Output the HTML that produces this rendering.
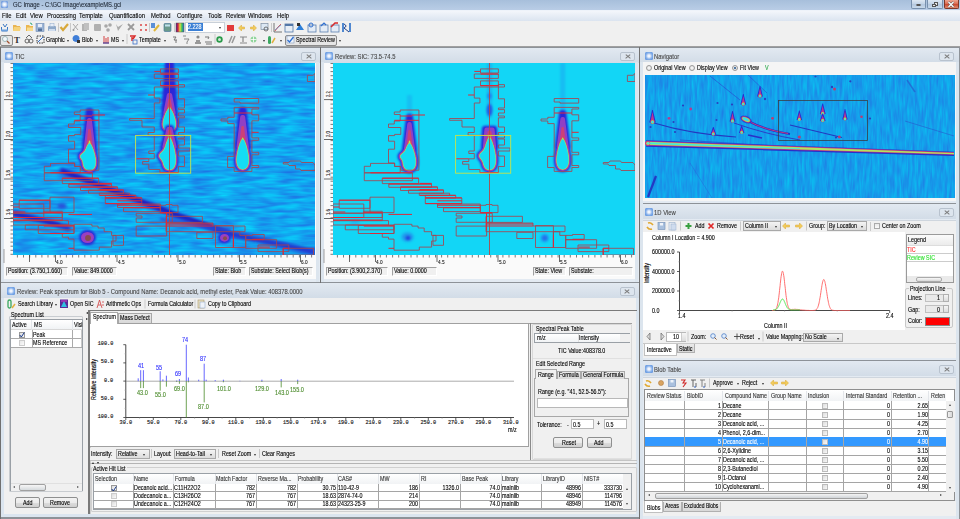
<!DOCTYPE html>
<html><head><meta charset="utf-8"><style>
*{box-sizing:border-box}
html,body{margin:0;padding:0}
body{width:960px;height:519px;overflow:hidden;position:relative;background:#f0f0f0;font-family:"Liberation Sans",sans-serif;font-size:7px;color:#000}
.a{position:absolute}
.t{position:absolute;white-space:nowrap;line-height:7px;height:7px;transform:scaleX(.84);transform-origin:0 0;-webkit-text-stroke:0.1px currentColor}
.pn{position:absolute;background:#e3eaf2;border-top:1px solid #8d9298}
.ptitle{position:absolute;left:0;right:0;top:0;height:15px;background:linear-gradient(#e2e9f1,#d2dce7)}
.pico{position:absolute;width:8px;height:8px;border-radius:1.5px;background:radial-gradient(circle at 50% 50%,#fff 0,#e6eefc 22%,#86b0ea 55%,#4f88da 100%)}
.pcl{position:absolute;width:15px;height:9px;border:1px solid #b8c2ce;border-radius:2px;background:#dde5ee}
.pcl:before,.pcl:after{content:"";position:absolute;left:3.5px;top:3px;width:6px;height:1.3px;background:#7a7a7a;transform:rotate(40deg)}.pcl:after{transform:rotate(-40deg)}
.vsep{position:absolute;background:#707070}
.ic{position:absolute;width:8px;height:8px}
.sep{position:absolute;width:1px;height:10px;background:#c5c5c5;border-right:1px solid #fff}
.dd{position:absolute;width:0;height:0;border-left:1.5px solid transparent;border-right:1.5px solid transparent;border-top:2px solid #333}
.s{position:absolute;white-space:nowrap;font-size:6.4px;line-height:6.4px;height:6.4px;transform:scaleX(.84);transform-origin:0 0;-webkit-text-stroke:0.12px currentColor}
.m{position:absolute;white-space:nowrap;font-family:"Liberation Mono",monospace;font-size:5.2px;line-height:5.2px;transform-origin:0 0;-webkit-text-stroke:0.15px currentColor}
.r{transform-origin:100% 0}

</style></head><body>
<div class="a" style="left:0;top:0;width:960px;height:10px;background:linear-gradient(#a7bfdb,#b9cde6)"></div>
<div class="a" style="left:0;top:10px;width:960px;height:1px;background:#eef3fa"></div>
<div class="a" style="left:1px;top:1px;width:7px;height:7px;border-radius:1.5px;background:radial-gradient(#fff 0,#e3ecfb 30%,#6f9be0 75%,#4d86d8 100%)"></div>
<div class="t" style="left:13px;top:1.3px;color:#1d2633">GC Image - C:\GC Image\exampleMS.gci</div>
<div class="a" style="left:910.5px;top:0;width:15.5px;height:8.5px;border:0.8px solid #7890ad;border-top:0;border-radius:0 0 2px 2px;background:linear-gradient(#dde7f2,#c2d3e6 50%,#b3c7de 51%,#c9d9ea)"></div>
<div class="a" style="left:915.5px;top:4px;width:5.5px;height:2px;border-radius:1px;background:#f4f4f4;border:0.6px solid #555"></div>
<div class="a" style="left:927px;top:0;width:15.5px;height:8.5px;border:0.8px solid #7890ad;border-top:0;border-radius:0 0 2px 2px;background:linear-gradient(#dde7f2,#c2d3e6 50%,#b3c7de 51%,#c9d9ea)"></div>
<div class="a" style="left:933.5px;top:2px;width:4px;height:3.5px;background:#e8e8e8;border:0.7px solid #555"></div><div class="a" style="left:932px;top:3.5px;width:4px;height:3.5px;background:#e8e8e8;border:0.7px solid #555"></div>
<div class="a" style="left:943.5px;top:0;width:15px;height:8.5px;border:0.8px solid #803828;border-top:0;border-radius:0 0 2px 2px;background:linear-gradient(#eea592,#d96a50 50%,#c8452c 51%,#e08a70)"></div>
<svg class="a" style="left:947px;top:1px" width="8" height="7"><path d="M1.5,1 L6.5,6 M6.5,1 L1.5,6" stroke="#555" stroke-width="2.2"/><path d="M1.5,1 L6.5,6 M6.5,1 L1.5,6" stroke="#fff" stroke-width="1.3"/></svg>
<div class="a" style="left:0;top:11px;width:960px;height:10px;background:linear-gradient(#f3f6fb,#dbe4f0)"></div>
<div class="t" style="left:2px;top:11.8px">File</div>
<div class="t" style="left:15.6px;top:11.8px">Edit</div>
<div class="t" style="left:29.7px;top:11.8px">View</div>
<div class="t" style="left:46.9px;top:11.8px">Processing</div>
<div class="t" style="left:79.2px;top:11.8px">Template</div>
<div class="t" style="left:109px;top:11.8px">Quantification</div>
<div class="t" style="left:151.3px;top:11.8px">Method</div>
<div class="t" style="left:176.7px;top:11.8px">Configure</div>
<div class="t" style="left:207.5px;top:11.8px">Tools</div>
<div class="t" style="left:225.8px;top:11.8px">Review</div>
<div class="t" style="left:248px;top:11.8px">Windows</div>
<div class="t" style="left:276.7px;top:11.8px">Help</div>
<div class="a" style="left:0;top:21px;width:960px;height:26px;background:#f0f0f0"></div>
<div class="a" style="left:0;top:46px;width:960px;height:1px;background:#a0a0a0"></div>
<div class="pn" style="left:0;top:47px;width:320px;height:236px"><div class="ptitle"></div><div class="pico" style="left:5px;top:4px"></div><div class="t" style="left:15px;top:4.5px;color:#444">TIC</div><div class="pcl" style="left:301px;top:4px"></div></div>
<div class="pn" style="left:321px;top:47px;width:319px;height:236px"><div class="ptitle"></div><div class="pico" style="left:4px;top:4px"></div><div class="t" style="left:14px;top:4.5px;color:#444">Review: SIC: 73.5-74.5</div><div class="pcl" style="left:299px;top:4px"></div></div>
<div class="pn" style="left:640px;top:47px;width:320px;height:156px"><div class="ptitle"></div><div class="pico" style="left:5px;top:4px"></div><div class="t" style="left:14px;top:4.5px;color:#444">Navigator</div><div class="pcl" style="left:299px;top:4px"></div></div>
<div class="pn" style="left:640px;top:203px;width:320px;height:157px"><div class="ptitle"></div><div class="pico" style="left:5px;top:4px"></div><div class="t" style="left:14px;top:4.5px;color:#444">1D View</div><div class="pcl" style="left:299px;top:4px"></div></div>
<div class="pn" style="left:640px;top:360px;width:320px;height:159px"><div class="ptitle"></div><div class="pico" style="left:5px;top:4px"></div><div class="t" style="left:14px;top:4.5px;color:#444">Blob Table</div><div class="pcl" style="left:299px;top:4px"></div></div>
<div class="pn" style="left:0;top:282px;width:640px;height:237px"><div class="ptitle"></div><div class="pico" style="left:7px;top:4px"></div><div class="t" style="left:17px;top:4.5px;color:#444">Review: Peak spectrum for Blob 5 - Compound Name: Decanoic acid, methyl ester, Peak Value: 408378.0000</div><div class="pcl" style="left:619.5px;top:4px"></div></div>



<!-- toolbar 1 -->
<svg class="a" style="left:0;top:21px" width="360" height="26">
<g stroke-width="1">
<!-- 1 import tray -->
<path d="M1.5,6 v4 h6 v-4" fill="none" stroke="#3b78c4"/><path d="M3,3 l2,3 l2,-3" fill="none" stroke="#3b78c4"/><rect x="1" y="8.5" width="7" height="1.5" fill="#6aa0dd"/>
<!-- 2 open folder -->
<path d="M13,4 h3 l1,1 h3 v5 h-7z" fill="#e8b453"/><path d="M14,6 h7 l-1,4 h-7z" fill="#f6d27a"/>
<!-- 3 folder -->
<path d="M26,4 h3 l1,1 h3 v5 h-7z" fill="#ebb64f"/><path d="M27,6.5 h6 v3.5 h-6z" fill="#f8dc8e"/><path d="M30,2 q2,0 2,2" stroke="#3a7" fill="none"/>
<!-- 4 save -->
<rect x="36" y="2.5" width="8" height="8" fill="#9db5d6" stroke="#6f8db5" stroke-width="0.6"/><rect x="38" y="3" width="4" height="3" fill="#e8eef7"/><rect x="38" y="7.5" width="4" height="2.5" fill="#55739c"/>
<!-- 5 print -->
<rect x="48" y="5" width="8" height="5" rx="1" fill="#8fa9c9"/><rect x="50" y="2.5" width="4" height="3" fill="#e7eef8" stroke="#8fa9c9" stroke-width="0.5"/><rect x="49" y="8" width="6" height="2" fill="#cfdcee"/>
<rect x="58" y="2" width="1" height="9" fill="#c9c9c9"/>
<!-- 6 yellow check -->
<path d="M60.5,6 l2.5,3 l5,-6" stroke="#d8a83a" stroke-width="2.2" fill="none"/>
<rect x="70" y="2" width="1" height="9" fill="#c9c9c9"/>
<!-- gray disabled icons -->
<path d="M73,3 l5,6 M78,3 l-5,6" stroke="#a8a8a8" stroke-width="1"/><circle cx="73.5" cy="9" r="1" fill="#999"/>
<rect x="82" y="3" width="5" height="7" fill="#b3b3b3"/><rect x="84" y="2" width="5" height="7" fill="#c0c0c0"/>
<rect x="94" y="3" width="7" height="7" rx="1" fill="#b0b0b0"/>
<circle cx="106" cy="5" r="1.8" fill="#a8a8a8"/><circle cx="110" cy="4" r="1.8" fill="#a8a8a8"/><circle cx="108" cy="9" r="1.8" fill="#a8a8a8"/>
<path d="M116,3 l2,3 l5,-3 l-5,7z" fill="#aaaaaa"/>
<path d="M128,3 l6,6 M134,3 l-6,6" stroke="#9a9a9a" stroke-width="1.8"/>
<g fill="#e07070"><rect x="140" y="3" width="2" height="2"/><rect x="145" y="3" width="2" height="2"/><rect x="140" y="8" width="2" height="2"/><rect x="145" y="8" width="2" height="2"/></g>
<rect x="149" y="2" width="1" height="9" fill="#c9c9c9"/>
<path d="M151,2 h4 v5 h-4z" fill="#5b8fd6"/><path d="M154,10 l5,-6" stroke="#e0b83a" stroke-width="2"/>
<rect x="164" y="2.5" width="7" height="8" rx="1" fill="#6a9a8c" stroke="#3d6f95" stroke-width="0.6"/><rect x="165" y="3.5" width="5" height="2" fill="#bfe0ee"/>
<rect x="174" y="2" width="1" height="9" fill="#c9c9c9"/>
<defs><linearGradient id="rb" x1="0" x2="1"><stop offset="0" stop-color="#5a1a8a"/><stop offset=".25" stop-color="#d02040"/><stop offset=".5" stop-color="#e8e040"/><stop offset=".75" stop-color="#30c060"/><stop offset="1" stop-color="#3060d0"/></linearGradient></defs>
<rect x="176" y="2" width="8" height="9" fill="url(#rb)" stroke="#555" stroke-width="0.5"/>
</g>
<!-- red stop -->
<rect x="227" y="4" width="7" height="6" fill="#e23a3a"/>
<path d="M238.5,7 l3,-3 v2 h3 v2 h-3 v2z" fill="#f2cc5c" stroke="#d9a730" stroke-width="0.5"/>
<path d="M256.5,7 l-3,-3 v2 h-3 v2 h3 v2z" fill="#f2cc5c" stroke="#d9a730" stroke-width="0.5"/>
<rect x="261" y="2.5" width="7" height="6" fill="#dce8f4" stroke="#7e8fa3" stroke-width="0.7"/><circle cx="266" cy="8" r="2" fill="none" stroke="#555" stroke-width="0.8"/>
<rect x="271" y="2" width="1" height="9" fill="#c9c9c9"/>
<path d="M274,2 v9 h8" stroke="#555" fill="none" stroke-width="0.8"/><path d="M275,10 l3,-4 l3,-3" stroke="#d04040" fill="none" stroke-width="0.8"/><path d="M275,9 l6,-5" stroke="#4070c0" fill="none" stroke-width="0.6"/>
<rect x="285" y="3" width="8" height="8" fill="#e8eef6" stroke="#5478a8" stroke-width="0.8"/><rect x="285" y="3" width="8" height="2" fill="#5478a8"/>
<path d="M296,9 l4,-6 l4,6z" fill="#2f7fd8"/><rect x="297" y="2" width="3" height="3" fill="#333"/>
<rect x="308" y="4" width="8" height="7" fill="#e4ecf6" stroke="#5a7fb0" stroke-width="0.8"/><circle cx="311" cy="4" r="2" fill="none" stroke="#2f6fd0" stroke-width="1"/>
<rect x="320" y="4" width="8" height="7" fill="#e4ecf6" stroke="#5a7fb0" stroke-width="0.8"/><path d="M321,5 l3,-3 l2,2" stroke="#2f6fd0" stroke-width="1.2" fill="none"/>
<rect x="331" y="4" width="8" height="7" fill="#e4ecf6" stroke="#5a7fb0" stroke-width="0.8"/><path d="M331,6 l4,-4 h3" stroke="#d82a2a" stroke-width="1.5" fill="none"/>
<path d="M343,2 v9 M350,2 v9" stroke="#2a6fc8" stroke-width="1.6"/><path d="M344,3 q4,2 0,4 l5,4" stroke="#1f3f88" stroke-width="1" fill="none"/>
</svg>
<!-- combobox 2.228 -->
<div class="a" style="left:185px;top:21.5px;width:40px;height:11.5px;background:#fff;border:1px solid #c9d0d8"></div>
<div class="a" style="left:187.5px;top:23px;width:15px;height:8px;background:#3a7fd5"></div>
<div class="s" style="left:188px;top:24px;color:#fff">2.228</div>
<div class="dd" style="left:218.5px;top:27px"></div>
<!-- toolbar 2 -->
<div class="a" style="left:0;top:34.5px;width:12.5px;height:11px;border:1px solid #8a8a8a;border-radius:2px;background:#e6e6e6"></div>
<svg class="a" style="left:0;top:33px" width="360" height="13">
<circle cx="5" cy="6" r="2.5" fill="#f4f8fc" stroke="#8aa" stroke-width="0.8"/><path d="M7,8 l2.5,2.5" stroke="#a05030" stroke-width="1.2"/>
<text x="14" y="10" font-family="Liberation Serif" font-size="9" font-weight="bold" fill="#333">T</text>
<circle cx="27" cy="8" r="2" fill="none" stroke="#444" stroke-width="0.8"/><circle cx="31" cy="8" r="2" fill="none" stroke="#444" stroke-width="0.8"/><path d="M26,5 l3,-3 l3,3" stroke="#444" fill="none" stroke-width="0.8"/>
<rect x="37" y="3" width="7" height="7" fill="none" stroke="#333" stroke-width="1" stroke-dasharray="1.5 1"/><path d="M38,9 l5,-5" stroke="#2f6fd0" stroke-width="1"/>
<path d="M76,2 a3.5,3.5 0 1,0 0.1,0z" fill="#3f7ed8"/><rect x="77" y="7" width="3" height="3" fill="#333"/>
<path d="M103,10 h6 M104,10 v-7 M106,10 v-5 M108,10 v-6" stroke="#d03030" stroke-width="0.9" fill="none"/><path d="M103,10 h6" stroke="#3050c0"/>
<rect x="126.5" y="1" width="1" height="10" fill="#c9c9c9"/>
<path d="M130,3 h5 l-2,3 M132,4 v4" stroke="#d82a2a" stroke-width="1.4" fill="none"/><rect x="133" y="7" width="4" height="4" fill="none" stroke="#3a6fc8" stroke-width="0.8"/>
<path d="M173,4 h3 l-2,3 h3 M176,7 v3" stroke="#777" stroke-width="1" fill="none"/>
<path d="M183,3 h3 M184,6 h5 l-2,3 M187,9 v2" stroke="#888" stroke-width="1" fill="none"/>
<circle cx="198" cy="4" r="1.6" fill="#888"/><path d="M195,9 h6 v2 h-6z M196,7 h4 v2 h-4z" fill="#999"/>
<path d="M205,4 h4 l-1,2 M205,9 h7 M206,11 h6" stroke="#777" stroke-width="1" fill="none"/>
<rect x="214.5" y="1" width="1" height="10" fill="#c9c9c9"/>
<circle cx="219.5" cy="6.5" r="3.2" fill="#2a9a4a"/><circle cx="219.5" cy="6.5" r="1.5" fill="#cfe8d5"/>
<path d="M229,10 l3,-7 M232,10 l3,-7" stroke="#9a9a9a" stroke-width="1.6"/>
<path d="M240,4 h7 M243,4 v5 M240,10 h7" stroke="#888" stroke-width="1.2" fill="none"/>
<circle cx="253.5" cy="6.5" r="3" fill="#8fd49a"/><path d="M253.5,3.5 v6 M250.5,6.5 h6" stroke="#fff" stroke-width="0.8"/>
<rect x="268" y="3" width="3" height="8" rx="1.5" fill="#3aa860"/><path d="M272,10 l3,-5" stroke="#e0b040" stroke-width="1.5"/>
</svg>
<div class="s" style="left:46px;top:36.8px">Graphic</div><div class="dd" style="left:67px;top:40px"></div>
<div class="s" style="left:82px;top:36.8px">Blob</div><div class="dd" style="left:96px;top:40px"></div>
<div class="s" style="left:111px;top:36.8px">MS</div><div class="dd" style="left:122px;top:40px"></div>
<div class="s" style="left:139px;top:36.8px">Template</div><div class="dd" style="left:164px;top:40px"></div>
<div class="dd" style="left:263px;top:40px"></div><div class="dd" style="left:280px;top:40px"></div>
<div class="a" style="left:284.5px;top:34.5px;width:52.5px;height:11px;border:1px solid #8a8a8a;border-radius:2px;background:#e6e6e6"></div>
<svg class="a" style="left:286px;top:35px" width="9" height="9"><rect x="1" y="1" width="7" height="7" fill="#eef3fa" stroke="#8aa0c0" stroke-width="0.6"/><path d="M1.5,5 l2,2 l4,-5" stroke="#2f6fd0" stroke-width="1.3" fill="none"/></svg>
<div class="s" style="left:296px;top:36.8px">Spectral Review</div><div class="dd" style="left:338.5px;top:40px"></div>
<div class="a" style="left:4px;top:63px;width:312px;height:216px;background:#fafafa"></div><div class="a" style="left:1px;top:62px;width:3px;height:220px;background:#dce5ee"></div><div class="a" style="left:316px;top:62px;width:3px;height:220px;background:#dce5ee"></div><svg class="a" style="left:0px;top:63px" width="320" height="205"><path d="M10.5,0.5 H13" stroke="#444" stroke-width="0.7"/><path d="M10.5,4.6 H13" stroke="#444" stroke-width="0.7"/><path d="M10.5,8.6 H13" stroke="#444" stroke-width="0.7"/><path d="M10.5,12.7 H13" stroke="#444" stroke-width="0.7"/><path d="M10.5,16.7 H13" stroke="#444" stroke-width="0.7"/><path d="M10.5,20.8 H13" stroke="#444" stroke-width="0.7"/><path d="M10.5,24.9 H13" stroke="#444" stroke-width="0.7"/><path d="M10.5,28.9 H13" stroke="#444" stroke-width="0.7"/><path d="M10.5,33.0 H13" stroke="#444" stroke-width="0.7"/><path d="M10.5,37.0 H13" stroke="#444" stroke-width="0.7"/><path d="M10.5,41.1 H13" stroke="#444" stroke-width="0.7"/><path d="M10.5,45.2 H13" stroke="#444" stroke-width="0.7"/><path d="M10.5,49.2 H13" stroke="#444" stroke-width="0.7"/><path d="M10.5,53.3 H13" stroke="#444" stroke-width="0.7"/><path d="M10.5,57.3 H13" stroke="#444" stroke-width="0.7"/><path d="M10.5,61.4 H13" stroke="#444" stroke-width="0.7"/><path d="M10.5,65.5 H13" stroke="#444" stroke-width="0.7"/><path d="M10.5,69.5 H13" stroke="#444" stroke-width="0.7"/><path d="M10.5,73.6 H13" stroke="#444" stroke-width="0.7"/><path d="M10.5,77.6 H13" stroke="#444" stroke-width="0.7"/><path d="M10.5,81.7 H13" stroke="#444" stroke-width="0.7"/><path d="M10.5,85.8 H13" stroke="#444" stroke-width="0.7"/><path d="M10.5,89.8 H13" stroke="#444" stroke-width="0.7"/><path d="M10.5,93.9 H13" stroke="#444" stroke-width="0.7"/><path d="M10.5,97.9 H13" stroke="#444" stroke-width="0.7"/><path d="M10.5,102.0 H13" stroke="#444" stroke-width="0.7"/><path d="M10.5,106.1 H13" stroke="#444" stroke-width="0.7"/><path d="M10.5,110.1 H13" stroke="#444" stroke-width="0.7"/><path d="M10.5,114.2 H13" stroke="#444" stroke-width="0.7"/><path d="M10.5,118.2 H13" stroke="#444" stroke-width="0.7"/><path d="M10.5,122.3 H13" stroke="#444" stroke-width="0.7"/><path d="M10.5,126.4 H13" stroke="#444" stroke-width="0.7"/><path d="M10.5,130.4 H13" stroke="#444" stroke-width="0.7"/><path d="M10.5,134.5 H13" stroke="#444" stroke-width="0.7"/><path d="M10.5,138.5 H13" stroke="#444" stroke-width="0.7"/><path d="M10.5,142.6 H13" stroke="#444" stroke-width="0.7"/><path d="M10.5,146.7 H13" stroke="#444" stroke-width="0.7"/><path d="M10.5,150.7 H13" stroke="#444" stroke-width="0.7"/><path d="M10.5,154.8 H13" stroke="#444" stroke-width="0.7"/><path d="M10.5,158.8 H13" stroke="#444" stroke-width="0.7"/><path d="M10.5,162.9 H13" stroke="#444" stroke-width="0.7"/><path d="M10.5,167.0 H13" stroke="#444" stroke-width="0.7"/><path d="M10.5,171.0 H13" stroke="#444" stroke-width="0.7"/><path d="M10.5,175.1 H13" stroke="#444" stroke-width="0.7"/><path d="M10.5,179.1 H13" stroke="#444" stroke-width="0.7"/><path d="M10.5,183.2 H13" stroke="#444" stroke-width="0.7"/><path d="M10.5,187.3 H13" stroke="#444" stroke-width="0.7"/><path d="M10.5,191.3 H13" stroke="#444" stroke-width="0.7"/><path d="M4,36.6 H13" stroke="#444" stroke-width="0.8"/><path d="M4,76.5 H13" stroke="#444" stroke-width="0.8"/><path d="M4,116 H13" stroke="#444" stroke-width="0.8"/><path d="M4,155.5 H13" stroke="#444" stroke-width="0.8"/><path d="M17.4,192 v2.5" stroke="#444" stroke-width="0.7"/><path d="M23.5,192 v2.5" stroke="#444" stroke-width="0.7"/><path d="M29.7,192 v2.5" stroke="#444" stroke-width="0.7"/><path d="M35.8,192 v2.5" stroke="#444" stroke-width="0.7"/><path d="M41.9,192 v2.5" stroke="#444" stroke-width="0.7"/><path d="M48.0,192 v2.5" stroke="#444" stroke-width="0.7"/><path d="M54.2,192 v2.5" stroke="#444" stroke-width="0.7"/><path d="M60.3,192 v2.5" stroke="#444" stroke-width="0.7"/><path d="M66.4,192 v2.5" stroke="#444" stroke-width="0.7"/><path d="M72.6,192 v2.5" stroke="#444" stroke-width="0.7"/><path d="M78.7,192 v2.5" stroke="#444" stroke-width="0.7"/><path d="M84.8,192 v2.5" stroke="#444" stroke-width="0.7"/><path d="M91.0,192 v2.5" stroke="#444" stroke-width="0.7"/><path d="M97.1,192 v2.5" stroke="#444" stroke-width="0.7"/><path d="M103.2,192 v2.5" stroke="#444" stroke-width="0.7"/><path d="M109.3,192 v2.5" stroke="#444" stroke-width="0.7"/><path d="M115.5,192 v2.5" stroke="#444" stroke-width="0.7"/><path d="M121.6,192 v2.5" stroke="#444" stroke-width="0.7"/><path d="M127.7,192 v2.5" stroke="#444" stroke-width="0.7"/><path d="M133.9,192 v2.5" stroke="#444" stroke-width="0.7"/><path d="M140.0,192 v2.5" stroke="#444" stroke-width="0.7"/><path d="M146.1,192 v2.5" stroke="#444" stroke-width="0.7"/><path d="M152.3,192 v2.5" stroke="#444" stroke-width="0.7"/><path d="M158.4,192 v2.5" stroke="#444" stroke-width="0.7"/><path d="M164.5,192 v2.5" stroke="#444" stroke-width="0.7"/><path d="M170.7,192 v2.5" stroke="#444" stroke-width="0.7"/><path d="M176.8,192 v2.5" stroke="#444" stroke-width="0.7"/><path d="M182.9,192 v2.5" stroke="#444" stroke-width="0.7"/><path d="M189.0,192 v2.5" stroke="#444" stroke-width="0.7"/><path d="M195.2,192 v2.5" stroke="#444" stroke-width="0.7"/><path d="M201.3,192 v2.5" stroke="#444" stroke-width="0.7"/><path d="M207.4,192 v2.5" stroke="#444" stroke-width="0.7"/><path d="M213.6,192 v2.5" stroke="#444" stroke-width="0.7"/><path d="M219.7,192 v2.5" stroke="#444" stroke-width="0.7"/><path d="M225.8,192 v2.5" stroke="#444" stroke-width="0.7"/><path d="M231.9,192 v2.5" stroke="#444" stroke-width="0.7"/><path d="M238.1,192 v2.5" stroke="#444" stroke-width="0.7"/><path d="M244.2,192 v2.5" stroke="#444" stroke-width="0.7"/><path d="M250.3,192 v2.5" stroke="#444" stroke-width="0.7"/><path d="M256.5,192 v2.5" stroke="#444" stroke-width="0.7"/><path d="M262.6,192 v2.5" stroke="#444" stroke-width="0.7"/><path d="M268.7,192 v2.5" stroke="#444" stroke-width="0.7"/><path d="M274.9,192 v2.5" stroke="#444" stroke-width="0.7"/><path d="M281.0,192 v2.5" stroke="#444" stroke-width="0.7"/><path d="M287.1,192 v2.5" stroke="#444" stroke-width="0.7"/><path d="M293.2,192 v2.5" stroke="#444" stroke-width="0.7"/><path d="M299.4,192 v2.5" stroke="#444" stroke-width="0.7"/><path d="M305.5,192 v2.5" stroke="#444" stroke-width="0.7"/><path d="M311.6,192 v2.5" stroke="#444" stroke-width="0.7"/><path d="M29.5,192 v7" stroke="#444" stroke-width="0.8"/><path d="M55.5,192 v7" stroke="#444" stroke-width="0.8"/><path d="M117,192 v7" stroke="#444" stroke-width="0.8"/><path d="M178,192 v7" stroke="#444" stroke-width="0.8"/><path d="M239.5,192 v7" stroke="#444" stroke-width="0.8"/><path d="M300.5,192 v7" stroke="#444" stroke-width="0.8"/><path d="M4,186 v14" stroke="#888" stroke-width="0.8"/></svg><div class="s" style="left:56px;top:258.8px;color:#222;font-size:5.6px">4.0</div><div class="s" style="left:117.5px;top:258.8px;color:#222;font-size:5.6px">4.5</div><div class="s" style="left:178.5px;top:258.8px;color:#222;font-size:5.6px">5.0</div><div class="s" style="left:240px;top:258.8px;color:#222;font-size:5.6px">5.5</div><div class="s" style="left:301px;top:258.8px;color:#222;font-size:5.6px">6.0</div><div class="s" style="left:4.8px;top:97px;color:#222;font-size:5px;transform:rotate(-90deg) scaleX(.84)">2.2</div><div class="s" style="left:4.8px;top:136.5px;color:#222;font-size:5px;transform:rotate(-90deg) scaleX(.84)">2.0</div><div class="s" style="left:4.8px;top:176px;color:#222;font-size:5px;transform:rotate(-90deg) scaleX(.84)">1.8</div><div class="s" style="left:4.8px;top:215px;color:#222;font-size:5px;transform:rotate(-90deg) scaleX(.84)">1.6</div><div class="a" style="left:324px;top:63px;width:311px;height:216px;background:#fafafa"></div><div class="a" style="left:321px;top:62px;width:3px;height:220px;background:#dce5ee"></div><div class="a" style="left:635px;top:62px;width:3px;height:220px;background:#dce5ee"></div><svg class="a" style="left:320px;top:63px" width="320" height="205"><path d="M10.5,0.5 H13" stroke="#444" stroke-width="0.7"/><path d="M10.5,4.6 H13" stroke="#444" stroke-width="0.7"/><path d="M10.5,8.6 H13" stroke="#444" stroke-width="0.7"/><path d="M10.5,12.7 H13" stroke="#444" stroke-width="0.7"/><path d="M10.5,16.7 H13" stroke="#444" stroke-width="0.7"/><path d="M10.5,20.8 H13" stroke="#444" stroke-width="0.7"/><path d="M10.5,24.9 H13" stroke="#444" stroke-width="0.7"/><path d="M10.5,28.9 H13" stroke="#444" stroke-width="0.7"/><path d="M10.5,33.0 H13" stroke="#444" stroke-width="0.7"/><path d="M10.5,37.0 H13" stroke="#444" stroke-width="0.7"/><path d="M10.5,41.1 H13" stroke="#444" stroke-width="0.7"/><path d="M10.5,45.2 H13" stroke="#444" stroke-width="0.7"/><path d="M10.5,49.2 H13" stroke="#444" stroke-width="0.7"/><path d="M10.5,53.3 H13" stroke="#444" stroke-width="0.7"/><path d="M10.5,57.3 H13" stroke="#444" stroke-width="0.7"/><path d="M10.5,61.4 H13" stroke="#444" stroke-width="0.7"/><path d="M10.5,65.5 H13" stroke="#444" stroke-width="0.7"/><path d="M10.5,69.5 H13" stroke="#444" stroke-width="0.7"/><path d="M10.5,73.6 H13" stroke="#444" stroke-width="0.7"/><path d="M10.5,77.6 H13" stroke="#444" stroke-width="0.7"/><path d="M10.5,81.7 H13" stroke="#444" stroke-width="0.7"/><path d="M10.5,85.8 H13" stroke="#444" stroke-width="0.7"/><path d="M10.5,89.8 H13" stroke="#444" stroke-width="0.7"/><path d="M10.5,93.9 H13" stroke="#444" stroke-width="0.7"/><path d="M10.5,97.9 H13" stroke="#444" stroke-width="0.7"/><path d="M10.5,102.0 H13" stroke="#444" stroke-width="0.7"/><path d="M10.5,106.1 H13" stroke="#444" stroke-width="0.7"/><path d="M10.5,110.1 H13" stroke="#444" stroke-width="0.7"/><path d="M10.5,114.2 H13" stroke="#444" stroke-width="0.7"/><path d="M10.5,118.2 H13" stroke="#444" stroke-width="0.7"/><path d="M10.5,122.3 H13" stroke="#444" stroke-width="0.7"/><path d="M10.5,126.4 H13" stroke="#444" stroke-width="0.7"/><path d="M10.5,130.4 H13" stroke="#444" stroke-width="0.7"/><path d="M10.5,134.5 H13" stroke="#444" stroke-width="0.7"/><path d="M10.5,138.5 H13" stroke="#444" stroke-width="0.7"/><path d="M10.5,142.6 H13" stroke="#444" stroke-width="0.7"/><path d="M10.5,146.7 H13" stroke="#444" stroke-width="0.7"/><path d="M10.5,150.7 H13" stroke="#444" stroke-width="0.7"/><path d="M10.5,154.8 H13" stroke="#444" stroke-width="0.7"/><path d="M10.5,158.8 H13" stroke="#444" stroke-width="0.7"/><path d="M10.5,162.9 H13" stroke="#444" stroke-width="0.7"/><path d="M10.5,167.0 H13" stroke="#444" stroke-width="0.7"/><path d="M10.5,171.0 H13" stroke="#444" stroke-width="0.7"/><path d="M10.5,175.1 H13" stroke="#444" stroke-width="0.7"/><path d="M10.5,179.1 H13" stroke="#444" stroke-width="0.7"/><path d="M10.5,183.2 H13" stroke="#444" stroke-width="0.7"/><path d="M10.5,187.3 H13" stroke="#444" stroke-width="0.7"/><path d="M10.5,191.3 H13" stroke="#444" stroke-width="0.7"/><path d="M4,36.6 H13" stroke="#444" stroke-width="0.8"/><path d="M4,76.5 H13" stroke="#444" stroke-width="0.8"/><path d="M4,116 H13" stroke="#444" stroke-width="0.8"/><path d="M4,155.5 H13" stroke="#444" stroke-width="0.8"/><path d="M17.4,192 v2.5" stroke="#444" stroke-width="0.7"/><path d="M23.5,192 v2.5" stroke="#444" stroke-width="0.7"/><path d="M29.7,192 v2.5" stroke="#444" stroke-width="0.7"/><path d="M35.8,192 v2.5" stroke="#444" stroke-width="0.7"/><path d="M41.9,192 v2.5" stroke="#444" stroke-width="0.7"/><path d="M48.0,192 v2.5" stroke="#444" stroke-width="0.7"/><path d="M54.2,192 v2.5" stroke="#444" stroke-width="0.7"/><path d="M60.3,192 v2.5" stroke="#444" stroke-width="0.7"/><path d="M66.4,192 v2.5" stroke="#444" stroke-width="0.7"/><path d="M72.6,192 v2.5" stroke="#444" stroke-width="0.7"/><path d="M78.7,192 v2.5" stroke="#444" stroke-width="0.7"/><path d="M84.8,192 v2.5" stroke="#444" stroke-width="0.7"/><path d="M91.0,192 v2.5" stroke="#444" stroke-width="0.7"/><path d="M97.1,192 v2.5" stroke="#444" stroke-width="0.7"/><path d="M103.2,192 v2.5" stroke="#444" stroke-width="0.7"/><path d="M109.3,192 v2.5" stroke="#444" stroke-width="0.7"/><path d="M115.5,192 v2.5" stroke="#444" stroke-width="0.7"/><path d="M121.6,192 v2.5" stroke="#444" stroke-width="0.7"/><path d="M127.7,192 v2.5" stroke="#444" stroke-width="0.7"/><path d="M133.9,192 v2.5" stroke="#444" stroke-width="0.7"/><path d="M140.0,192 v2.5" stroke="#444" stroke-width="0.7"/><path d="M146.1,192 v2.5" stroke="#444" stroke-width="0.7"/><path d="M152.3,192 v2.5" stroke="#444" stroke-width="0.7"/><path d="M158.4,192 v2.5" stroke="#444" stroke-width="0.7"/><path d="M164.5,192 v2.5" stroke="#444" stroke-width="0.7"/><path d="M170.7,192 v2.5" stroke="#444" stroke-width="0.7"/><path d="M176.8,192 v2.5" stroke="#444" stroke-width="0.7"/><path d="M182.9,192 v2.5" stroke="#444" stroke-width="0.7"/><path d="M189.0,192 v2.5" stroke="#444" stroke-width="0.7"/><path d="M195.2,192 v2.5" stroke="#444" stroke-width="0.7"/><path d="M201.3,192 v2.5" stroke="#444" stroke-width="0.7"/><path d="M207.4,192 v2.5" stroke="#444" stroke-width="0.7"/><path d="M213.6,192 v2.5" stroke="#444" stroke-width="0.7"/><path d="M219.7,192 v2.5" stroke="#444" stroke-width="0.7"/><path d="M225.8,192 v2.5" stroke="#444" stroke-width="0.7"/><path d="M231.9,192 v2.5" stroke="#444" stroke-width="0.7"/><path d="M238.1,192 v2.5" stroke="#444" stroke-width="0.7"/><path d="M244.2,192 v2.5" stroke="#444" stroke-width="0.7"/><path d="M250.3,192 v2.5" stroke="#444" stroke-width="0.7"/><path d="M256.5,192 v2.5" stroke="#444" stroke-width="0.7"/><path d="M262.6,192 v2.5" stroke="#444" stroke-width="0.7"/><path d="M268.7,192 v2.5" stroke="#444" stroke-width="0.7"/><path d="M274.9,192 v2.5" stroke="#444" stroke-width="0.7"/><path d="M281.0,192 v2.5" stroke="#444" stroke-width="0.7"/><path d="M287.1,192 v2.5" stroke="#444" stroke-width="0.7"/><path d="M293.2,192 v2.5" stroke="#444" stroke-width="0.7"/><path d="M299.4,192 v2.5" stroke="#444" stroke-width="0.7"/><path d="M305.5,192 v2.5" stroke="#444" stroke-width="0.7"/><path d="M311.6,192 v2.5" stroke="#444" stroke-width="0.7"/><path d="M29.5,192 v7" stroke="#444" stroke-width="0.8"/><path d="M55.5,192 v7" stroke="#444" stroke-width="0.8"/><path d="M117,192 v7" stroke="#444" stroke-width="0.8"/><path d="M178,192 v7" stroke="#444" stroke-width="0.8"/><path d="M239.5,192 v7" stroke="#444" stroke-width="0.8"/><path d="M300.5,192 v7" stroke="#444" stroke-width="0.8"/><path d="M4,186 v14" stroke="#888" stroke-width="0.8"/></svg><div class="s" style="left:376px;top:258.8px;color:#222;font-size:5.6px">4.0</div><div class="s" style="left:437.5px;top:258.8px;color:#222;font-size:5.6px">4.5</div><div class="s" style="left:498.5px;top:258.8px;color:#222;font-size:5.6px">5.0</div><div class="s" style="left:560px;top:258.8px;color:#222;font-size:5.6px">5.5</div><div class="s" style="left:621px;top:258.8px;color:#222;font-size:5.6px">6.0</div><div class="s" style="left:324.8px;top:97px;color:#222;font-size:5px;transform:rotate(-90deg) scaleX(.84)">2.2</div><div class="s" style="left:324.8px;top:136.5px;color:#222;font-size:5px;transform:rotate(-90deg) scaleX(.84)">2.0</div><div class="s" style="left:324.8px;top:176px;color:#222;font-size:5px;transform:rotate(-90deg) scaleX(.84)">1.8</div><div class="s" style="left:324.8px;top:215px;color:#222;font-size:5px;transform:rotate(-90deg) scaleX(.84)">1.6</div><svg class="a" style="left:13px;top:63px" width="302" height="192"><defs>
<filter id="bl0" x="-50%" y="-50%" width="200%" height="200%" color-interpolation-filters="sRGB"><feGaussianBlur stdDeviation="1.1"/></filter>
<filter id="bl1" x="-50%" y="-50%" width="200%" height="200%" color-interpolation-filters="sRGB"><feGaussianBlur stdDeviation="0.6"/></filter>
<filter id="bl2" x="-50%" y="-50%" width="200%" height="200%" color-interpolation-filters="sRGB"><feGaussianBlur stdDeviation="0.45"/></filter>
<filter id="bl3" x="-50%" y="-50%" width="200%" height="200%" color-interpolation-filters="sRGB"><feGaussianBlur stdDeviation="0.35"/></filter>
<filter id="bl4" x="-50%" y="-50%" width="200%" height="200%" color-interpolation-filters="sRGB"><feGaussianBlur stdDeviation="0.3"/></filter>
<filter id="b2" x="-50%" y="-50%" width="200%" height="200%" color-interpolation-filters="sRGB"><feGaussianBlur stdDeviation="1.6"/></filter>
<filter id="b1" x="-50%" y="-50%" width="200%" height="200%" color-interpolation-filters="sRGB"><feGaussianBlur stdDeviation="0.8"/></filter>
<filter id="nz" x="0" y="0" width="100%" height="100%" color-interpolation-filters="sRGB"><feTurbulence type="fractalNoise" baseFrequency="0.045 0.28" numOctaves="2" seed="7"/><feColorMatrix type="matrix" values="0 0 0 -0.12 0.13  0 0 0 0.52 0.39  0 0 0 0.12 0.88  0 0 0 0 1"/></filter>
</defs><rect width="302" height="192" filter="url(#nz)"/><path d="M47,107 L107,130 L162,152 L217,171 L302,189" stroke="#2438d0" stroke-width="6" fill="none" filter="url(#b2)"/><path d="M49,108 L107,130.5 L162,151 L217,170" stroke="#2020c0" stroke-width="3.2" fill="none" filter="url(#b1)"/><path d="M0,150 L32,158 L57,166" stroke="#2438d0" stroke-width="5.5" fill="none" filter="url(#b2)"/><path d="M0,151 L32,158 L47,162" stroke="#2020c0" stroke-width="2.8" fill="none" filter="url(#b1)"/><ellipse cx="49" cy="143" rx="5" ry="3" fill="#2a50d8" filter="url(#b2)"/><path d="M147,156 L217,168" stroke="#2a50d8" stroke-width="3" fill="none" filter="url(#b2)"/><ellipse cx="74.5" cy="174.5" rx="8.5" ry="7.7" fill="#2a2ad8" filter="url(#b1)"/><ellipse cx="74.5" cy="174.5" rx="6.5" ry="5.5249999999999995" fill="#9a40c0" filter="url(#bl1)"/><ellipse cx="75.0" cy="175.0" rx="2.9250000000000003" ry="2.9250000000000003" fill="#8a4a50" filter="url(#bl1)"/><ellipse cx="211.5" cy="174.8" rx="6.5" ry="5.7" fill="#2a2ad8" filter="url(#b1)"/><ellipse cx="211.5" cy="174.8" rx="4.5" ry="3.8249999999999997" fill="#9a40c0" filter="url(#bl1)"/><ellipse cx="212.0" cy="175.3" rx="2.025" ry="2.025" fill="#8a4a50" filter="url(#bl1)"/><g filter="url(#bl0)"><path d="M76.5,80.5 L77.4,81.2 L77.9,81.8 L78.3,82.5 L78.6,83.2 L78.9,83.8 L79.2,84.5 L79.5,85.2 L79.7,85.9 L80.0,86.5 L80.2,87.2 L80.4,87.9 L80.6,88.5 L80.8,89.2 L81.0,89.9 L81.2,90.6 L81.4,91.2 L81.5,91.9 L81.7,92.6 L81.8,93.2 L81.9,93.9 L82.1,94.6 L82.2,95.2 L82.3,95.9 L82.4,96.6 L82.4,97.2 L82.5,97.9 L82.5,98.6 L82.5,99.3 L82.5,99.9 L82.4,100.6 L82.3,101.3 L82.2,101.9 L82.1,102.6 L81.8,103.3 L81.6,104.0 L81.2,104.6 L80.7,105.3 L80.1,106.0 L79.1,106.6 L76.5,107.3 L76.5,107.3 L73.8,106.6 L72.8,106.0 L72.1,105.3 L71.7,104.6 L71.3,104.0 L71.0,103.3 L70.7,102.6 L70.6,101.9 L70.4,101.3 L70.3,100.6 L70.2,99.9 L70.1,99.3 L70.0,98.6 L69.8,97.9 L69.5,97.2 L69.2,96.6 L68.7,95.9 L68.2,95.2 L67.8,94.6 L67.6,93.9 L67.5,93.2 L67.7,92.6 L68.2,91.9 L68.9,91.2 L69.6,90.6 L70.4,89.9 L71.0,89.2 L71.6,88.5 L72.1,87.9 L72.5,87.2 L72.8,86.5 L73.1,85.9 L73.4,85.2 L73.7,84.5 L74.0,83.8 L74.3,83.2 L74.6,82.5 L75.0,81.8 L75.5,81.2 L76.5,80.5 Z" fill="#2a26d8" stroke="#2a26d8" stroke-width="6.0" stroke-linejoin="round"/><path d="M75.7,48.0 L77.3,48.0 L81.3,87.0 L71.7,87.0 Z" fill="#2a26d8" stroke="#2a26d8" stroke-width="6.0" stroke-linejoin="round"/></g><g filter="url(#bl1)"><path d="M76.5,80.5 L77.4,81.2 L77.9,81.8 L78.3,82.5 L78.6,83.2 L78.9,83.8 L79.2,84.5 L79.5,85.2 L79.7,85.9 L80.0,86.5 L80.2,87.2 L80.4,87.9 L80.6,88.5 L80.8,89.2 L81.0,89.9 L81.2,90.6 L81.4,91.2 L81.5,91.9 L81.7,92.6 L81.8,93.2 L81.9,93.9 L82.1,94.6 L82.2,95.2 L82.3,95.9 L82.4,96.6 L82.4,97.2 L82.5,97.9 L82.5,98.6 L82.5,99.3 L82.5,99.9 L82.4,100.6 L82.3,101.3 L82.2,101.9 L82.1,102.6 L81.8,103.3 L81.6,104.0 L81.2,104.6 L80.7,105.3 L80.1,106.0 L79.1,106.6 L76.5,107.3 L76.5,107.3 L73.8,106.6 L72.8,106.0 L72.1,105.3 L71.7,104.6 L71.3,104.0 L71.0,103.3 L70.7,102.6 L70.6,101.9 L70.4,101.3 L70.3,100.6 L70.2,99.9 L70.1,99.3 L70.0,98.6 L69.8,97.9 L69.5,97.2 L69.2,96.6 L68.7,95.9 L68.2,95.2 L67.8,94.6 L67.6,93.9 L67.5,93.2 L67.7,92.6 L68.2,91.9 L68.9,91.2 L69.6,90.6 L70.4,89.9 L71.0,89.2 L71.6,88.5 L72.1,87.9 L72.5,87.2 L72.8,86.5 L73.1,85.9 L73.4,85.2 L73.7,84.5 L74.0,83.8 L74.3,83.2 L74.6,82.5 L75.0,81.8 L75.5,81.2 L76.5,80.5 Z" fill="#9040c4" stroke="#9040c4" stroke-width="3.8" stroke-linejoin="round"/><path d="M76.0,57.0 L77.0,57.0 L80.5,87.0 L72.5,87.0 Z" fill="#9040c4" stroke="#9040c4" stroke-width="3.8" stroke-linejoin="round"/></g><g filter="url(#bl2)"><path d="M76.5,80.5 L77.4,81.2 L77.9,81.8 L78.3,82.5 L78.6,83.2 L78.9,83.8 L79.2,84.5 L79.5,85.2 L79.7,85.9 L80.0,86.5 L80.2,87.2 L80.4,87.9 L80.6,88.5 L80.8,89.2 L81.0,89.9 L81.2,90.6 L81.4,91.2 L81.5,91.9 L81.7,92.6 L81.8,93.2 L81.9,93.9 L82.1,94.6 L82.2,95.2 L82.3,95.9 L82.4,96.6 L82.4,97.2 L82.5,97.9 L82.5,98.6 L82.5,99.3 L82.5,99.9 L82.4,100.6 L82.3,101.3 L82.2,101.9 L82.1,102.6 L81.8,103.3 L81.6,104.0 L81.2,104.6 L80.7,105.3 L80.1,106.0 L79.1,106.6 L76.5,107.3 L76.5,107.3 L73.8,106.6 L72.8,106.0 L72.1,105.3 L71.7,104.6 L71.3,104.0 L71.0,103.3 L70.7,102.6 L70.6,101.9 L70.4,101.3 L70.3,100.6 L70.2,99.9 L70.1,99.3 L70.0,98.6 L69.8,97.9 L69.5,97.2 L69.2,96.6 L68.7,95.9 L68.2,95.2 L67.8,94.6 L67.6,93.9 L67.5,93.2 L67.7,92.6 L68.2,91.9 L68.9,91.2 L69.6,90.6 L70.4,89.9 L71.0,89.2 L71.6,88.5 L72.1,87.9 L72.5,87.2 L72.8,86.5 L73.1,85.9 L73.4,85.2 L73.7,84.5 L74.0,83.8 L74.3,83.2 L74.6,82.5 L75.0,81.8 L75.5,81.2 L76.5,80.5 Z" fill="#cc4078" stroke="#cc4078" stroke-width="2.2" stroke-linejoin="round"/><path d="M76.3,67.0 L76.7,67.0 L79.0,87.0 L74.0,87.0 Z" fill="#cc4078" stroke="#cc4078" stroke-width="2.2" stroke-linejoin="round"/></g><g filter="url(#bl3)"><path d="M76.5,80.5 L77.4,81.2 L77.9,81.8 L78.3,82.5 L78.6,83.2 L78.9,83.8 L79.2,84.5 L79.5,85.2 L79.7,85.9 L80.0,86.5 L80.2,87.2 L80.4,87.9 L80.6,88.5 L80.8,89.2 L81.0,89.9 L81.2,90.6 L81.4,91.2 L81.5,91.9 L81.7,92.6 L81.8,93.2 L81.9,93.9 L82.1,94.6 L82.2,95.2 L82.3,95.9 L82.4,96.6 L82.4,97.2 L82.5,97.9 L82.5,98.6 L82.5,99.3 L82.5,99.9 L82.4,100.6 L82.3,101.3 L82.2,101.9 L82.1,102.6 L81.8,103.3 L81.6,104.0 L81.2,104.6 L80.7,105.3 L80.1,106.0 L79.1,106.6 L76.5,107.3 L76.5,107.3 L73.8,106.6 L72.8,106.0 L72.1,105.3 L71.7,104.6 L71.3,104.0 L71.0,103.3 L70.7,102.6 L70.6,101.9 L70.4,101.3 L70.3,100.6 L70.2,99.9 L70.1,99.3 L70.0,98.6 L69.8,97.9 L69.5,97.2 L69.2,96.6 L68.7,95.9 L68.2,95.2 L67.8,94.6 L67.6,93.9 L67.5,93.2 L67.7,92.6 L68.2,91.9 L68.9,91.2 L69.6,90.6 L70.4,89.9 L71.0,89.2 L71.6,88.5 L72.1,87.9 L72.5,87.2 L72.8,86.5 L73.1,85.9 L73.4,85.2 L73.7,84.5 L74.0,83.8 L74.3,83.2 L74.6,82.5 L75.0,81.8 L75.5,81.2 L76.5,80.5 Z" fill="#c0e640" stroke="#c0e640" stroke-width="1.1" stroke-linejoin="round"/><path d="M76.4,78.0 L76.6,78.0 L78.0,87.0 L75.0,87.0 Z" fill="#c0e640" stroke="#c0e640" stroke-width="1.1" stroke-linejoin="round"/></g><path d="M76.5,80.5 L77.4,81.2 L77.9,81.8 L78.3,82.5 L78.6,83.2 L78.9,83.8 L79.2,84.5 L79.5,85.2 L79.7,85.9 L80.0,86.5 L80.2,87.2 L80.4,87.9 L80.6,88.5 L80.8,89.2 L81.0,89.9 L81.2,90.6 L81.4,91.2 L81.5,91.9 L81.7,92.6 L81.8,93.2 L81.9,93.9 L82.1,94.6 L82.2,95.2 L82.3,95.9 L82.4,96.6 L82.4,97.2 L82.5,97.9 L82.5,98.6 L82.5,99.3 L82.5,99.9 L82.4,100.6 L82.3,101.3 L82.2,101.9 L82.1,102.6 L81.8,103.3 L81.6,104.0 L81.2,104.6 L80.7,105.3 L80.1,106.0 L79.1,106.6 L76.5,107.3 L76.5,107.3 L73.8,106.6 L72.8,106.0 L72.1,105.3 L71.7,104.6 L71.3,104.0 L71.0,103.3 L70.7,102.6 L70.6,101.9 L70.4,101.3 L70.3,100.6 L70.2,99.9 L70.1,99.3 L70.0,98.6 L69.8,97.9 L69.5,97.2 L69.2,96.6 L68.7,95.9 L68.2,95.2 L67.8,94.6 L67.6,93.9 L67.5,93.2 L67.7,92.6 L68.2,91.9 L68.9,91.2 L69.6,90.6 L70.4,89.9 L71.0,89.2 L71.6,88.5 L72.1,87.9 L72.5,87.2 L72.8,86.5 L73.1,85.9 L73.4,85.2 L73.7,84.5 L74.0,83.8 L74.3,83.2 L74.6,82.5 L75.0,81.8 L75.5,81.2 L76.5,80.5 Z" fill="#14dcf4" stroke="#14dcf4" stroke-width="0.3" filter="url(#bl4)"/><g filter="url(#bl0)"><path d="M156.5,45.5 L157.4,46.1 L157.9,46.6 L158.3,47.2 L158.6,47.8 L158.9,48.3 L159.2,48.9 L159.5,49.4 L159.7,50.0 L160.0,50.6 L160.2,51.1 L160.4,51.7 L160.6,52.2 L160.8,52.8 L161.0,53.4 L161.2,53.9 L161.4,54.5 L161.5,55.1 L161.7,55.6 L161.8,56.2 L161.9,56.8 L162.1,57.3 L162.2,57.9 L162.3,58.4 L162.4,59.0 L162.4,59.6 L162.5,60.1 L162.5,60.7 L162.5,61.2 L162.5,61.8 L162.4,62.4 L162.3,62.9 L162.2,63.5 L162.1,64.1 L161.8,64.6 L161.6,65.2 L161.2,65.8 L160.7,66.3 L160.1,66.9 L159.1,67.4 L156.5,68.0 L156.5,68.0 L153.8,67.4 L152.8,66.9 L152.1,66.3 L151.6,65.8 L151.2,65.2 L150.9,64.6 L150.7,64.1 L150.5,63.5 L150.4,62.9 L150.3,62.4 L150.2,61.8 L150.2,61.2 L150.2,60.7 L150.2,60.1 L150.3,59.6 L150.4,59.0 L150.4,58.4 L150.5,57.9 L150.7,57.3 L150.8,56.8 L150.9,56.2 L151.1,55.6 L151.2,55.1 L151.4,54.5 L151.6,53.9 L151.8,53.4 L152.0,52.8 L152.2,52.2 L152.4,51.7 L152.6,51.1 L152.8,50.6 L153.1,50.0 L153.4,49.4 L153.6,48.9 L153.9,48.3 L154.3,47.8 L154.6,47.2 L155.0,46.6 L155.5,46.1 L156.5,45.5 Z" fill="#2a26d8" stroke="#2a26d8" stroke-width="6.0" stroke-linejoin="round"/><path d="M155.0,0.0 L158.0,0.0 L161.7,50.0 L151.3,50.0 Z" fill="#2a26d8" stroke="#2a26d8" stroke-width="6.0" stroke-linejoin="round"/></g><g filter="url(#bl1)"><path d="M156.5,45.5 L157.4,46.1 L157.9,46.6 L158.3,47.2 L158.6,47.8 L158.9,48.3 L159.2,48.9 L159.5,49.4 L159.7,50.0 L160.0,50.6 L160.2,51.1 L160.4,51.7 L160.6,52.2 L160.8,52.8 L161.0,53.4 L161.2,53.9 L161.4,54.5 L161.5,55.1 L161.7,55.6 L161.8,56.2 L161.9,56.8 L162.1,57.3 L162.2,57.9 L162.3,58.4 L162.4,59.0 L162.4,59.6 L162.5,60.1 L162.5,60.7 L162.5,61.2 L162.5,61.8 L162.4,62.4 L162.3,62.9 L162.2,63.5 L162.1,64.1 L161.8,64.6 L161.6,65.2 L161.2,65.8 L160.7,66.3 L160.1,66.9 L159.1,67.4 L156.5,68.0 L156.5,68.0 L153.8,67.4 L152.8,66.9 L152.1,66.3 L151.6,65.8 L151.2,65.2 L150.9,64.6 L150.7,64.1 L150.5,63.5 L150.4,62.9 L150.3,62.4 L150.2,61.8 L150.2,61.2 L150.2,60.7 L150.2,60.1 L150.3,59.6 L150.4,59.0 L150.4,58.4 L150.5,57.9 L150.7,57.3 L150.8,56.8 L150.9,56.2 L151.1,55.6 L151.2,55.1 L151.4,54.5 L151.6,53.9 L151.8,53.4 L152.0,52.8 L152.2,52.2 L152.4,51.7 L152.6,51.1 L152.8,50.6 L153.1,50.0 L153.4,49.4 L153.6,48.9 L153.9,48.3 L154.3,47.8 L154.6,47.2 L155.0,46.6 L155.5,46.1 L156.5,45.5 Z" fill="#9040c4" stroke="#9040c4" stroke-width="3.8" stroke-linejoin="round"/><path d="M155.7,32.0 L157.3,32.0 L160.8,50.0 L152.2,50.0 Z" fill="#9040c4" stroke="#9040c4" stroke-width="3.8" stroke-linejoin="round"/></g><g filter="url(#bl2)"><path d="M156.5,45.5 L157.4,46.1 L157.9,46.6 L158.3,47.2 L158.6,47.8 L158.9,48.3 L159.2,48.9 L159.5,49.4 L159.7,50.0 L160.0,50.6 L160.2,51.1 L160.4,51.7 L160.6,52.2 L160.8,52.8 L161.0,53.4 L161.2,53.9 L161.4,54.5 L161.5,55.1 L161.7,55.6 L161.8,56.2 L161.9,56.8 L162.1,57.3 L162.2,57.9 L162.3,58.4 L162.4,59.0 L162.4,59.6 L162.5,60.1 L162.5,60.7 L162.5,61.2 L162.5,61.8 L162.4,62.4 L162.3,62.9 L162.2,63.5 L162.1,64.1 L161.8,64.6 L161.6,65.2 L161.2,65.8 L160.7,66.3 L160.1,66.9 L159.1,67.4 L156.5,68.0 L156.5,68.0 L153.8,67.4 L152.8,66.9 L152.1,66.3 L151.6,65.8 L151.2,65.2 L150.9,64.6 L150.7,64.1 L150.5,63.5 L150.4,62.9 L150.3,62.4 L150.2,61.8 L150.2,61.2 L150.2,60.7 L150.2,60.1 L150.3,59.6 L150.4,59.0 L150.4,58.4 L150.5,57.9 L150.7,57.3 L150.8,56.8 L150.9,56.2 L151.1,55.6 L151.2,55.1 L151.4,54.5 L151.6,53.9 L151.8,53.4 L152.0,52.8 L152.2,52.2 L152.4,51.7 L152.6,51.1 L152.8,50.6 L153.1,50.0 L153.4,49.4 L153.6,48.9 L153.9,48.3 L154.3,47.8 L154.6,47.2 L155.0,46.6 L155.5,46.1 L156.5,45.5 Z" fill="#cc4078" stroke="#cc4078" stroke-width="2.2" stroke-linejoin="round"/><path d="M156.3,37.0 L156.7,37.0 L159.2,50.0 L153.8,50.0 Z" fill="#cc4078" stroke="#cc4078" stroke-width="2.2" stroke-linejoin="round"/></g><g filter="url(#bl3)"><path d="M156.5,45.5 L157.4,46.1 L157.9,46.6 L158.3,47.2 L158.6,47.8 L158.9,48.3 L159.2,48.9 L159.5,49.4 L159.7,50.0 L160.0,50.6 L160.2,51.1 L160.4,51.7 L160.6,52.2 L160.8,52.8 L161.0,53.4 L161.2,53.9 L161.4,54.5 L161.5,55.1 L161.7,55.6 L161.8,56.2 L161.9,56.8 L162.1,57.3 L162.2,57.9 L162.3,58.4 L162.4,59.0 L162.4,59.6 L162.5,60.1 L162.5,60.7 L162.5,61.2 L162.5,61.8 L162.4,62.4 L162.3,62.9 L162.2,63.5 L162.1,64.1 L161.8,64.6 L161.6,65.2 L161.2,65.8 L160.7,66.3 L160.1,66.9 L159.1,67.4 L156.5,68.0 L156.5,68.0 L153.8,67.4 L152.8,66.9 L152.1,66.3 L151.6,65.8 L151.2,65.2 L150.9,64.6 L150.7,64.1 L150.5,63.5 L150.4,62.9 L150.3,62.4 L150.2,61.8 L150.2,61.2 L150.2,60.7 L150.2,60.1 L150.3,59.6 L150.4,59.0 L150.4,58.4 L150.5,57.9 L150.7,57.3 L150.8,56.8 L150.9,56.2 L151.1,55.6 L151.2,55.1 L151.4,54.5 L151.6,53.9 L151.8,53.4 L152.0,52.8 L152.2,52.2 L152.4,51.7 L152.6,51.1 L152.8,50.6 L153.1,50.0 L153.4,49.4 L153.6,48.9 L153.9,48.3 L154.3,47.8 L154.6,47.2 L155.0,46.6 L155.5,46.1 L156.5,45.5 Z" fill="#c0e640" stroke="#c0e640" stroke-width="1.1" stroke-linejoin="round"/><path d="M156.4,44.0 L156.6,44.0 L158.1,50.0 L154.9,50.0 Z" fill="#c0e640" stroke="#c0e640" stroke-width="1.1" stroke-linejoin="round"/></g><path d="M156.5,45.5 L157.4,46.1 L157.9,46.6 L158.3,47.2 L158.6,47.8 L158.9,48.3 L159.2,48.9 L159.5,49.4 L159.7,50.0 L160.0,50.6 L160.2,51.1 L160.4,51.7 L160.6,52.2 L160.8,52.8 L161.0,53.4 L161.2,53.9 L161.4,54.5 L161.5,55.1 L161.7,55.6 L161.8,56.2 L161.9,56.8 L162.1,57.3 L162.2,57.9 L162.3,58.4 L162.4,59.0 L162.4,59.6 L162.5,60.1 L162.5,60.7 L162.5,61.2 L162.5,61.8 L162.4,62.4 L162.3,62.9 L162.2,63.5 L162.1,64.1 L161.8,64.6 L161.6,65.2 L161.2,65.8 L160.7,66.3 L160.1,66.9 L159.1,67.4 L156.5,68.0 L156.5,68.0 L153.8,67.4 L152.8,66.9 L152.1,66.3 L151.6,65.8 L151.2,65.2 L150.9,64.6 L150.7,64.1 L150.5,63.5 L150.4,62.9 L150.3,62.4 L150.2,61.8 L150.2,61.2 L150.2,60.7 L150.2,60.1 L150.3,59.6 L150.4,59.0 L150.4,58.4 L150.5,57.9 L150.7,57.3 L150.8,56.8 L150.9,56.2 L151.1,55.6 L151.2,55.1 L151.4,54.5 L151.6,53.9 L151.8,53.4 L152.0,52.8 L152.2,52.2 L152.4,51.7 L152.6,51.1 L152.8,50.6 L153.1,50.0 L153.4,49.4 L153.6,48.9 L153.9,48.3 L154.3,47.8 L154.6,47.2 L155.0,46.6 L155.5,46.1 L156.5,45.5 Z" fill="#14dcf4" stroke="#14dcf4" stroke-width="0.3" filter="url(#bl4)"/><g filter="url(#bl0)"><path d="M156.5,75.0 L157.4,75.8 L157.9,76.6 L158.3,77.4 L158.6,78.2 L158.9,79.0 L159.2,79.8 L159.5,80.6 L159.7,81.4 L160.0,82.2 L160.2,82.9 L160.4,83.7 L160.6,84.5 L160.8,85.3 L161.0,86.1 L161.2,86.9 L161.4,87.7 L161.5,88.5 L161.7,89.3 L161.8,90.1 L161.9,90.9 L162.1,91.7 L162.2,92.5 L162.3,93.3 L162.4,94.1 L162.4,94.9 L162.5,95.7 L162.5,96.5 L162.5,97.3 L162.5,98.1 L162.4,98.9 L162.3,99.6 L162.2,100.4 L162.1,101.2 L161.8,102.0 L161.6,102.8 L161.2,103.6 L160.7,104.4 L160.1,105.2 L159.1,106.0 L156.5,106.8 L156.5,106.8 L153.8,106.0 L152.8,105.2 L152.1,104.4 L151.6,103.6 L151.3,102.8 L151.0,102.0 L150.7,101.2 L150.5,100.4 L150.3,99.6 L150.0,98.9 L149.7,98.1 L149.2,97.3 L148.7,96.5 L148.1,95.7 L147.5,94.9 L147.0,94.1 L146.7,93.3 L146.6,92.5 L146.9,91.7 L147.4,90.9 L148.1,90.1 L148.9,89.3 L149.7,88.5 L150.4,87.7 L151.0,86.9 L151.5,86.1 L151.8,85.3 L152.1,84.5 L152.4,83.7 L152.7,82.9 L152.9,82.2 L153.1,81.4 L153.4,80.6 L153.7,79.8 L154.0,79.0 L154.3,78.2 L154.6,77.4 L155.0,76.6 L155.5,75.8 L156.5,75.0 Z" fill="#2a26d8" stroke="#2a26d8" stroke-width="6.0" stroke-linejoin="round"/><path d="M155.0,65.0 L158.0,65.0 L162.8,84.0 L150.2,84.0 Z" fill="#2a26d8" stroke="#2a26d8" stroke-width="6.0" stroke-linejoin="round"/></g><g filter="url(#bl1)"><path d="M156.5,75.0 L157.4,75.8 L157.9,76.6 L158.3,77.4 L158.6,78.2 L158.9,79.0 L159.2,79.8 L159.5,80.6 L159.7,81.4 L160.0,82.2 L160.2,82.9 L160.4,83.7 L160.6,84.5 L160.8,85.3 L161.0,86.1 L161.2,86.9 L161.4,87.7 L161.5,88.5 L161.7,89.3 L161.8,90.1 L161.9,90.9 L162.1,91.7 L162.2,92.5 L162.3,93.3 L162.4,94.1 L162.4,94.9 L162.5,95.7 L162.5,96.5 L162.5,97.3 L162.5,98.1 L162.4,98.9 L162.3,99.6 L162.2,100.4 L162.1,101.2 L161.8,102.0 L161.6,102.8 L161.2,103.6 L160.7,104.4 L160.1,105.2 L159.1,106.0 L156.5,106.8 L156.5,106.8 L153.8,106.0 L152.8,105.2 L152.1,104.4 L151.6,103.6 L151.3,102.8 L151.0,102.0 L150.7,101.2 L150.5,100.4 L150.3,99.6 L150.0,98.9 L149.7,98.1 L149.2,97.3 L148.7,96.5 L148.1,95.7 L147.5,94.9 L147.0,94.1 L146.7,93.3 L146.6,92.5 L146.9,91.7 L147.4,90.9 L148.1,90.1 L148.9,89.3 L149.7,88.5 L150.4,87.7 L151.0,86.9 L151.5,86.1 L151.8,85.3 L152.1,84.5 L152.4,83.7 L152.7,82.9 L152.9,82.2 L153.1,81.4 L153.4,80.6 L153.7,79.8 L154.0,79.0 L154.3,78.2 L154.6,77.4 L155.0,76.6 L155.5,75.8 L156.5,75.0 Z" fill="#9040c4" stroke="#9040c4" stroke-width="3.8" stroke-linejoin="round"/><path d="M155.3,66.0 L157.7,66.0 L161.7,84.0 L151.3,84.0 Z" fill="#9040c4" stroke="#9040c4" stroke-width="3.8" stroke-linejoin="round"/></g><g filter="url(#bl2)"><path d="M156.5,75.0 L157.4,75.8 L157.9,76.6 L158.3,77.4 L158.6,78.2 L158.9,79.0 L159.2,79.8 L159.5,80.6 L159.7,81.4 L160.0,82.2 L160.2,82.9 L160.4,83.7 L160.6,84.5 L160.8,85.3 L161.0,86.1 L161.2,86.9 L161.4,87.7 L161.5,88.5 L161.7,89.3 L161.8,90.1 L161.9,90.9 L162.1,91.7 L162.2,92.5 L162.3,93.3 L162.4,94.1 L162.4,94.9 L162.5,95.7 L162.5,96.5 L162.5,97.3 L162.5,98.1 L162.4,98.9 L162.3,99.6 L162.2,100.4 L162.1,101.2 L161.8,102.0 L161.6,102.8 L161.2,103.6 L160.7,104.4 L160.1,105.2 L159.1,106.0 L156.5,106.8 L156.5,106.8 L153.8,106.0 L152.8,105.2 L152.1,104.4 L151.6,103.6 L151.3,102.8 L151.0,102.0 L150.7,101.2 L150.5,100.4 L150.3,99.6 L150.0,98.9 L149.7,98.1 L149.2,97.3 L148.7,96.5 L148.1,95.7 L147.5,94.9 L147.0,94.1 L146.7,93.3 L146.6,92.5 L146.9,91.7 L147.4,90.9 L148.1,90.1 L148.9,89.3 L149.7,88.5 L150.4,87.7 L151.0,86.9 L151.5,86.1 L151.8,85.3 L152.1,84.5 L152.4,83.7 L152.7,82.9 L152.9,82.2 L153.1,81.4 L153.4,80.6 L153.7,79.8 L154.0,79.0 L154.3,78.2 L154.6,77.4 L155.0,76.6 L155.5,75.8 L156.5,75.0 Z" fill="#cc4078" stroke="#cc4078" stroke-width="2.2" stroke-linejoin="round"/><path d="M155.9,68.0 L157.1,68.0 L159.8,84.0 L153.2,84.0 Z" fill="#cc4078" stroke="#cc4078" stroke-width="2.2" stroke-linejoin="round"/></g><g filter="url(#bl3)"><path d="M156.5,75.0 L157.4,75.8 L157.9,76.6 L158.3,77.4 L158.6,78.2 L158.9,79.0 L159.2,79.8 L159.5,80.6 L159.7,81.4 L160.0,82.2 L160.2,82.9 L160.4,83.7 L160.6,84.5 L160.8,85.3 L161.0,86.1 L161.2,86.9 L161.4,87.7 L161.5,88.5 L161.7,89.3 L161.8,90.1 L161.9,90.9 L162.1,91.7 L162.2,92.5 L162.3,93.3 L162.4,94.1 L162.4,94.9 L162.5,95.7 L162.5,96.5 L162.5,97.3 L162.5,98.1 L162.4,98.9 L162.3,99.6 L162.2,100.4 L162.1,101.2 L161.8,102.0 L161.6,102.8 L161.2,103.6 L160.7,104.4 L160.1,105.2 L159.1,106.0 L156.5,106.8 L156.5,106.8 L153.8,106.0 L152.8,105.2 L152.1,104.4 L151.6,103.6 L151.3,102.8 L151.0,102.0 L150.7,101.2 L150.5,100.4 L150.3,99.6 L150.0,98.9 L149.7,98.1 L149.2,97.3 L148.7,96.5 L148.1,95.7 L147.5,94.9 L147.0,94.1 L146.7,93.3 L146.6,92.5 L146.9,91.7 L147.4,90.9 L148.1,90.1 L148.9,89.3 L149.7,88.5 L150.4,87.7 L151.0,86.9 L151.5,86.1 L151.8,85.3 L152.1,84.5 L152.4,83.7 L152.7,82.9 L152.9,82.2 L153.1,81.4 L153.4,80.6 L153.7,79.8 L154.0,79.0 L154.3,78.2 L154.6,77.4 L155.0,76.6 L155.5,75.8 L156.5,75.0 Z" fill="#c0e640" stroke="#c0e640" stroke-width="1.1" stroke-linejoin="round"/><path d="M156.4,73.0 L156.6,73.0 L158.4,84.0 L154.6,84.0 Z" fill="#c0e640" stroke="#c0e640" stroke-width="1.1" stroke-linejoin="round"/></g><path d="M156.5,75.0 L157.4,75.8 L157.9,76.6 L158.3,77.4 L158.6,78.2 L158.9,79.0 L159.2,79.8 L159.5,80.6 L159.7,81.4 L160.0,82.2 L160.2,82.9 L160.4,83.7 L160.6,84.5 L160.8,85.3 L161.0,86.1 L161.2,86.9 L161.4,87.7 L161.5,88.5 L161.7,89.3 L161.8,90.1 L161.9,90.9 L162.1,91.7 L162.2,92.5 L162.3,93.3 L162.4,94.1 L162.4,94.9 L162.5,95.7 L162.5,96.5 L162.5,97.3 L162.5,98.1 L162.4,98.9 L162.3,99.6 L162.2,100.4 L162.1,101.2 L161.8,102.0 L161.6,102.8 L161.2,103.6 L160.7,104.4 L160.1,105.2 L159.1,106.0 L156.5,106.8 L156.5,106.8 L153.8,106.0 L152.8,105.2 L152.1,104.4 L151.6,103.6 L151.3,102.8 L151.0,102.0 L150.7,101.2 L150.5,100.4 L150.3,99.6 L150.0,98.9 L149.7,98.1 L149.2,97.3 L148.7,96.5 L148.1,95.7 L147.5,94.9 L147.0,94.1 L146.7,93.3 L146.6,92.5 L146.9,91.7 L147.4,90.9 L148.1,90.1 L148.9,89.3 L149.7,88.5 L150.4,87.7 L151.0,86.9 L151.5,86.1 L151.8,85.3 L152.1,84.5 L152.4,83.7 L152.7,82.9 L152.9,82.2 L153.1,81.4 L153.4,80.6 L153.7,79.8 L154.0,79.0 L154.3,78.2 L154.6,77.4 L155.0,76.6 L155.5,75.8 L156.5,75.0 Z" fill="#14dcf4" stroke="#14dcf4" stroke-width="0.3" filter="url(#bl4)"/><g filter="url(#bl0)"><path d="M229.7,76.3 L230.6,77.0 L231.1,77.8 L231.4,78.5 L231.8,79.3 L232.1,80.0 L232.3,80.8 L232.6,81.5 L232.8,82.3 L233.1,83.0 L233.3,83.8 L233.5,84.5 L233.7,85.3 L233.9,86.0 L234.1,86.8 L234.2,87.5 L234.4,88.3 L234.6,89.0 L234.7,89.8 L234.8,90.5 L235.0,91.2 L235.1,92.0 L235.2,92.7 L235.3,93.5 L235.4,94.2 L235.4,95.0 L235.5,95.7 L235.5,96.5 L235.5,97.2 L235.5,98.0 L235.4,98.7 L235.4,99.5 L235.2,100.2 L235.1,101.0 L234.9,101.7 L234.6,102.5 L234.2,103.2 L233.8,104.0 L233.1,104.7 L232.2,105.5 L229.7,106.2 L229.7,106.2 L227.2,105.5 L226.3,104.7 L225.6,104.0 L225.2,103.2 L224.8,102.5 L224.5,101.7 L224.3,101.0 L224.2,100.2 L224.0,99.5 L224.0,98.7 L223.9,98.0 L223.9,97.2 L223.9,96.5 L223.9,95.7 L224.0,95.0 L224.0,94.2 L224.1,93.5 L224.2,92.7 L224.3,92.0 L224.4,91.2 L224.6,90.5 L224.7,89.8 L224.8,89.0 L225.0,88.3 L225.2,87.5 L225.3,86.8 L225.5,86.0 L225.7,85.3 L225.9,84.5 L226.1,83.8 L226.3,83.0 L226.6,82.3 L226.8,81.5 L227.1,80.8 L227.3,80.0 L227.6,79.3 L228.0,78.5 L228.3,77.8 L228.8,77.0 L229.7,76.3 Z" fill="#2a26d8" stroke="#2a26d8" stroke-width="6.0" stroke-linejoin="round"/><path d="M228.7,47.0 L230.7,47.0 L234.9,84.0 L224.5,84.0 Z" fill="#2a26d8" stroke="#2a26d8" stroke-width="6.0" stroke-linejoin="round"/></g><g filter="url(#bl1)"><path d="M229.7,76.3 L230.6,77.0 L231.1,77.8 L231.4,78.5 L231.8,79.3 L232.1,80.0 L232.3,80.8 L232.6,81.5 L232.8,82.3 L233.1,83.0 L233.3,83.8 L233.5,84.5 L233.7,85.3 L233.9,86.0 L234.1,86.8 L234.2,87.5 L234.4,88.3 L234.6,89.0 L234.7,89.8 L234.8,90.5 L235.0,91.2 L235.1,92.0 L235.2,92.7 L235.3,93.5 L235.4,94.2 L235.4,95.0 L235.5,95.7 L235.5,96.5 L235.5,97.2 L235.5,98.0 L235.4,98.7 L235.4,99.5 L235.2,100.2 L235.1,101.0 L234.9,101.7 L234.6,102.5 L234.2,103.2 L233.8,104.0 L233.1,104.7 L232.2,105.5 L229.7,106.2 L229.7,106.2 L227.2,105.5 L226.3,104.7 L225.6,104.0 L225.2,103.2 L224.8,102.5 L224.5,101.7 L224.3,101.0 L224.2,100.2 L224.0,99.5 L224.0,98.7 L223.9,98.0 L223.9,97.2 L223.9,96.5 L223.9,95.7 L224.0,95.0 L224.0,94.2 L224.1,93.5 L224.2,92.7 L224.3,92.0 L224.4,91.2 L224.6,90.5 L224.7,89.8 L224.8,89.0 L225.0,88.3 L225.2,87.5 L225.3,86.8 L225.5,86.0 L225.7,85.3 L225.9,84.5 L226.1,83.8 L226.3,83.0 L226.6,82.3 L226.8,81.5 L227.1,80.8 L227.3,80.0 L227.6,79.3 L228.0,78.5 L228.3,77.8 L228.8,77.0 L229.7,76.3 Z" fill="#9040c4" stroke="#9040c4" stroke-width="3.8" stroke-linejoin="round"/><path d="M229.1,54.0 L230.3,54.0 L234.0,84.0 L225.4,84.0 Z" fill="#9040c4" stroke="#9040c4" stroke-width="3.8" stroke-linejoin="round"/></g><g filter="url(#bl2)"><path d="M229.7,76.3 L230.6,77.0 L231.1,77.8 L231.4,78.5 L231.8,79.3 L232.1,80.0 L232.3,80.8 L232.6,81.5 L232.8,82.3 L233.1,83.0 L233.3,83.8 L233.5,84.5 L233.7,85.3 L233.9,86.0 L234.1,86.8 L234.2,87.5 L234.4,88.3 L234.6,89.0 L234.7,89.8 L234.8,90.5 L235.0,91.2 L235.1,92.0 L235.2,92.7 L235.3,93.5 L235.4,94.2 L235.4,95.0 L235.5,95.7 L235.5,96.5 L235.5,97.2 L235.5,98.0 L235.4,98.7 L235.4,99.5 L235.2,100.2 L235.1,101.0 L234.9,101.7 L234.6,102.5 L234.2,103.2 L233.8,104.0 L233.1,104.7 L232.2,105.5 L229.7,106.2 L229.7,106.2 L227.2,105.5 L226.3,104.7 L225.6,104.0 L225.2,103.2 L224.8,102.5 L224.5,101.7 L224.3,101.0 L224.2,100.2 L224.0,99.5 L224.0,98.7 L223.9,98.0 L223.9,97.2 L223.9,96.5 L223.9,95.7 L224.0,95.0 L224.0,94.2 L224.1,93.5 L224.2,92.7 L224.3,92.0 L224.4,91.2 L224.6,90.5 L224.7,89.8 L224.8,89.0 L225.0,88.3 L225.2,87.5 L225.3,86.8 L225.5,86.0 L225.7,85.3 L225.9,84.5 L226.1,83.8 L226.3,83.0 L226.6,82.3 L226.8,81.5 L227.1,80.8 L227.3,80.0 L227.6,79.3 L228.0,78.5 L228.3,77.8 L228.8,77.0 L229.7,76.3 Z" fill="#cc4078" stroke="#cc4078" stroke-width="2.2" stroke-linejoin="round"/><path d="M229.5,64.0 L229.9,64.0 L232.4,84.0 L227.0,84.0 Z" fill="#cc4078" stroke="#cc4078" stroke-width="2.2" stroke-linejoin="round"/></g><g filter="url(#bl3)"><path d="M229.7,76.3 L230.6,77.0 L231.1,77.8 L231.4,78.5 L231.8,79.3 L232.1,80.0 L232.3,80.8 L232.6,81.5 L232.8,82.3 L233.1,83.0 L233.3,83.8 L233.5,84.5 L233.7,85.3 L233.9,86.0 L234.1,86.8 L234.2,87.5 L234.4,88.3 L234.6,89.0 L234.7,89.8 L234.8,90.5 L235.0,91.2 L235.1,92.0 L235.2,92.7 L235.3,93.5 L235.4,94.2 L235.4,95.0 L235.5,95.7 L235.5,96.5 L235.5,97.2 L235.5,98.0 L235.4,98.7 L235.4,99.5 L235.2,100.2 L235.1,101.0 L234.9,101.7 L234.6,102.5 L234.2,103.2 L233.8,104.0 L233.1,104.7 L232.2,105.5 L229.7,106.2 L229.7,106.2 L227.2,105.5 L226.3,104.7 L225.6,104.0 L225.2,103.2 L224.8,102.5 L224.5,101.7 L224.3,101.0 L224.2,100.2 L224.0,99.5 L224.0,98.7 L223.9,98.0 L223.9,97.2 L223.9,96.5 L223.9,95.7 L224.0,95.0 L224.0,94.2 L224.1,93.5 L224.2,92.7 L224.3,92.0 L224.4,91.2 L224.6,90.5 L224.7,89.8 L224.8,89.0 L225.0,88.3 L225.2,87.5 L225.3,86.8 L225.5,86.0 L225.7,85.3 L225.9,84.5 L226.1,83.8 L226.3,83.0 L226.6,82.3 L226.8,81.5 L227.1,80.8 L227.3,80.0 L227.6,79.3 L228.0,78.5 L228.3,77.8 L228.8,77.0 L229.7,76.3 Z" fill="#c0e640" stroke="#c0e640" stroke-width="1.1" stroke-linejoin="round"/><path d="M229.6,75.0 L229.8,75.0 L231.3,84.0 L228.1,84.0 Z" fill="#c0e640" stroke="#c0e640" stroke-width="1.1" stroke-linejoin="round"/></g><path d="M229.7,76.3 L230.6,77.0 L231.1,77.8 L231.4,78.5 L231.8,79.3 L232.1,80.0 L232.3,80.8 L232.6,81.5 L232.8,82.3 L233.1,83.0 L233.3,83.8 L233.5,84.5 L233.7,85.3 L233.9,86.0 L234.1,86.8 L234.2,87.5 L234.4,88.3 L234.6,89.0 L234.7,89.8 L234.8,90.5 L235.0,91.2 L235.1,92.0 L235.2,92.7 L235.3,93.5 L235.4,94.2 L235.4,95.0 L235.5,95.7 L235.5,96.5 L235.5,97.2 L235.5,98.0 L235.4,98.7 L235.4,99.5 L235.2,100.2 L235.1,101.0 L234.9,101.7 L234.6,102.5 L234.2,103.2 L233.8,104.0 L233.1,104.7 L232.2,105.5 L229.7,106.2 L229.7,106.2 L227.2,105.5 L226.3,104.7 L225.6,104.0 L225.2,103.2 L224.8,102.5 L224.5,101.7 L224.3,101.0 L224.2,100.2 L224.0,99.5 L224.0,98.7 L223.9,98.0 L223.9,97.2 L223.9,96.5 L223.9,95.7 L224.0,95.0 L224.0,94.2 L224.1,93.5 L224.2,92.7 L224.3,92.0 L224.4,91.2 L224.6,90.5 L224.7,89.8 L224.8,89.0 L225.0,88.3 L225.2,87.5 L225.3,86.8 L225.5,86.0 L225.7,85.3 L225.9,84.5 L226.1,83.8 L226.3,83.0 L226.6,82.3 L226.8,81.5 L227.1,80.8 L227.3,80.0 L227.6,79.3 L228.0,78.5 L228.3,77.8 L228.8,77.0 L229.7,76.3 Z" fill="#14dcf4" stroke="#14dcf4" stroke-width="0.3" filter="url(#bl4)"/><g fill="none" stroke="#a84450" stroke-width="0.85"><path d="M67.2,47.0 L85.9,47.0 L85.9,107.2 L67.8,107.2 L67.8,103.5 L61.6,103.5 L61.6,100.0 L55.5,100.0 L55.5,86.2 L61.6,86.2 L61.6,78.2 L55.5,78.2 L55.5,72.6 L61.6,72.6 L61.6,71.4 L67.8,71.4 L67.8,64.5 L55.5,64.5 L55.5,61.0 L61.3,61.0 L61.3,58.0 L67.2,58.0 L67.2,51.5 L61.3,51.5 L61.3,49.0 L67.2,49.0 Z"/><path d="M147.5,5.9 L165.4,5.9 L165.4,10.0 L147.5,10.0 Z"/><path d="M141.3,11.0 L165.4,11.0 L165.4,15.4 L141.3,15.4 Z"/><path d="M147.5,17.9 L165.4,17.9 L165.4,22.8 L147.5,22.8 Z"/><path d="M165.4,21.6 L171.5,21.6 L171.5,24.0 L165.4,24.0 Z"/><path d="M141.3,24.0 L165.4,24.0 L165.4,35.8 L171.5,35.8 L171.5,45.0 L165.4,45.0 L165.4,46.6 L171.5,46.6 L171.5,50.0 L165.4,50.0 L165.4,53.0 L171.5,53.0 L171.5,54.8 L165.4,54.8 L165.4,64.0 L171.5,64.0 L171.5,69.5 L165.4,69.5 L165.4,72.4 L171.5,72.4 L171.5,75.0 L165.4,75.0 L165.4,76.0 L171.5,76.0 L171.5,82.0 L165.4,82.0 L165.4,85.0 L177.0,85.0 L177.0,88.0 L165.4,88.0 L165.4,93.0 L171.5,93.0 L171.5,103.5 L165.4,103.5 L165.4,109.6 L146.9,109.6 L146.9,106.5 L135.8,106.5 L135.8,101.2 L129.6,101.2 L129.6,98.5 L135.8,98.5 L135.8,95.8 L141.3,95.8 L141.3,90.5 L135.8,90.5 L135.8,88.0 L141.3,88.0 L141.3,72.4 L135.1,72.4 L135.1,69.5 L141.3,69.5 L141.3,64.0 L129.0,64.0 L129.0,57.3 L116.6,57.3 L116.6,55.5 L141.3,55.5 L141.3,40.0 L146.9,40.0 L146.9,35.1 L141.3,35.1 Z"/><path d="M221.2,35.5 L245.7,35.5 L245.7,40.1 L227.0,40.1 L227.0,39.0 L221.2,39.0 Z"/><path d="M221.2,44.4 L245.7,44.4 L245.7,46.0 L238.9,46.0 L238.9,51.8 L245.7,51.8 L245.7,57.8 L238.9,57.8 L238.9,74.9 L245.7,74.9 L245.7,77.3 L238.9,77.3 L238.9,89.3 L245.7,89.3 L245.7,91.8 L238.9,91.8 L238.9,102.5 L245.7,102.5 L245.7,104.5 L238.9,104.5 L238.9,108.4 L221.2,108.4 L221.2,104.5 L214.6,104.5 L214.6,93.4 L221.2,93.4 L221.2,60.6 L214.8,60.6 L214.8,58.0 L208.0,58.0 L208.0,56.0 L214.8,56.0 L214.8,54.3 L221.2,54.3 Z"/><path d="M294.4,12.3 L300.0,12.3 L302.0,10.5 L302.0,18.5 L294.4,18.5 Z"/><path d="M270.3,99.5 L276.0,99.5 L277.0,98.0 L287.5,98.0 L288.5,99.5 L300.0,99.5 L302.0,102.0 L302.0,107.5 L288.0,107.5 L287.0,106.0 L282.5,106.0 L282.5,102.5 L276.0,102.5 L275.0,101.0 L270.3,101.0 Z"/><path d="M31.3,103.3 L37.5,103.3 L37.5,100.4 L61.6,100.4 L61.6,103.3 L67.2,103.3 L67.2,109.8 L31.3,109.8 Z"/><path d="M31.3,109.8 L79.4,109.8 L79.4,117.7 L31.3,117.7 Z"/><path d="M49.3,115.2 L85.6,115.2 L85.6,120.6 L49.3,120.6 Z"/><path d="M55.8,121.0 L98.5,121.0 L98.5,124.3 L55.8,124.3 Z"/><path d="M67.5,124.0 L104.5,124.0 L104.5,127.5 L67.5,127.5 Z"/><path d="M75.5,127.0 L110.5,127.0 L110.5,130.2 L75.5,130.2 Z"/><path d="M86.3,130.2 L116.6,130.2 L116.6,132.4 L86.3,132.4 Z"/><path d="M92.3,132.4 L122.7,132.4 L122.7,135.0 L92.3,135.0 Z"/><path d="M92.3,135.0 L128.8,135.0 L128.8,140.6 L92.3,140.6 Z"/><path d="M104.5,141.0 L147.3,141.0 L147.3,144.5 L104.5,144.5 Z"/><path d="M110.5,144.5 L147.3,144.5 L147.3,148.6 L110.5,148.6 Z"/><path d="M147.3,142.3 L153.0,142.3 L153.0,141.5 L159.0,141.5 L159.0,142.3 L165.0,142.3 L165.0,149.6 L147.3,149.6 Z"/><path d="M123.2,150.3 L159.3,150.3 L159.3,159.3 L123.2,159.3 L123.2,155.0 L129.0,155.0 L129.0,153.0 L123.2,153.0 Z"/><path d="M153.0,153.3 L189.4,153.3 L189.4,159.4 L153.0,159.4 Z"/><path d="M153.0,160.0 L200.0,160.0 L200.0,163.0 L232.0,163.0 L232.0,168.7 L153.0,168.7 Z"/><path d="M123.2,163.1 L153.6,163.1 L153.6,173.0 L123.2,173.0 Z"/><path d="M100.0,172.4 L110.5,172.4 L110.5,182.3 L100.0,182.3 Z"/><path d="M183.8,169.3 L200.0,169.3 L200.0,175.5 L183.8,175.5 Z"/><path d="M202.5,162.6 L220.4,162.6 L220.4,184.5 L202.5,184.5 Z"/><path d="M220.4,168.7 L226.8,168.7 L226.8,172.4 L232.7,172.4 L232.7,184.5 L220.4,184.5 Z"/><path d="M232.7,172.4 L239.5,172.4 L239.5,171.5 L251.2,171.5 L251.2,176.2 L239.5,176.2 L239.5,176.7 L232.7,176.7 Z"/><path d="M232.7,176.7 L263.6,176.7 L263.6,185.3 L232.7,185.3 Z"/><path d="M245.0,182.0 L275.8,182.0 L275.8,188.6 L245.0,188.6 Z"/><path d="M270.0,185.3 L300.5,185.3 L300.5,192.0 L270.0,192.0 Z"/><path d="M37.0,134.2 L61.0,134.2 L61.0,149.6 L37.0,149.6 Z"/><path d="M6.2,137.2 L37.0,137.2 L37.0,145.3 L6.2,145.3 Z"/><path d="M0.0,141.0 L30.8,141.0 L30.8,150.2 L0.0,150.2 Z"/><path d="M0.0,150.2 L49.3,150.2 L49.3,157.6 L0.0,157.6 Z"/><path d="M30.8,148.3 L49.3,148.3 L49.3,154.5 L30.8,154.5 Z"/><path d="M0.0,157.6 L55.5,157.6 L55.5,162.0 L0.0,162.0 Z"/><path d="M12.3,162.0 L61.0,162.0 L61.0,166.8 L12.3,166.8 Z"/><path d="M25.3,162.5 L61.0,162.5 L61.0,170.5 L25.3,170.5 Z"/><path d="M61.0,161.3 L78.9,161.3 L78.9,163.1 L85.1,163.1 L85.1,165.0 L91.2,165.0 L91.2,168.7 L98.6,168.7 L98.6,172.4 L103.0,172.4 L103.0,178.0 L98.6,178.0 L98.6,184.1 L86.3,184.1 L86.3,187.2 L61.0,187.2 L61.0,176.1 L55.5,176.1 L55.5,174.2 L49.3,174.2 L49.3,170.5 L61.0,170.5 Z"/></g><g stroke="#e02838" stroke-width="1"><path d="M67.2,53.0 L79.0,53.0"/><path d="M79.0,52.0 L92.0,52.0"/><path d="M61.3,57.3 L85.9,57.3"/><path d="M141.3,8.4 L147.5,8.4"/><path d="M147.5,11.1 L165.4,11.1"/><path d="M147.5,22.5 L165.4,22.5"/><path d="M135.1,32.0 L141.3,32.0"/><path d="M135.1,72.4 L171.5,72.4"/><path d="M123.4,95.8 L135.8,95.8"/><path d="M146.9,109.6 L165.4,109.6"/><path d="M221.2,50.0 L238.9,50.0"/><path d="M238.9,69.3 L245.7,69.3"/><path d="M37.5,109.8 L79.4,109.8"/><path d="M49.3,115.2 L85.6,115.2"/><path d="M55.8,121.0 L98.5,121.0"/><path d="M67.5,124.0 L104.5,124.0"/><path d="M85.8,127.0 L110.5,127.0"/><path d="M87.0,120.4 L98.7,120.4"/><path d="M87.0,126.6 L104.5,126.6"/><path d="M87.0,132.3 L122.7,132.3"/><path d="M92.3,134.8 L128.8,134.8"/><path d="M104.3,137.8 L128.8,137.8"/><path d="M92.3,140.6 L128.8,140.6"/><path d="M104.5,142.2 L147.3,142.2"/><path d="M111.0,144.8 L147.3,144.8"/><path d="M147.3,149.6 L159.0,149.6"/><path d="M153.5,150.0 L153.5,167.0"/><path d="M153.5,161.0 L200.0,161.0"/><path d="M153.5,163.0 L200.0,163.0"/><path d="M6.2,137.2 L37.0,137.2"/><path d="M0.0,144.0 L6.2,144.0"/><path d="M0.0,149.0 L12.3,149.0"/><path d="M30.8,149.6 L49.3,149.6"/><path d="M0.0,154.5 L30.8,154.5"/><path d="M0.0,157.0 L49.3,157.0"/><path d="M30.8,163.1 L61.0,163.1"/><path d="M37.0,170.5 L55.5,170.5"/><path d="M55.5,185.3 L61.0,185.3"/><path d="M55.5,151.4 L79.0,151.4"/><path d="M220.4,172.4 L220.4,184.5"/><path d="M239.5,176.7 L251.2,176.7"/><path d="M245.6,184.1 L256.8,184.1"/><path d="M270.3,185.3 L275.8,185.3"/><path d="M270.3,185.3 L270.3,192.0"/></g><path d="M156.5,0 V192" stroke="#b04a4a" stroke-width="0.9"/><rect x="122.6" y="72.4" width="55.1" height="37.8" fill="none" stroke="#c8e448" stroke-width="0.9"/></svg>
<svg class="a" style="left:333px;top:63px" width="302" height="192"><rect width="302" height="192" fill="#12d6f6"/><rect x="74.0" y="32" width="5" height="23" fill="#2a70e8" opacity="0.22" filter="url(#b1)"/><rect x="154.0" y="0" width="5" height="55" fill="#2a70e8" opacity="0.3" filter="url(#b1)"/><rect x="227.2" y="0" width="5" height="47" fill="#2a70e8" opacity="0.25" filter="url(#b1)"/><ellipse cx="156.5" cy="47" rx="3" ry="6" fill="#2a40e0" opacity="0.8" filter="url(#b1)"/><ellipse cx="156.5" cy="33" rx="2.5" ry="3" fill="#2a60e8" opacity="0.6" filter="url(#b1)"/><ellipse cx="74.5" cy="174" rx="6" ry="4.5" fill="#2a78e8" opacity="0.7" filter="url(#b2)"/><ellipse cx="75" cy="175" rx="2.5" ry="2" fill="#2040e0" filter="url(#b1)"/><ellipse cx="211.7" cy="175" rx="3.5" ry="3.5" fill="#2a60e8" opacity="0.9" filter="url(#b2)"/><ellipse cx="22" cy="159" rx="5" ry="3" fill="#2a90f0" opacity="0.4" filter="url(#b2)"/><g filter="url(#bl0)"><path d="M76.5,80.5 L77.4,81.2 L77.9,81.8 L78.3,82.5 L78.6,83.2 L78.9,83.8 L79.2,84.5 L79.5,85.2 L79.7,85.9 L80.0,86.5 L80.2,87.2 L80.4,87.9 L80.6,88.5 L80.8,89.2 L81.0,89.9 L81.2,90.6 L81.4,91.2 L81.5,91.9 L81.7,92.6 L81.8,93.2 L81.9,93.9 L82.1,94.6 L82.2,95.2 L82.3,95.9 L82.4,96.6 L82.4,97.2 L82.5,97.9 L82.5,98.6 L82.5,99.3 L82.5,99.9 L82.4,100.6 L82.3,101.3 L82.2,101.9 L82.1,102.6 L81.8,103.3 L81.6,104.0 L81.2,104.6 L80.7,105.3 L80.1,106.0 L79.1,106.6 L76.5,107.3 L76.5,107.3 L73.8,106.6 L72.8,106.0 L72.1,105.3 L71.7,104.6 L71.3,104.0 L71.0,103.3 L70.7,102.6 L70.6,101.9 L70.4,101.3 L70.3,100.6 L70.2,99.9 L70.1,99.3 L70.0,98.6 L69.8,97.9 L69.5,97.2 L69.2,96.6 L68.7,95.9 L68.2,95.2 L67.8,94.6 L67.6,93.9 L67.5,93.2 L67.7,92.6 L68.2,91.9 L68.9,91.2 L69.6,90.6 L70.4,89.9 L71.0,89.2 L71.6,88.5 L72.1,87.9 L72.5,87.2 L72.8,86.5 L73.1,85.9 L73.4,85.2 L73.7,84.5 L74.0,83.8 L74.3,83.2 L74.6,82.5 L75.0,81.8 L75.5,81.2 L76.5,80.5 Z" fill="#2a26d8" stroke="#2a26d8" stroke-width="6.0" stroke-linejoin="round"/><path d="M76.0,54.0 L77.0,54.0 L81.1,87.0 L71.9,87.0 Z" fill="#2a26d8" stroke="#2a26d8" stroke-width="6.0" stroke-linejoin="round"/></g><g filter="url(#bl1)"><path d="M76.5,80.5 L77.4,81.2 L77.9,81.8 L78.3,82.5 L78.6,83.2 L78.9,83.8 L79.2,84.5 L79.5,85.2 L79.7,85.9 L80.0,86.5 L80.2,87.2 L80.4,87.9 L80.6,88.5 L80.8,89.2 L81.0,89.9 L81.2,90.6 L81.4,91.2 L81.5,91.9 L81.7,92.6 L81.8,93.2 L81.9,93.9 L82.1,94.6 L82.2,95.2 L82.3,95.9 L82.4,96.6 L82.4,97.2 L82.5,97.9 L82.5,98.6 L82.5,99.3 L82.5,99.9 L82.4,100.6 L82.3,101.3 L82.2,101.9 L82.1,102.6 L81.8,103.3 L81.6,104.0 L81.2,104.6 L80.7,105.3 L80.1,106.0 L79.1,106.6 L76.5,107.3 L76.5,107.3 L73.8,106.6 L72.8,106.0 L72.1,105.3 L71.7,104.6 L71.3,104.0 L71.0,103.3 L70.7,102.6 L70.6,101.9 L70.4,101.3 L70.3,100.6 L70.2,99.9 L70.1,99.3 L70.0,98.6 L69.8,97.9 L69.5,97.2 L69.2,96.6 L68.7,95.9 L68.2,95.2 L67.8,94.6 L67.6,93.9 L67.5,93.2 L67.7,92.6 L68.2,91.9 L68.9,91.2 L69.6,90.6 L70.4,89.9 L71.0,89.2 L71.6,88.5 L72.1,87.9 L72.5,87.2 L72.8,86.5 L73.1,85.9 L73.4,85.2 L73.7,84.5 L74.0,83.8 L74.3,83.2 L74.6,82.5 L75.0,81.8 L75.5,81.2 L76.5,80.5 Z" fill="#9040c4" stroke="#9040c4" stroke-width="3.8" stroke-linejoin="round"/><path d="M76.2,61.0 L76.8,61.0 L80.3,87.0 L72.7,87.0 Z" fill="#9040c4" stroke="#9040c4" stroke-width="3.8" stroke-linejoin="round"/></g><g filter="url(#bl2)"><path d="M76.5,80.5 L77.4,81.2 L77.9,81.8 L78.3,82.5 L78.6,83.2 L78.9,83.8 L79.2,84.5 L79.5,85.2 L79.7,85.9 L80.0,86.5 L80.2,87.2 L80.4,87.9 L80.6,88.5 L80.8,89.2 L81.0,89.9 L81.2,90.6 L81.4,91.2 L81.5,91.9 L81.7,92.6 L81.8,93.2 L81.9,93.9 L82.1,94.6 L82.2,95.2 L82.3,95.9 L82.4,96.6 L82.4,97.2 L82.5,97.9 L82.5,98.6 L82.5,99.3 L82.5,99.9 L82.4,100.6 L82.3,101.3 L82.2,101.9 L82.1,102.6 L81.8,103.3 L81.6,104.0 L81.2,104.6 L80.7,105.3 L80.1,106.0 L79.1,106.6 L76.5,107.3 L76.5,107.3 L73.8,106.6 L72.8,106.0 L72.1,105.3 L71.7,104.6 L71.3,104.0 L71.0,103.3 L70.7,102.6 L70.6,101.9 L70.4,101.3 L70.3,100.6 L70.2,99.9 L70.1,99.3 L70.0,98.6 L69.8,97.9 L69.5,97.2 L69.2,96.6 L68.7,95.9 L68.2,95.2 L67.8,94.6 L67.6,93.9 L67.5,93.2 L67.7,92.6 L68.2,91.9 L68.9,91.2 L69.6,90.6 L70.4,89.9 L71.0,89.2 L71.6,88.5 L72.1,87.9 L72.5,87.2 L72.8,86.5 L73.1,85.9 L73.4,85.2 L73.7,84.5 L74.0,83.8 L74.3,83.2 L74.6,82.5 L75.0,81.8 L75.5,81.2 L76.5,80.5 Z" fill="#cc4078" stroke="#cc4078" stroke-width="2.2" stroke-linejoin="round"/><path d="M76.4,68.0 L76.6,68.0 L78.9,87.0 L74.1,87.0 Z" fill="#cc4078" stroke="#cc4078" stroke-width="2.2" stroke-linejoin="round"/></g><g filter="url(#bl3)"><path d="M76.5,80.5 L77.4,81.2 L77.9,81.8 L78.3,82.5 L78.6,83.2 L78.9,83.8 L79.2,84.5 L79.5,85.2 L79.7,85.9 L80.0,86.5 L80.2,87.2 L80.4,87.9 L80.6,88.5 L80.8,89.2 L81.0,89.9 L81.2,90.6 L81.4,91.2 L81.5,91.9 L81.7,92.6 L81.8,93.2 L81.9,93.9 L82.1,94.6 L82.2,95.2 L82.3,95.9 L82.4,96.6 L82.4,97.2 L82.5,97.9 L82.5,98.6 L82.5,99.3 L82.5,99.9 L82.4,100.6 L82.3,101.3 L82.2,101.9 L82.1,102.6 L81.8,103.3 L81.6,104.0 L81.2,104.6 L80.7,105.3 L80.1,106.0 L79.1,106.6 L76.5,107.3 L76.5,107.3 L73.8,106.6 L72.8,106.0 L72.1,105.3 L71.7,104.6 L71.3,104.0 L71.0,103.3 L70.7,102.6 L70.6,101.9 L70.4,101.3 L70.3,100.6 L70.2,99.9 L70.1,99.3 L70.0,98.6 L69.8,97.9 L69.5,97.2 L69.2,96.6 L68.7,95.9 L68.2,95.2 L67.8,94.6 L67.6,93.9 L67.5,93.2 L67.7,92.6 L68.2,91.9 L68.9,91.2 L69.6,90.6 L70.4,89.9 L71.0,89.2 L71.6,88.5 L72.1,87.9 L72.5,87.2 L72.8,86.5 L73.1,85.9 L73.4,85.2 L73.7,84.5 L74.0,83.8 L74.3,83.2 L74.6,82.5 L75.0,81.8 L75.5,81.2 L76.5,80.5 Z" fill="#c0e640" stroke="#c0e640" stroke-width="1.1" stroke-linejoin="round"/><path d="M76.4,78.0 L76.6,78.0 L77.9,87.0 L75.1,87.0 Z" fill="#c0e640" stroke="#c0e640" stroke-width="1.1" stroke-linejoin="round"/></g><path d="M76.5,80.5 L77.4,81.2 L77.9,81.8 L78.3,82.5 L78.6,83.2 L78.9,83.8 L79.2,84.5 L79.5,85.2 L79.7,85.9 L80.0,86.5 L80.2,87.2 L80.4,87.9 L80.6,88.5 L80.8,89.2 L81.0,89.9 L81.2,90.6 L81.4,91.2 L81.5,91.9 L81.7,92.6 L81.8,93.2 L81.9,93.9 L82.1,94.6 L82.2,95.2 L82.3,95.9 L82.4,96.6 L82.4,97.2 L82.5,97.9 L82.5,98.6 L82.5,99.3 L82.5,99.9 L82.4,100.6 L82.3,101.3 L82.2,101.9 L82.1,102.6 L81.8,103.3 L81.6,104.0 L81.2,104.6 L80.7,105.3 L80.1,106.0 L79.1,106.6 L76.5,107.3 L76.5,107.3 L73.8,106.6 L72.8,106.0 L72.1,105.3 L71.7,104.6 L71.3,104.0 L71.0,103.3 L70.7,102.6 L70.6,101.9 L70.4,101.3 L70.3,100.6 L70.2,99.9 L70.1,99.3 L70.0,98.6 L69.8,97.9 L69.5,97.2 L69.2,96.6 L68.7,95.9 L68.2,95.2 L67.8,94.6 L67.6,93.9 L67.5,93.2 L67.7,92.6 L68.2,91.9 L68.9,91.2 L69.6,90.6 L70.4,89.9 L71.0,89.2 L71.6,88.5 L72.1,87.9 L72.5,87.2 L72.8,86.5 L73.1,85.9 L73.4,85.2 L73.7,84.5 L74.0,83.8 L74.3,83.2 L74.6,82.5 L75.0,81.8 L75.5,81.2 L76.5,80.5 Z" fill="#14dcf4" stroke="#14dcf4" stroke-width="0.3" filter="url(#bl4)"/><g filter="url(#bl0)"><path d="M156.5,75.0 L157.4,75.8 L157.9,76.6 L158.3,77.4 L158.6,78.2 L158.9,79.0 L159.2,79.8 L159.5,80.6 L159.7,81.4 L160.0,82.2 L160.2,82.9 L160.4,83.7 L160.6,84.5 L160.8,85.3 L161.0,86.1 L161.2,86.9 L161.4,87.7 L161.5,88.5 L161.7,89.3 L161.8,90.1 L161.9,90.9 L162.1,91.7 L162.2,92.5 L162.3,93.3 L162.4,94.1 L162.4,94.9 L162.5,95.7 L162.5,96.5 L162.5,97.3 L162.5,98.1 L162.4,98.9 L162.3,99.6 L162.2,100.4 L162.1,101.2 L161.8,102.0 L161.6,102.8 L161.2,103.6 L160.7,104.4 L160.1,105.2 L159.1,106.0 L156.5,106.8 L156.5,106.8 L153.8,106.0 L152.8,105.2 L152.1,104.4 L151.6,103.6 L151.3,102.8 L151.0,102.0 L150.7,101.2 L150.5,100.4 L150.3,99.6 L150.0,98.9 L149.7,98.1 L149.2,97.3 L148.7,96.5 L148.1,95.7 L147.5,94.9 L147.0,94.1 L146.7,93.3 L146.6,92.5 L146.9,91.7 L147.4,90.9 L148.1,90.1 L148.9,89.3 L149.7,88.5 L150.4,87.7 L151.0,86.9 L151.5,86.1 L151.8,85.3 L152.1,84.5 L152.4,83.7 L152.7,82.9 L152.9,82.2 L153.1,81.4 L153.4,80.6 L153.7,79.8 L154.0,79.0 L154.3,78.2 L154.6,77.4 L155.0,76.6 L155.5,75.8 L156.5,75.0 Z" fill="#2a26d8" stroke="#2a26d8" stroke-width="6.0" stroke-linejoin="round"/><path d="M152.0,65.7 L161.0,65.7 L162.2,84.0 L150.8,84.0 Z" fill="#2a26d8" stroke="#2a26d8" stroke-width="6.0" stroke-linejoin="round"/></g><g filter="url(#bl1)"><path d="M156.5,75.0 L157.4,75.8 L157.9,76.6 L158.3,77.4 L158.6,78.2 L158.9,79.0 L159.2,79.8 L159.5,80.6 L159.7,81.4 L160.0,82.2 L160.2,82.9 L160.4,83.7 L160.6,84.5 L160.8,85.3 L161.0,86.1 L161.2,86.9 L161.4,87.7 L161.5,88.5 L161.7,89.3 L161.8,90.1 L161.9,90.9 L162.1,91.7 L162.2,92.5 L162.3,93.3 L162.4,94.1 L162.4,94.9 L162.5,95.7 L162.5,96.5 L162.5,97.3 L162.5,98.1 L162.4,98.9 L162.3,99.6 L162.2,100.4 L162.1,101.2 L161.8,102.0 L161.6,102.8 L161.2,103.6 L160.7,104.4 L160.1,105.2 L159.1,106.0 L156.5,106.8 L156.5,106.8 L153.8,106.0 L152.8,105.2 L152.1,104.4 L151.6,103.6 L151.3,102.8 L151.0,102.0 L150.7,101.2 L150.5,100.4 L150.3,99.6 L150.0,98.9 L149.7,98.1 L149.2,97.3 L148.7,96.5 L148.1,95.7 L147.5,94.9 L147.0,94.1 L146.7,93.3 L146.6,92.5 L146.9,91.7 L147.4,90.9 L148.1,90.1 L148.9,89.3 L149.7,88.5 L150.4,87.7 L151.0,86.9 L151.5,86.1 L151.8,85.3 L152.1,84.5 L152.4,83.7 L152.7,82.9 L152.9,82.2 L153.1,81.4 L153.4,80.6 L153.7,79.8 L154.0,79.0 L154.3,78.2 L154.6,77.4 L155.0,76.6 L155.5,75.8 L156.5,75.0 Z" fill="#9040c4" stroke="#9040c4" stroke-width="3.8" stroke-linejoin="round"/><path d="M153.3,66.5 L159.7,66.5 L161.2,84.0 L151.8,84.0 Z" fill="#9040c4" stroke="#9040c4" stroke-width="3.8" stroke-linejoin="round"/></g><g filter="url(#bl2)"><path d="M156.5,75.0 L157.4,75.8 L157.9,76.6 L158.3,77.4 L158.6,78.2 L158.9,79.0 L159.2,79.8 L159.5,80.6 L159.7,81.4 L160.0,82.2 L160.2,82.9 L160.4,83.7 L160.6,84.5 L160.8,85.3 L161.0,86.1 L161.2,86.9 L161.4,87.7 L161.5,88.5 L161.7,89.3 L161.8,90.1 L161.9,90.9 L162.1,91.7 L162.2,92.5 L162.3,93.3 L162.4,94.1 L162.4,94.9 L162.5,95.7 L162.5,96.5 L162.5,97.3 L162.5,98.1 L162.4,98.9 L162.3,99.6 L162.2,100.4 L162.1,101.2 L161.8,102.0 L161.6,102.8 L161.2,103.6 L160.7,104.4 L160.1,105.2 L159.1,106.0 L156.5,106.8 L156.5,106.8 L153.8,106.0 L152.8,105.2 L152.1,104.4 L151.6,103.6 L151.3,102.8 L151.0,102.0 L150.7,101.2 L150.5,100.4 L150.3,99.6 L150.0,98.9 L149.7,98.1 L149.2,97.3 L148.7,96.5 L148.1,95.7 L147.5,94.9 L147.0,94.1 L146.7,93.3 L146.6,92.5 L146.9,91.7 L147.4,90.9 L148.1,90.1 L148.9,89.3 L149.7,88.5 L150.4,87.7 L151.0,86.9 L151.5,86.1 L151.8,85.3 L152.1,84.5 L152.4,83.7 L152.7,82.9 L152.9,82.2 L153.1,81.4 L153.4,80.6 L153.7,79.8 L154.0,79.0 L154.3,78.2 L154.6,77.4 L155.0,76.6 L155.5,75.8 L156.5,75.0 Z" fill="#cc4078" stroke="#cc4078" stroke-width="2.2" stroke-linejoin="round"/><path d="M155.7,69.0 L157.3,69.0 L159.5,84.0 L153.5,84.0 Z" fill="#cc4078" stroke="#cc4078" stroke-width="2.2" stroke-linejoin="round"/></g><g filter="url(#bl3)"><path d="M156.5,75.0 L157.4,75.8 L157.9,76.6 L158.3,77.4 L158.6,78.2 L158.9,79.0 L159.2,79.8 L159.5,80.6 L159.7,81.4 L160.0,82.2 L160.2,82.9 L160.4,83.7 L160.6,84.5 L160.8,85.3 L161.0,86.1 L161.2,86.9 L161.4,87.7 L161.5,88.5 L161.7,89.3 L161.8,90.1 L161.9,90.9 L162.1,91.7 L162.2,92.5 L162.3,93.3 L162.4,94.1 L162.4,94.9 L162.5,95.7 L162.5,96.5 L162.5,97.3 L162.5,98.1 L162.4,98.9 L162.3,99.6 L162.2,100.4 L162.1,101.2 L161.8,102.0 L161.6,102.8 L161.2,103.6 L160.7,104.4 L160.1,105.2 L159.1,106.0 L156.5,106.8 L156.5,106.8 L153.8,106.0 L152.8,105.2 L152.1,104.4 L151.6,103.6 L151.3,102.8 L151.0,102.0 L150.7,101.2 L150.5,100.4 L150.3,99.6 L150.0,98.9 L149.7,98.1 L149.2,97.3 L148.7,96.5 L148.1,95.7 L147.5,94.9 L147.0,94.1 L146.7,93.3 L146.6,92.5 L146.9,91.7 L147.4,90.9 L148.1,90.1 L148.9,89.3 L149.7,88.5 L150.4,87.7 L151.0,86.9 L151.5,86.1 L151.8,85.3 L152.1,84.5 L152.4,83.7 L152.7,82.9 L152.9,82.2 L153.1,81.4 L153.4,80.6 L153.7,79.8 L154.0,79.0 L154.3,78.2 L154.6,77.4 L155.0,76.6 L155.5,75.8 L156.5,75.0 Z" fill="#c0e640" stroke="#c0e640" stroke-width="1.1" stroke-linejoin="round"/><path d="M156.4,72.0 L156.6,72.0 L158.2,84.0 L154.8,84.0 Z" fill="#c0e640" stroke="#c0e640" stroke-width="1.1" stroke-linejoin="round"/></g><path d="M156.5,75.0 L157.4,75.8 L157.9,76.6 L158.3,77.4 L158.6,78.2 L158.9,79.0 L159.2,79.8 L159.5,80.6 L159.7,81.4 L160.0,82.2 L160.2,82.9 L160.4,83.7 L160.6,84.5 L160.8,85.3 L161.0,86.1 L161.2,86.9 L161.4,87.7 L161.5,88.5 L161.7,89.3 L161.8,90.1 L161.9,90.9 L162.1,91.7 L162.2,92.5 L162.3,93.3 L162.4,94.1 L162.4,94.9 L162.5,95.7 L162.5,96.5 L162.5,97.3 L162.5,98.1 L162.4,98.9 L162.3,99.6 L162.2,100.4 L162.1,101.2 L161.8,102.0 L161.6,102.8 L161.2,103.6 L160.7,104.4 L160.1,105.2 L159.1,106.0 L156.5,106.8 L156.5,106.8 L153.8,106.0 L152.8,105.2 L152.1,104.4 L151.6,103.6 L151.3,102.8 L151.0,102.0 L150.7,101.2 L150.5,100.4 L150.3,99.6 L150.0,98.9 L149.7,98.1 L149.2,97.3 L148.7,96.5 L148.1,95.7 L147.5,94.9 L147.0,94.1 L146.7,93.3 L146.6,92.5 L146.9,91.7 L147.4,90.9 L148.1,90.1 L148.9,89.3 L149.7,88.5 L150.4,87.7 L151.0,86.9 L151.5,86.1 L151.8,85.3 L152.1,84.5 L152.4,83.7 L152.7,82.9 L152.9,82.2 L153.1,81.4 L153.4,80.6 L153.7,79.8 L154.0,79.0 L154.3,78.2 L154.6,77.4 L155.0,76.6 L155.5,75.8 L156.5,75.0 Z" fill="#14dcf4" stroke="#14dcf4" stroke-width="0.3" filter="url(#bl4)"/><g filter="url(#bl0)"><path d="M229.7,76.3 L230.6,77.0 L231.1,77.8 L231.4,78.5 L231.8,79.3 L232.1,80.0 L232.3,80.8 L232.6,81.5 L232.8,82.3 L233.1,83.0 L233.3,83.8 L233.5,84.5 L233.7,85.3 L233.9,86.0 L234.1,86.8 L234.2,87.5 L234.4,88.3 L234.6,89.0 L234.7,89.8 L234.8,90.5 L235.0,91.2 L235.1,92.0 L235.2,92.7 L235.3,93.5 L235.4,94.2 L235.4,95.0 L235.5,95.7 L235.5,96.5 L235.5,97.2 L235.5,98.0 L235.4,98.7 L235.4,99.5 L235.2,100.2 L235.1,101.0 L234.9,101.7 L234.6,102.5 L234.2,103.2 L233.8,104.0 L233.1,104.7 L232.2,105.5 L229.7,106.2 L229.7,106.2 L227.2,105.5 L226.3,104.7 L225.6,104.0 L225.2,103.2 L224.8,102.5 L224.5,101.7 L224.3,101.0 L224.2,100.2 L224.0,99.5 L224.0,98.7 L223.9,98.0 L223.9,97.2 L223.9,96.5 L223.9,95.7 L224.0,95.0 L224.0,94.2 L224.1,93.5 L224.2,92.7 L224.3,92.0 L224.4,91.2 L224.6,90.5 L224.7,89.8 L224.8,89.0 L225.0,88.3 L225.2,87.5 L225.3,86.8 L225.5,86.0 L225.7,85.3 L225.9,84.5 L226.1,83.8 L226.3,83.0 L226.6,82.3 L226.8,81.5 L227.1,80.8 L227.3,80.0 L227.6,79.3 L228.0,78.5 L228.3,77.8 L228.8,77.0 L229.7,76.3 Z" fill="#2a26d8" stroke="#2a26d8" stroke-width="6.0" stroke-linejoin="round"/><path d="M229.1,50.0 L230.3,50.0 L234.6,84.0 L224.8,84.0 Z" fill="#2a26d8" stroke="#2a26d8" stroke-width="6.0" stroke-linejoin="round"/></g><g filter="url(#bl1)"><path d="M229.7,76.3 L230.6,77.0 L231.1,77.8 L231.4,78.5 L231.8,79.3 L232.1,80.0 L232.3,80.8 L232.6,81.5 L232.8,82.3 L233.1,83.0 L233.3,83.8 L233.5,84.5 L233.7,85.3 L233.9,86.0 L234.1,86.8 L234.2,87.5 L234.4,88.3 L234.6,89.0 L234.7,89.8 L234.8,90.5 L235.0,91.2 L235.1,92.0 L235.2,92.7 L235.3,93.5 L235.4,94.2 L235.4,95.0 L235.5,95.7 L235.5,96.5 L235.5,97.2 L235.5,98.0 L235.4,98.7 L235.4,99.5 L235.2,100.2 L235.1,101.0 L234.9,101.7 L234.6,102.5 L234.2,103.2 L233.8,104.0 L233.1,104.7 L232.2,105.5 L229.7,106.2 L229.7,106.2 L227.2,105.5 L226.3,104.7 L225.6,104.0 L225.2,103.2 L224.8,102.5 L224.5,101.7 L224.3,101.0 L224.2,100.2 L224.0,99.5 L224.0,98.7 L223.9,98.0 L223.9,97.2 L223.9,96.5 L223.9,95.7 L224.0,95.0 L224.0,94.2 L224.1,93.5 L224.2,92.7 L224.3,92.0 L224.4,91.2 L224.6,90.5 L224.7,89.8 L224.8,89.0 L225.0,88.3 L225.2,87.5 L225.3,86.8 L225.5,86.0 L225.7,85.3 L225.9,84.5 L226.1,83.8 L226.3,83.0 L226.6,82.3 L226.8,81.5 L227.1,80.8 L227.3,80.0 L227.6,79.3 L228.0,78.5 L228.3,77.8 L228.8,77.0 L229.7,76.3 Z" fill="#9040c4" stroke="#9040c4" stroke-width="3.8" stroke-linejoin="round"/><path d="M229.3,56.0 L230.1,56.0 L233.8,84.0 L225.6,84.0 Z" fill="#9040c4" stroke="#9040c4" stroke-width="3.8" stroke-linejoin="round"/></g><g filter="url(#bl2)"><path d="M229.7,76.3 L230.6,77.0 L231.1,77.8 L231.4,78.5 L231.8,79.3 L232.1,80.0 L232.3,80.8 L232.6,81.5 L232.8,82.3 L233.1,83.0 L233.3,83.8 L233.5,84.5 L233.7,85.3 L233.9,86.0 L234.1,86.8 L234.2,87.5 L234.4,88.3 L234.6,89.0 L234.7,89.8 L234.8,90.5 L235.0,91.2 L235.1,92.0 L235.2,92.7 L235.3,93.5 L235.4,94.2 L235.4,95.0 L235.5,95.7 L235.5,96.5 L235.5,97.2 L235.5,98.0 L235.4,98.7 L235.4,99.5 L235.2,100.2 L235.1,101.0 L234.9,101.7 L234.6,102.5 L234.2,103.2 L233.8,104.0 L233.1,104.7 L232.2,105.5 L229.7,106.2 L229.7,106.2 L227.2,105.5 L226.3,104.7 L225.6,104.0 L225.2,103.2 L224.8,102.5 L224.5,101.7 L224.3,101.0 L224.2,100.2 L224.0,99.5 L224.0,98.7 L223.9,98.0 L223.9,97.2 L223.9,96.5 L223.9,95.7 L224.0,95.0 L224.0,94.2 L224.1,93.5 L224.2,92.7 L224.3,92.0 L224.4,91.2 L224.6,90.5 L224.7,89.8 L224.8,89.0 L225.0,88.3 L225.2,87.5 L225.3,86.8 L225.5,86.0 L225.7,85.3 L225.9,84.5 L226.1,83.8 L226.3,83.0 L226.6,82.3 L226.8,81.5 L227.1,80.8 L227.3,80.0 L227.6,79.3 L228.0,78.5 L228.3,77.8 L228.8,77.0 L229.7,76.3 Z" fill="#cc4078" stroke="#cc4078" stroke-width="2.2" stroke-linejoin="round"/><path d="M229.6,65.0 L229.8,65.0 L232.3,84.0 L227.1,84.0 Z" fill="#cc4078" stroke="#cc4078" stroke-width="2.2" stroke-linejoin="round"/></g><g filter="url(#bl3)"><path d="M229.7,76.3 L230.6,77.0 L231.1,77.8 L231.4,78.5 L231.8,79.3 L232.1,80.0 L232.3,80.8 L232.6,81.5 L232.8,82.3 L233.1,83.0 L233.3,83.8 L233.5,84.5 L233.7,85.3 L233.9,86.0 L234.1,86.8 L234.2,87.5 L234.4,88.3 L234.6,89.0 L234.7,89.8 L234.8,90.5 L235.0,91.2 L235.1,92.0 L235.2,92.7 L235.3,93.5 L235.4,94.2 L235.4,95.0 L235.5,95.7 L235.5,96.5 L235.5,97.2 L235.5,98.0 L235.4,98.7 L235.4,99.5 L235.2,100.2 L235.1,101.0 L234.9,101.7 L234.6,102.5 L234.2,103.2 L233.8,104.0 L233.1,104.7 L232.2,105.5 L229.7,106.2 L229.7,106.2 L227.2,105.5 L226.3,104.7 L225.6,104.0 L225.2,103.2 L224.8,102.5 L224.5,101.7 L224.3,101.0 L224.2,100.2 L224.0,99.5 L224.0,98.7 L223.9,98.0 L223.9,97.2 L223.9,96.5 L223.9,95.7 L224.0,95.0 L224.0,94.2 L224.1,93.5 L224.2,92.7 L224.3,92.0 L224.4,91.2 L224.6,90.5 L224.7,89.8 L224.8,89.0 L225.0,88.3 L225.2,87.5 L225.3,86.8 L225.5,86.0 L225.7,85.3 L225.9,84.5 L226.1,83.8 L226.3,83.0 L226.6,82.3 L226.8,81.5 L227.1,80.8 L227.3,80.0 L227.6,79.3 L228.0,78.5 L228.3,77.8 L228.8,77.0 L229.7,76.3 Z" fill="#c0e640" stroke="#c0e640" stroke-width="1.1" stroke-linejoin="round"/><path d="M229.6,75.0 L229.8,75.0 L231.2,84.0 L228.2,84.0 Z" fill="#c0e640" stroke="#c0e640" stroke-width="1.1" stroke-linejoin="round"/></g><path d="M229.7,76.3 L230.6,77.0 L231.1,77.8 L231.4,78.5 L231.8,79.3 L232.1,80.0 L232.3,80.8 L232.6,81.5 L232.8,82.3 L233.1,83.0 L233.3,83.8 L233.5,84.5 L233.7,85.3 L233.9,86.0 L234.1,86.8 L234.2,87.5 L234.4,88.3 L234.6,89.0 L234.7,89.8 L234.8,90.5 L235.0,91.2 L235.1,92.0 L235.2,92.7 L235.3,93.5 L235.4,94.2 L235.4,95.0 L235.5,95.7 L235.5,96.5 L235.5,97.2 L235.5,98.0 L235.4,98.7 L235.4,99.5 L235.2,100.2 L235.1,101.0 L234.9,101.7 L234.6,102.5 L234.2,103.2 L233.8,104.0 L233.1,104.7 L232.2,105.5 L229.7,106.2 L229.7,106.2 L227.2,105.5 L226.3,104.7 L225.6,104.0 L225.2,103.2 L224.8,102.5 L224.5,101.7 L224.3,101.0 L224.2,100.2 L224.0,99.5 L224.0,98.7 L223.9,98.0 L223.9,97.2 L223.9,96.5 L223.9,95.7 L224.0,95.0 L224.0,94.2 L224.1,93.5 L224.2,92.7 L224.3,92.0 L224.4,91.2 L224.6,90.5 L224.7,89.8 L224.8,89.0 L225.0,88.3 L225.2,87.5 L225.3,86.8 L225.5,86.0 L225.7,85.3 L225.9,84.5 L226.1,83.8 L226.3,83.0 L226.6,82.3 L226.8,81.5 L227.1,80.8 L227.3,80.0 L227.6,79.3 L228.0,78.5 L228.3,77.8 L228.8,77.0 L229.7,76.3 Z" fill="#14dcf4" stroke="#14dcf4" stroke-width="0.3" filter="url(#bl4)"/><g fill="none" stroke="#a84450" stroke-width="0.85"><path d="M67.2,47.0 L85.9,47.0 L85.9,107.2 L67.8,107.2 L67.8,103.5 L61.6,103.5 L61.6,100.0 L55.5,100.0 L55.5,86.2 L61.6,86.2 L61.6,78.2 L55.5,78.2 L55.5,72.6 L61.6,72.6 L61.6,71.4 L67.8,71.4 L67.8,64.5 L55.5,64.5 L55.5,61.0 L61.3,61.0 L61.3,58.0 L67.2,58.0 L67.2,51.5 L61.3,51.5 L61.3,49.0 L67.2,49.0 Z"/><path d="M147.5,5.9 L165.4,5.9 L165.4,10.0 L147.5,10.0 Z"/><path d="M141.3,11.0 L165.4,11.0 L165.4,15.4 L141.3,15.4 Z"/><path d="M147.5,17.9 L165.4,17.9 L165.4,22.8 L147.5,22.8 Z"/><path d="M165.4,21.6 L171.5,21.6 L171.5,24.0 L165.4,24.0 Z"/><path d="M141.3,24.0 L165.4,24.0 L165.4,35.8 L171.5,35.8 L171.5,45.0 L165.4,45.0 L165.4,46.6 L171.5,46.6 L171.5,50.0 L165.4,50.0 L165.4,53.0 L171.5,53.0 L171.5,54.8 L165.4,54.8 L165.4,64.0 L171.5,64.0 L171.5,69.5 L165.4,69.5 L165.4,72.4 L171.5,72.4 L171.5,75.0 L165.4,75.0 L165.4,76.0 L171.5,76.0 L171.5,82.0 L165.4,82.0 L165.4,85.0 L177.0,85.0 L177.0,88.0 L165.4,88.0 L165.4,93.0 L171.5,93.0 L171.5,103.5 L165.4,103.5 L165.4,109.6 L146.9,109.6 L146.9,106.5 L135.8,106.5 L135.8,101.2 L129.6,101.2 L129.6,98.5 L135.8,98.5 L135.8,95.8 L141.3,95.8 L141.3,90.5 L135.8,90.5 L135.8,88.0 L141.3,88.0 L141.3,72.4 L135.1,72.4 L135.1,69.5 L141.3,69.5 L141.3,64.0 L129.0,64.0 L129.0,57.3 L116.6,57.3 L116.6,55.5 L141.3,55.5 L141.3,40.0 L146.9,40.0 L146.9,35.1 L141.3,35.1 Z"/><path d="M221.2,35.5 L245.7,35.5 L245.7,40.1 L227.0,40.1 L227.0,39.0 L221.2,39.0 Z"/><path d="M221.2,44.4 L245.7,44.4 L245.7,46.0 L238.9,46.0 L238.9,51.8 L245.7,51.8 L245.7,57.8 L238.9,57.8 L238.9,74.9 L245.7,74.9 L245.7,77.3 L238.9,77.3 L238.9,89.3 L245.7,89.3 L245.7,91.8 L238.9,91.8 L238.9,102.5 L245.7,102.5 L245.7,104.5 L238.9,104.5 L238.9,108.4 L221.2,108.4 L221.2,104.5 L214.6,104.5 L214.6,93.4 L221.2,93.4 L221.2,60.6 L214.8,60.6 L214.8,58.0 L208.0,58.0 L208.0,56.0 L214.8,56.0 L214.8,54.3 L221.2,54.3 Z"/><path d="M294.4,12.3 L300.0,12.3 L302.0,10.5 L302.0,18.5 L294.4,18.5 Z"/><path d="M270.3,99.5 L276.0,99.5 L277.0,98.0 L287.5,98.0 L288.5,99.5 L300.0,99.5 L302.0,102.0 L302.0,107.5 L288.0,107.5 L287.0,106.0 L282.5,106.0 L282.5,102.5 L276.0,102.5 L275.0,101.0 L270.3,101.0 Z"/><path d="M31.3,103.3 L37.5,103.3 L37.5,100.4 L61.6,100.4 L61.6,103.3 L67.2,103.3 L67.2,109.8 L31.3,109.8 Z"/><path d="M31.3,109.8 L79.4,109.8 L79.4,117.7 L31.3,117.7 Z"/><path d="M49.3,115.2 L85.6,115.2 L85.6,120.6 L49.3,120.6 Z"/><path d="M55.8,121.0 L98.5,121.0 L98.5,124.3 L55.8,124.3 Z"/><path d="M67.5,124.0 L104.5,124.0 L104.5,127.5 L67.5,127.5 Z"/><path d="M75.5,127.0 L110.5,127.0 L110.5,130.2 L75.5,130.2 Z"/><path d="M86.3,130.2 L116.6,130.2 L116.6,132.4 L86.3,132.4 Z"/><path d="M92.3,132.4 L122.7,132.4 L122.7,135.0 L92.3,135.0 Z"/><path d="M92.3,135.0 L128.8,135.0 L128.8,140.6 L92.3,140.6 Z"/><path d="M104.5,141.0 L147.3,141.0 L147.3,144.5 L104.5,144.5 Z"/><path d="M110.5,144.5 L147.3,144.5 L147.3,148.6 L110.5,148.6 Z"/><path d="M147.3,142.3 L153.0,142.3 L153.0,141.5 L159.0,141.5 L159.0,142.3 L165.0,142.3 L165.0,149.6 L147.3,149.6 Z"/><path d="M123.2,150.3 L159.3,150.3 L159.3,159.3 L123.2,159.3 L123.2,155.0 L129.0,155.0 L129.0,153.0 L123.2,153.0 Z"/><path d="M153.0,153.3 L189.4,153.3 L189.4,159.4 L153.0,159.4 Z"/><path d="M153.0,160.0 L200.0,160.0 L200.0,163.0 L232.0,163.0 L232.0,168.7 L153.0,168.7 Z"/><path d="M123.2,163.1 L153.6,163.1 L153.6,173.0 L123.2,173.0 Z"/><path d="M100.0,172.4 L110.5,172.4 L110.5,182.3 L100.0,182.3 Z"/><path d="M183.8,169.3 L200.0,169.3 L200.0,175.5 L183.8,175.5 Z"/><path d="M202.5,162.6 L220.4,162.6 L220.4,184.5 L202.5,184.5 Z"/><path d="M220.4,168.7 L226.8,168.7 L226.8,172.4 L232.7,172.4 L232.7,184.5 L220.4,184.5 Z"/><path d="M232.7,172.4 L239.5,172.4 L239.5,171.5 L251.2,171.5 L251.2,176.2 L239.5,176.2 L239.5,176.7 L232.7,176.7 Z"/><path d="M232.7,176.7 L263.6,176.7 L263.6,185.3 L232.7,185.3 Z"/><path d="M245.0,182.0 L275.8,182.0 L275.8,188.6 L245.0,188.6 Z"/><path d="M270.0,185.3 L300.5,185.3 L300.5,192.0 L270.0,192.0 Z"/><path d="M37.0,134.2 L61.0,134.2 L61.0,149.6 L37.0,149.6 Z"/><path d="M6.2,137.2 L37.0,137.2 L37.0,145.3 L6.2,145.3 Z"/><path d="M0.0,141.0 L30.8,141.0 L30.8,150.2 L0.0,150.2 Z"/><path d="M0.0,150.2 L49.3,150.2 L49.3,157.6 L0.0,157.6 Z"/><path d="M30.8,148.3 L49.3,148.3 L49.3,154.5 L30.8,154.5 Z"/><path d="M0.0,157.6 L55.5,157.6 L55.5,162.0 L0.0,162.0 Z"/><path d="M12.3,162.0 L61.0,162.0 L61.0,166.8 L12.3,166.8 Z"/><path d="M25.3,162.5 L61.0,162.5 L61.0,170.5 L25.3,170.5 Z"/><path d="M61.0,161.3 L78.9,161.3 L78.9,163.1 L85.1,163.1 L85.1,165.0 L91.2,165.0 L91.2,168.7 L98.6,168.7 L98.6,172.4 L103.0,172.4 L103.0,178.0 L98.6,178.0 L98.6,184.1 L86.3,184.1 L86.3,187.2 L61.0,187.2 L61.0,176.1 L55.5,176.1 L55.5,174.2 L49.3,174.2 L49.3,170.5 L61.0,170.5 Z"/></g><g stroke="#e02838" stroke-width="1"><path d="M67.2,53.0 L79.0,53.0"/><path d="M79.0,52.0 L92.0,52.0"/><path d="M61.3,57.3 L85.9,57.3"/><path d="M141.3,8.4 L147.5,8.4"/><path d="M147.5,11.1 L165.4,11.1"/><path d="M147.5,22.5 L165.4,22.5"/><path d="M135.1,32.0 L141.3,32.0"/><path d="M135.1,72.4 L171.5,72.4"/><path d="M123.4,95.8 L135.8,95.8"/><path d="M146.9,109.6 L165.4,109.6"/><path d="M221.2,50.0 L238.9,50.0"/><path d="M238.9,69.3 L245.7,69.3"/><path d="M37.5,109.8 L79.4,109.8"/><path d="M49.3,115.2 L85.6,115.2"/><path d="M55.8,121.0 L98.5,121.0"/><path d="M67.5,124.0 L104.5,124.0"/><path d="M85.8,127.0 L110.5,127.0"/><path d="M87.0,120.4 L98.7,120.4"/><path d="M87.0,126.6 L104.5,126.6"/><path d="M87.0,132.3 L122.7,132.3"/><path d="M92.3,134.8 L128.8,134.8"/><path d="M104.3,137.8 L128.8,137.8"/><path d="M92.3,140.6 L128.8,140.6"/><path d="M104.5,142.2 L147.3,142.2"/><path d="M111.0,144.8 L147.3,144.8"/><path d="M147.3,149.6 L159.0,149.6"/><path d="M153.5,150.0 L153.5,167.0"/><path d="M153.5,161.0 L200.0,161.0"/><path d="M153.5,163.0 L200.0,163.0"/><path d="M6.2,137.2 L37.0,137.2"/><path d="M0.0,144.0 L6.2,144.0"/><path d="M0.0,149.0 L12.3,149.0"/><path d="M30.8,149.6 L49.3,149.6"/><path d="M0.0,154.5 L30.8,154.5"/><path d="M0.0,157.0 L49.3,157.0"/><path d="M30.8,163.1 L61.0,163.1"/><path d="M37.0,170.5 L55.5,170.5"/><path d="M55.5,185.3 L61.0,185.3"/><path d="M55.5,151.4 L79.0,151.4"/><path d="M220.4,172.4 L220.4,184.5"/><path d="M239.5,176.7 L251.2,176.7"/><path d="M245.6,184.1 L256.8,184.1"/><path d="M270.3,185.3 L275.8,185.3"/><path d="M270.3,185.3 L270.3,192.0"/></g><path d="M156.5,0 V192" stroke="#b04a4a" stroke-width="0.9"/><rect x="122.6" y="72.4" width="55.1" height="37.8" fill="none" stroke="#c8e448" stroke-width="0.9"/></svg>
<div class="a" style="left:6.3px;top:266.7px;width:62.0px;height:9px;border:1px solid;border-color:#a0a0a0 #fff #fff #a0a0a0;background:#f0f0f0"></div><div class="s" style="left:8.3px;top:268.2px">Position: (3.750,1.660)</div><div class="a" style="left:71.7px;top:266.7px;width:45.0px;height:9px;border:1px solid;border-color:#a0a0a0 #fff #fff #a0a0a0;background:#f0f0f0"></div><div class="s" style="left:73.7px;top:268.2px">Value: 849.0000</div><div class="a" style="left:213.4px;top:266.7px;width:33.0px;height:9px;border:1px solid;border-color:#a0a0a0 #fff #fff #a0a0a0;background:#f0f0f0"></div><div class="s" style="left:215.4px;top:268.2px">State: Blob</div><div class="a" style="left:249.3px;top:266.7px;width:63.69999999999999px;height:9px;border:1px solid;border-color:#a0a0a0 #fff #fff #a0a0a0;background:#f0f0f0"></div><div class="s" style="left:251.3px;top:268.2px">Substate: Select Blob(s)</div><div class="a" style="left:326.3px;top:266.7px;width:62.0px;height:9px;border:1px solid;border-color:#a0a0a0 #fff #fff #a0a0a0;background:#f0f0f0"></div><div class="s" style="left:328.3px;top:268.2px">Position: (3.900,2.370)</div><div class="a" style="left:391.7px;top:266.7px;width:45.0px;height:9px;border:1px solid;border-color:#a0a0a0 #fff #fff #a0a0a0;background:#f0f0f0"></div><div class="s" style="left:393.7px;top:268.2px">Value: 0.0000</div><div class="a" style="left:533.4px;top:266.7px;width:33.0px;height:9px;border:1px solid;border-color:#a0a0a0 #fff #fff #a0a0a0;background:#f0f0f0"></div><div class="s" style="left:535.4px;top:268.2px">State: View</div><div class="a" style="left:569.3px;top:266.7px;width:63.69999999999999px;height:9px;border:1px solid;border-color:#a0a0a0 #fff #fff #a0a0a0;background:#f0f0f0"></div><div class="s" style="left:571.3px;top:268.2px">Substate:</div><div class="a" style="left:643px;top:62px;width:313px;height:139px;background:#f5f5f5"></div><svg class="a" style="left:645px;top:75px" width="310" height="123"><defs>
<filter id="nb0" x="-50%" y="-50%" width="200%" height="200%" color-interpolation-filters="sRGB"><feGaussianBlur stdDeviation="0.35"/></filter>
<filter id="nb1" x="-50%" y="-50%" width="200%" height="200%" color-interpolation-filters="sRGB"><feGaussianBlur stdDeviation="0.6"/></filter>
<filter id="nb2" x="-50%" y="-50%" width="200%" height="200%" color-interpolation-filters="sRGB"><feGaussianBlur stdDeviation="1"/></filter>
<filter id="nnz" x="0" y="0" width="100%" height="100%" color-interpolation-filters="sRGB"><feTurbulence type="fractalNoise" baseFrequency="0.4 0.06" numOctaves="2" seed="4"/><feColorMatrix type="matrix" values="0 0 0 -0.1 0.13  0 0 0 0.32 0.465  0 0 0 0.06 0.89  0 0 0 0 1"/></filter>
</defs><rect width="310" height="123" filter="url(#nnz)"/><path d="M65.0,1.0 L95.0,25.0" stroke="#2a48d0" stroke-width="0.9" opacity="0.7" filter="url(#nb0)"/><path d="M103.0,0.0 L122.0,18.0" stroke="#2a48d0" stroke-width="0.9" opacity="0.6" filter="url(#nb0)"/><path d="M45.0,88.0 L67.0,123.0" stroke="#2a60d8" stroke-width="1" opacity="0.45" filter="url(#nb0)"/><path d="M11.0,101.0 L3.0,122.0" stroke="#2430c0" stroke-width="2.2" opacity="0.9" filter="url(#nb0)"/><path d="M262.0,5.0 L270.0,17.0" stroke="#2a50c8" stroke-width="1.5" opacity="0.6" filter="url(#nb0)"/><path d="M260.0,46.0 L309.0,61.0" stroke="#2a50c8" stroke-width="0.9" opacity="0.6" filter="url(#nb0)"/><path d="M35.0,65.0 L155.0,72.5" stroke="#2a40c8" stroke-width="1.2" opacity="0.6" filter="url(#nb0)"/><path d="M9.0,48.0 Q45.0,59.0 91.0,62.0" stroke="#2438c0" stroke-width="1.1" fill="none" filter="url(#nb0)"/><path d="M89.0,48.0 Q120.0,59.0 155.0,65.0" stroke="#2a40c8" stroke-width="1" fill="none" filter="url(#nb0)"/><path d="M145.0,50.0 Q170.0,56.0 197.0,62.5" stroke="#2438c0" stroke-width="1.1" fill="none" filter="url(#nb0)"/><path d="M103.0,46.0 Q120.0,55.0 145.0,59.0" stroke="#2a30c8" stroke-width="2.2" fill="none" filter="url(#nb1)"/><path d="M103.0,46.0 Q120.0,55.0 143.0,58.5" stroke="#c03a80" stroke-width="1" fill="none" filter="url(#nb0)"/><path d="M103.0,60.0 L117.0,63.0" stroke="#2a30c8" stroke-width="1.6" fill="none" filter="url(#nb0)"/><path d="M1.0,65.2 L309.0,76.7 L309.0,80.9 L1.0,71.8 Z" fill="#2a30c8" filter="url(#nb1)"/><path d="M1.0,65.9 L309.0,77.2 L309.0,79.8 L1.0,70.5 Z" fill="#c83a80" filter="url(#nb0)"/><path d="M1.0,66.7 L309.0,77.9 L309.0,79.3 L1.0,69.7 Z" fill="#b0e460" filter="url(#nb0)"/><path d="M1.0,67.3 L155.0,73.2 L155.0,74.0 L1.0,69.1 Z" fill="#40e8e0" filter="url(#nb0)"/><ellipse cx="2.5" cy="68.30000000000001" rx="2.6" ry="2.5" fill="#c83a80" filter="url(#nb0)"/><ellipse cx="3" cy="68.30000000000001" rx="1.8" ry="1.6" fill="#b0e460"/><ellipse cx="3.2999999999999545" cy="68.30000000000001" rx="1.1" ry="1" fill="#40e8e0"/><path d="M114.7,11.0 L115.3,11.0 L117.9,21.5 L112.1,21.5z" fill="#2a2ad0" filter="url(#nb1)"/><path d="M115.0,13.0 L116.7,20.5 L113.3,20.5z" fill="#b83a90" filter="url(#nb0)"/><ellipse cx="115" cy="20.8" rx="1.785" ry="1.8900000000000001" fill="#d04070" filter="url(#nb0)"/><ellipse cx="115" cy="20.9" rx="1.3650000000000002" ry="1.47" fill="#b8e040"/><ellipse cx="115" cy="21.1" rx="0.9450000000000001" ry="1.05" fill="#30dcf0"/><path d="M98.0,19.0 L98.6,19.0 L101.2,29.5 L95.4,29.5z" fill="#2a2ad0" filter="url(#nb1)"/><path d="M98.3,21.0 L100.0,28.5 L96.6,28.5z" fill="#b83a90" filter="url(#nb0)"/><ellipse cx="98.29999999999995" cy="28.8" rx="1.785" ry="1.8900000000000001" fill="#d04070" filter="url(#nb0)"/><ellipse cx="98.29999999999995" cy="28.9" rx="1.3650000000000002" ry="1.47" fill="#b8e040"/><ellipse cx="98.29999999999995" cy="29.1" rx="0.9450000000000001" ry="1.05" fill="#30dcf0"/><path d="M7.2,35.0 L7.8,35.0 L10.8,47.5 L4.2,47.5z" fill="#2a2ad0" filter="url(#nb1)"/><path d="M7.5,37.0 L9.5,46.5 L5.5,46.5z" fill="#b83a90" filter="url(#nb0)"/><ellipse cx="7.5" cy="46.8" rx="2.125" ry="2.25" fill="#d04070" filter="url(#nb0)"/><ellipse cx="7.5" cy="46.9" rx="1.625" ry="1.75" fill="#b8e040"/><ellipse cx="7.5" cy="47.1" rx="1.125" ry="1.25" fill="#30dcf0"/><path d="M87.2,36.0 L87.8,36.0 L90.4,46.5 L84.6,46.5z" fill="#2a2ad0" filter="url(#nb1)"/><path d="M87.5,38.0 L89.2,45.5 L85.8,45.5z" fill="#b83a90" filter="url(#nb0)"/><ellipse cx="87.5" cy="45.8" rx="1.785" ry="1.8900000000000001" fill="#d04070" filter="url(#nb0)"/><ellipse cx="87.5" cy="45.9" rx="1.3650000000000002" ry="1.47" fill="#b8e040"/><ellipse cx="87.5" cy="46.1" rx="0.9450000000000001" ry="1.05" fill="#30dcf0"/><path d="M68.0,52.0 L68.6,52.0 L71.2,59.5 L65.4,59.5z" fill="#2a2ad0" filter="url(#nb1)"/><path d="M68.3,54.0 L70.0,58.5 L66.6,58.5z" fill="#b83a90" filter="url(#nb0)"/><ellipse cx="68.29999999999995" cy="58.8" rx="1.785" ry="1.8900000000000001" fill="#d04070" filter="url(#nb0)"/><ellipse cx="68.29999999999995" cy="58.9" rx="1.3650000000000002" ry="1.47" fill="#b8e040"/><ellipse cx="68.29999999999995" cy="59.1" rx="0.9450000000000001" ry="1.05" fill="#30dcf0"/><path d="M96.4,50.5 L97.0,50.5 L99.4,58.0 L94.0,58.0z" fill="#2a2ad0" filter="url(#nb1)"/><path d="M96.7,52.5 L98.2,57.0 L95.2,57.0z" fill="#b83a90" filter="url(#nb0)"/><ellipse cx="96.70000000000005" cy="57.3" rx="1.615" ry="1.71" fill="#d04070" filter="url(#nb0)"/><ellipse cx="96.70000000000005" cy="57.4" rx="1.2349999999999999" ry="1.3299999999999998" fill="#b8e040"/><ellipse cx="96.70000000000005" cy="57.6" rx="0.855" ry="0.95" fill="#30dcf0"/><path d="M154.0,35.5 L154.6,35.5 L157.0,45.0 L151.6,45.0z" fill="#2a2ad0" filter="url(#nb1)"/><path d="M154.3,37.5 L155.8,44.0 L152.8,44.0z" fill="#b83a90" filter="url(#nb0)"/><ellipse cx="154.29999999999995" cy="44.3" rx="1.615" ry="1.71" fill="#d04070" filter="url(#nb0)"/><ellipse cx="154.29999999999995" cy="44.4" rx="1.2349999999999999" ry="1.3299999999999998" fill="#b8e040"/><ellipse cx="154.29999999999995" cy="44.6" rx="0.855" ry="0.95" fill="#30dcf0"/><path d="M177.4,28.5 L178.0,28.5 L180.6,39.0 L174.8,39.0z" fill="#2a2ad0" filter="url(#nb1)"/><path d="M177.7,30.5 L179.4,38.0 L176.0,38.0z" fill="#b83a90" filter="url(#nb0)"/><ellipse cx="177.70000000000005" cy="38.3" rx="1.785" ry="1.8900000000000001" fill="#d04070" filter="url(#nb0)"/><ellipse cx="177.70000000000005" cy="38.4" rx="1.3650000000000002" ry="1.47" fill="#b8e040"/><ellipse cx="177.70000000000005" cy="38.6" rx="0.9450000000000001" ry="1.05" fill="#30dcf0"/><path d="M177.4,38.5 L178.0,38.5 L180.6,46.0 L174.8,46.0z" fill="#2a2ad0" filter="url(#nb1)"/><path d="M177.7,40.5 L179.4,45.0 L176.0,45.0z" fill="#b83a90" filter="url(#nb0)"/><ellipse cx="177.70000000000005" cy="45.3" rx="1.785" ry="1.8900000000000001" fill="#d04070" filter="url(#nb0)"/><ellipse cx="177.70000000000005" cy="45.4" rx="1.3650000000000002" ry="1.47" fill="#b8e040"/><ellipse cx="177.70000000000005" cy="45.6" rx="0.9450000000000001" ry="1.05" fill="#30dcf0"/><path d="M199.7,34.0 L200.3,34.0 L202.7,44.5 L197.3,44.5z" fill="#2a2ad0" filter="url(#nb1)"/><path d="M200.0,36.0 L201.5,43.5 L198.5,43.5z" fill="#b83a90" filter="url(#nb0)"/><ellipse cx="200" cy="43.8" rx="1.615" ry="1.71" fill="#d04070" filter="url(#nb0)"/><ellipse cx="200" cy="43.9" rx="1.2349999999999999" ry="1.3299999999999998" fill="#b8e040"/><ellipse cx="200" cy="44.1" rx="0.855" ry="0.95" fill="#30dcf0"/><g transform="rotate(24 101 44.5)"><ellipse cx="101" cy="44.5" rx="6" ry="3.2" fill="#2a2ad0" filter="url(#nb1)"/><ellipse cx="101" cy="44.5" rx="5" ry="2.4" fill="#d04070"/><ellipse cx="101" cy="44.5" rx="4.2" ry="1.8" fill="#a0d868"/><ellipse cx="100.5" cy="44.3" rx="3.2" ry="1.3" fill="#30dcf0"/></g><circle cx="45.700000000000045" cy="34" r="1.4" fill="#b83a90" filter="url(#nb0)"/><circle cx="24" cy="43.3" r="1.4" fill="#b83a90" filter="url(#nb0)"/><circle cx="127.5" cy="43.3" r="1.4" fill="#c03a70" filter="url(#nb0)"/><circle cx="216.5" cy="41.7" r="1.3" fill="#c03a70" filter="url(#nb0)"/><circle cx="189.5" cy="14" r="1.5" fill="#c03a70" filter="url(#nb0)"/><circle cx="154.29999999999995" cy="62" r="1.5" fill="#c03a70" filter="url(#nb0)"/><circle cx="194.29999999999995" cy="62" r="1.4" fill="#c03a70" filter="url(#nb0)"/><circle cx="38" cy="30.5" r="1.1" fill="#2a40c0" filter="url(#nb0)"/><circle cx="72.5" cy="28" r="1.1" fill="#2a40c0" filter="url(#nb0)"/><circle cx="87" cy="29.5" r="1.1" fill="#2a40c0" filter="url(#nb0)"/><circle cx="120" cy="24" r="1.2" fill="#2a40c0" filter="url(#nb0)"/><circle cx="205.29999999999995" cy="6.299999999999997" r="1.1" fill="#2a40c0" filter="url(#nb0)"/><circle cx="225" cy="43.5" r="1.1" fill="#2a40c0" filter="url(#nb0)"/><circle cx="30" cy="57" r="1.1" fill="#2a40c0" filter="url(#nb0)"/><circle cx="170.5" cy="1.5" r="1.1" fill="#2a40c0" filter="url(#nb0)"/><circle cx="191" cy="62.5" r="1.1" fill="#2a40c0" filter="url(#nb0)"/><circle cx="28.5" cy="47" r="1.1" fill="#2a40c0" filter="url(#nb0)"/><circle cx="5.5" cy="52" r="1.1" fill="#2a40c0" filter="url(#nb0)"/><circle cx="187" cy="12" r="1.2" fill="#2a40c0" filter="url(#nb0)"/><circle cx="71.5" cy="45" r="1.0" fill="#2a40c0" filter="url(#nb0)"/><rect x="133.5" y="25.5" width="89" height="40" fill="none" stroke="#3a4048" stroke-width="0.8"/></svg><div class="a" style="left:645.5px;top:65px;width:6px;height:6px;border-radius:50%;border:0.8px solid #9a9a9a;background:radial-gradient(#fdfdfd,#d8d8d8)"></div><div class="s" style="left:654px;top:64.8px">Original View</div><div class="a" style="left:689px;top:65px;width:6px;height:6px;border-radius:50%;border:0.8px solid #9a9a9a;background:radial-gradient(#fdfdfd,#d8d8d8)"></div><div class="s" style="left:697px;top:64.8px">Display View</div><div class="a" style="left:731.7px;top:65px;width:6px;height:6px;border-radius:50%;border:0.8px solid #9a9a9a;background:radial-gradient(#fdfdfd,#d8d8d8)"></div><div class="a" style="left:733.5px;top:66.8px;width:2.6px;height:2.6px;border-radius:50%;background:#1d4f86"></div><div class="s" style="left:739.5px;top:64.8px">Fit View</div><div class="s" style="left:765px;top:64.8px;color:#2aa84a">V</div>
<div class="a" style="left:643px;top:220px;width:313px;height:12px;background:#f0f0f0;border-top:1px solid #cfd6de"></div><svg class="a" style="left:643px;top:220px" width="200" height="12">
<path d="M5,3 q3,-1 5,2 M9,9 q-3,1 -5,-2" stroke="#e0a830" stroke-width="1.6" fill="none"/>
<rect x="15" y="2.5" width="7" height="7" fill="#a9c0de" stroke="#6f8db5" stroke-width="0.6"/><rect x="17" y="3" width="3" height="2.5" fill="#eef3fa"/>
<rect x="26" y="2.5" width="6" height="7.5" fill="#e8eef6" stroke="#9ab0cc" stroke-width="0.6"/><rect x="28" y="4" width="5" height="6" fill="#cfdcee" stroke="#9ab0cc" stroke-width="0.5"/>
<rect x="37" y="1.5" width="1" height="9" fill="#c9c9c9"/>
<path d="M45.5,3 v6 M42.5,6 h6" stroke="#3aa040" stroke-width="2"/>
<path d="M65.5,3.5 l5,5 M70.5,3.5 l-5,5" stroke="#e02828" stroke-width="1.7"/>
<rect x="97" y="1.5" width="1" height="9" fill="#c9c9c9"/>
<path d="M139.5,6 l3,-3 v2 h4 v2 h-4 v2z" fill="#f2cc5c" stroke="#d9a730" stroke-width="0.5"/>
<path d="M159.5,6 l-3,-3 v2 h-4 v2 h4 v2z" fill="#f2cc5c" stroke="#d9a730" stroke-width="0.5"/>
<rect x="163" y="1.5" width="1" height="9" fill="#c9c9c9"/>
</svg><div class="s" style="left:695px;top:222.8px">Add</div><div class="s" style="left:717px;top:222.8px">Remove</div><div class="a" style="left:743px;top:221px;width:38px;height:10px;border:1px solid #a9a9a9;background:linear-gradient(#f4f4f4,#dcdcdc)"></div><div class="s" style="left:745px;top:222.8px">Column II</div><div class="dd" style="left:775px;top:226px"></div><div class="s" style="left:808.7px;top:222.8px">Group:</div><div class="a" style="left:827px;top:221px;width:40px;height:10px;border:1px solid #a9a9a9;background:linear-gradient(#f4f4f4,#dcdcdc)"></div><div class="s" style="left:829px;top:222.8px">By Location</div><div class="dd" style="left:861px;top:226px"></div><div class="a" style="left:869.5px;top:221.5px;width:1px;height:9px;background:#c9c9c9"></div><div class="a" style="left:874px;top:223px;width:6px;height:6px;border:1px solid #aaa;background:linear-gradient(#e9e9e9,#fafafa)"></div><div class="s" style="left:882px;top:222.8px">Center on Zoom</div><div class="a" style="left:643px;top:232px;width:262px;height:98px;background:#fff"></div><div class="a" style="left:905px;top:232px;width:51px;height:98px;background:#f0f0f0"></div><div class="s" style="left:652px;top:235.3px">Column I Location = 4.900</div><svg class="a" style="left:643px;top:232px" width="262" height="98"><path d="M36.5,20 V78.5 H246.70000000000005" stroke="#333" stroke-width="0.9" fill="none"/><path d="M34.0,78.5 H36.5" stroke="#333" stroke-width="0.8"/><path d="M35.3,68.8 H36.5" stroke="#999" stroke-width="0.6"/><path d="M34.0,59.0 H36.5" stroke="#333" stroke-width="0.8"/><path d="M35.3,49.2 H36.5" stroke="#999" stroke-width="0.6"/><path d="M34.0,39.5 H36.5" stroke="#333" stroke-width="0.8"/><path d="M35.3,29.8 H36.5" stroke="#999" stroke-width="0.6"/><path d="M34.0,20.0 H36.5" stroke="#333" stroke-width="0.8"/><path d="M36.5,78.5 v2.5 M246.70000000000005,78.5 v2.5" stroke="#333" stroke-width="0.8"/><path d="M89.1,78.5 v1.2" stroke="#999" stroke-width="0.6"/><path d="M141.6,78.5 v1.2" stroke="#999" stroke-width="0.6"/><path d="M194.2,78.5 v1.2" stroke="#999" stroke-width="0.6"/><path d="M129.0,78.5 L129.3,78.5 L129.5,78.5 L129.8,78.5 L130.0,78.5 L130.3,78.4 L130.6,78.4 L130.8,78.4 L131.1,78.3 L131.3,78.3 L131.6,78.2 L131.9,78.1 L132.1,77.9 L132.4,77.7 L132.6,77.5 L132.9,77.1 L133.2,76.7 L133.4,76.2 L133.7,75.6 L133.9,74.9 L134.2,74.0 L134.5,73.0 L134.7,71.8 L135.0,70.4 L135.2,68.8 L135.5,67.1 L135.8,65.2 L136.0,63.1 L136.3,60.9 L136.5,58.5 L136.8,56.1 L137.1,53.7 L137.3,51.3 L137.6,49.0 L137.8,46.8 L138.1,44.7 L138.4,43.0 L138.6,41.5 L138.9,40.4 L139.1,39.6 L139.4,39.2 L139.7,39.3 L139.9,39.7 L140.2,40.5 L140.4,41.7 L140.7,43.3 L141.0,45.1 L141.2,47.1 L141.5,49.3 L141.7,51.7 L142.0,54.1 L142.3,56.5 L142.5,58.8 L142.8,61.1 L143.0,63.3 L143.3,65.3 L143.6,67.1 L143.8,68.8 L144.1,70.3 L144.3,71.6 L144.6,72.7 L144.9,73.7 L145.1,74.5 L145.4,75.2 L145.6,75.7 L145.9,76.2 L146.2,76.5 L146.4,76.8 L146.7,77.0 L146.9,77.2 L147.2,77.3 L147.5,77.4 L147.7,77.4 L148.0,77.4 L148.2,77.5 L148.5,77.5 L148.8,77.5 L149.0,77.4 L149.3,77.4 L149.5,77.4 L149.8,77.4 L150.1,77.4 L150.3,77.4 L150.6,77.4 L150.8,77.4 L151.1,77.3 L151.4,77.3 L151.6,77.3 L151.9,77.3 L152.1,77.3 L152.4,77.3 L152.7,77.3 L152.9,77.3 L153.2,77.4 L153.4,77.4 L153.7,77.4 L154.0,77.4 L154.2,77.4 L154.5,77.4 L154.7,77.5 L155.0,77.5 L155.3,77.5 L155.5,77.5 L155.8,77.6 L156.0,77.6 L156.3,77.6 L156.6,77.7 L156.8,77.7 L157.1,77.7 L157.3,77.8 L157.6,77.8 L157.9,77.8 L158.1,77.8 L158.4,77.9 L158.6,77.9 L158.9,77.9 L159.2,78.0 L159.4,78.0 L159.7,78.0 L159.9,78.1 L160.2,78.1 L160.5,78.1 L160.7,78.1 L161.0,78.2 L161.2,78.2 L161.5,78.2 L161.8,78.2 L162.0,78.3 L162.3,78.3 L162.5,78.3 L162.8,78.3 L163.1,78.3 L163.3,78.3 L163.6,78.4 L163.8,78.4 L164.1,78.4 L164.4,78.4 L164.6,78.4 L164.9,78.4 L165.1,78.4 L165.4,78.4 L165.7,78.4 L165.9,78.4 L166.2,78.4 L166.4,78.5 L166.7,78.5 L167.0,78.5 L167.2,78.5 L167.5,78.5 L167.7,78.5 L168.0,78.5 L168.3,78.5 L168.5,78.5 L168.8,78.5 L169.0,78.5 L169.3,78.5 L169.6,78.5 L169.8,78.5 L170.1,78.5 L170.3,78.5 L170.6,78.4 L170.9,78.4 L171.1,78.4 L171.4,78.4 L171.6,78.3 L171.9,78.3 L172.2,78.2 L172.4,78.1 L172.7,78.0 L172.9,77.8 L173.2,77.7 L173.5,77.4 L173.7,77.1 L174.0,76.8 L174.2,76.4 L174.5,75.9 L174.8,75.3 L175.0,74.7 L175.3,73.9 L175.5,73.0 L175.8,72.0 L176.1,70.9 L176.3,69.7 L176.6,68.3 L176.8,66.9 L177.1,65.3 L177.4,63.7 L177.6,62.0 L177.9,60.3 L178.1,58.6 L178.4,56.9 L178.7,55.2 L178.9,53.6 L179.2,52.2 L179.4,50.9 L179.7,49.8 L180.0,48.8 L180.2,48.1 L180.5,47.7 L180.7,47.5 L181.0,47.6 L181.3,47.9 L181.5,48.5 L181.8,49.3 L182.0,50.3 L182.3,51.6 L182.6,53.0 L182.8,54.5 L183.1,56.1 L183.3,57.8 L183.6,59.5 L183.9,61.2 L184.1,62.9 L184.4,64.6 L184.6,66.2 L184.9,67.7 L185.2,69.0 L185.4,70.3 L185.7,71.5 L185.9,72.6 L186.2,73.5 L186.5,74.3 L186.7,75.0 L187.0,75.7 L187.2,76.2 L187.5,76.6 L187.8,77.0 L188.0,77.3 L188.3,77.6 L188.5,77.8 L188.8,77.9 L189.1,78.1 L189.3,78.2 L189.6,78.2 L189.8,78.3 L190.1,78.4 L190.4,78.4 L190.6,78.4 L190.9,78.4 L191.1,78.5 L191.4,78.5 L191.7,78.5 L191.9,78.5 L192.2,78.5 L192.4,78.5 L192.7,78.5 L193.0,78.5 L193.2,78.5 L193.5,78.5 L193.7,78.5 L194.0,78.5 L194.3,78.5 L194.5,78.5 L194.8,78.5 L195.0,78.5 L195.3,78.5 L195.6,78.5 L195.8,78.5 L196.1,78.5 L196.3,78.5 L196.6,78.5 L196.9,78.5 L197.1,78.5 L197.4,78.5 L197.6,78.5 L197.9,78.5 L198.2,78.5 L198.4,78.5 L198.7,78.5 L198.9,78.5 L199.2,78.5 L199.5,78.5 L199.7,78.5 L200.0,78.5 L200.2,78.5 L200.5,78.5 L200.8,78.5 L201.0,78.5 L201.3,78.5 L201.5,78.5 L201.8,78.5 L202.1,78.5 L202.3,78.5 L202.6,78.5 L202.8,78.5 L203.1,78.5 L203.4,78.5 L203.6,78.5 L203.9,78.5 L204.1,78.5 L204.4,78.5 L204.7,78.5 L204.9,78.5 L205.2,78.5 L205.4,78.5 L205.7,78.5 L206.0,78.5 L206.2,78.5 L206.5,78.5 L206.7,78.5 L207.0,78.5" stroke="#ff6060" stroke-width="0.9" fill="none"/><path d="M130.0,77.9 L130.2,77.9 L130.4,77.9 L130.5,77.9 L130.7,77.9 L130.9,77.9 L131.1,77.8 L131.3,77.8 L131.4,77.8 L131.6,77.8 L131.8,77.7 L132.0,77.7 L132.2,77.7 L132.3,77.6 L132.5,77.5 L132.7,77.5 L132.9,77.4 L133.1,77.3 L133.2,77.2 L133.4,77.1 L133.6,76.9 L133.8,76.8 L134.0,76.6 L134.1,76.4 L134.3,76.2 L134.5,76.0 L134.7,75.7 L134.9,75.5 L135.0,75.2 L135.2,74.9 L135.4,74.5 L135.6,74.2 L135.8,73.8 L135.9,73.4 L136.1,73.0 L136.3,72.6 L136.5,72.2 L136.7,71.7 L136.8,71.3 L137.0,70.8 L137.2,70.4 L137.4,70.0 L137.6,69.6 L137.7,69.2 L137.9,68.8 L138.1,68.5 L138.3,68.2 L138.5,67.9 L138.6,67.6 L138.8,67.4 L139.0,67.3 L139.2,67.2 L139.4,67.1 L139.5,67.1 L139.7,67.1 L139.9,67.2 L140.1,67.3 L140.3,67.5 L140.4,67.7 L140.6,68.0 L140.8,68.3 L141.0,68.6 L141.2,69.0 L141.3,69.4 L141.5,69.8 L141.7,70.2 L141.9,70.6 L142.1,71.0 L142.2,71.5 L142.4,71.9 L142.6,72.4 L142.8,72.8 L143.0,73.2 L143.1,73.6 L143.3,74.0 L143.5,74.3 L143.7,74.7 L143.9,75.0 L144.0,75.3 L144.2,75.6 L144.4,75.9 L144.6,76.1 L144.8,76.3 L144.9,76.5 L145.1,76.7 L145.3,76.9 L145.5,77.0 L145.7,77.1 L145.8,77.2 L146.0,77.3 L146.2,77.4 L146.4,77.5 L146.6,77.6 L146.7,77.6 L146.9,77.7 L147.1,77.7 L147.3,77.8 L147.5,77.8 L147.6,77.8 L147.8,77.8 L148.0,77.8 L148.2,77.9 L148.4,77.9 L148.5,77.9 L148.7,77.9 L148.9,77.9 L149.1,77.9 L149.3,77.9 L149.4,77.9 L149.6,77.9 L149.8,77.9 L150.0,77.9 L150.2,77.9 L150.3,77.9 L150.5,77.9 L150.7,77.9 L150.9,77.9 L151.1,77.9 L151.2,77.9 L151.4,77.9 L151.6,77.9 L151.8,77.9 L152.0,77.9 L152.1,77.9 L152.3,77.9 L152.5,77.9 L152.7,77.9 L152.9,77.9 L153.0,77.9 L153.2,77.9 L153.4,77.9 L153.6,77.9 L153.8,77.9 L153.9,77.9 L154.1,77.9 L154.3,77.9 L154.5,77.9 L154.7,77.9 L154.8,77.9 L155.0,77.9 L155.2,77.9 L155.4,77.9 L155.6,77.9 L155.7,77.9 L155.9,77.9 L156.1,77.9 L156.3,77.9 L156.5,77.9 L156.6,77.9 L156.8,77.9 L157.0,77.9" stroke="#40e040" stroke-width="0.9" fill="none"/></svg><div class="s" style="left:652px;top:249.1px">600000.0</div><div class="s" style="left:652px;top:268.6px">400000.0</div><div class="s" style="left:652px;top:288.1px">200000.0</div><div class="s" style="left:652px;top:307.6px">0.0</div><div class="s" style="left:644px;top:283px;transform:rotate(-90deg) scaleX(.84)">Intensity</div><div class="s" style="left:677.5px;top:313px">1.4</div><div class="s" style="left:886px;top:313px">2.4</div><div class="s" style="left:764px;top:322.5px">Column II</div><div class="a" style="left:905.5px;top:233.5px;width:48px;height:49px;background:#fff;border:1px solid #9a9a9a"></div><div class="a" style="left:906.5px;top:234.5px;width:46px;height:11px;background:linear-gradient(#fbfbfb,#ececec);border-bottom:1px solid #ddd"></div><div class="s" style="left:908px;top:237px">Legend</div><div class="a" style="left:906.5px;top:252.5px;width:46px;height:1px;background:#ccc"></div><div class="a" style="left:906.5px;top:260.5px;width:46px;height:1px;background:#ccc"></div><div class="s" style="left:906.5px;top:246.5px;color:#ff3030">TIC</div><div class="s" style="left:906.5px;top:254.5px;color:#30e030">Review SIC</div><div class="a" style="left:906.5px;top:276px;width:46px;height:6px;background:#eaeaea"></div><div class="a" style="left:916px;top:276.5px;width:26px;height:5px;border-radius:2px;background:linear-gradient(#f8f8f8,#d8d8d8);border:1px solid #aaa"></div><div class="a" style="left:904.5px;top:287.5px;width:48px;height:40px;border:1px solid #c8c8c8;border-radius:2px"></div><div class="a" style="left:909px;top:285px;width:38px;height:6px;background:#f0f0f0"></div><div class="s" style="left:910px;top:285.5px">Projection Line</div><div class="s" style="left:908px;top:295px">Lines:</div><div class="s" style="left:908px;top:306.5px">Gap:</div><div class="s" style="left:908px;top:318px">Color:</div><div class="a" style="left:924.5px;top:293.5px;width:24px;height:8px;background:#e9e9e9;border:1px solid #c0c0c0"></div><div class="s" style="left:937px;top:295.0px">1</div><div class="a" style="left:942.5px;top:293.5px;width:6px;height:8px;background:linear-gradient(#f5f5f5,#dcdcdc);border:1px solid #b0b0b0"></div><div class="a" style="left:924.5px;top:305px;width:24px;height:8px;background:#e9e9e9;border:1px solid #c0c0c0"></div><div class="s" style="left:937px;top:306.5px">0</div><div class="a" style="left:942.5px;top:305px;width:6px;height:8px;background:linear-gradient(#f5f5f5,#dcdcdc);border:1px solid #b0b0b0"></div><div class="a" style="left:925px;top:317px;width:25px;height:8.5px;background:#ff0000;border:0.5px solid #888"></div><div class="a" style="left:643px;top:330px;width:313px;height:13px;background:#f0f0f0"></div><svg class="a" style="left:643px;top:330px" width="200" height="13">
<path d="M7,3 l-3,3.5 l3,3.5z" fill="#ddd" stroke="#666" stroke-width="0.7"/>
<path d="M18,3 l3,3.5 l-3,3.5z" fill="#ddd" stroke="#666" stroke-width="0.7"/>
<rect x="44.5" y="1.5" width="1" height="10" fill="#c9c9c9"/>
<circle cx="70" cy="6" r="2.3" fill="#e4eefa" stroke="#4a7ec8" stroke-width="0.8"/><path d="M71.5,7.5 l2,2" stroke="#8a5a30" stroke-width="1"/>
<circle cx="81" cy="6" r="2.3" fill="#e4eefa" stroke="#4a7ec8" stroke-width="0.8"/><path d="M82.5,7.5 l2,2" stroke="#8a5a30" stroke-width="1"/>
<path d="M91,6.5 h6 M94,3.5 v6" stroke="#444" stroke-width="0.9"/>
<rect x="119.5" y="1.5" width="1" height="10" fill="#c9c9c9"/>
</svg><div class="a" style="left:666px;top:332px;width:20px;height:9.5px;background:#fff;border:1px solid #b8b8b8"></div><div class="s" style="left:673px;top:334px">10</div><div class="a" style="left:680.5px;top:332.5px;width:5px;height:8.5px;background:linear-gradient(#f5f5f5,#dcdcdc);border-left:1px solid #ccc"></div><div class="s" style="left:691px;top:334px">Zoom:</div><div class="s" style="left:740px;top:334px">Reset</div><div class="dd" style="left:757.5px;top:337.5px"></div><div class="s" style="left:766px;top:334px">Value Mapping:</div><div class="a" style="left:803px;top:332.5px;width:40px;height:9.5px;border:1px solid #a9a9a9;background:linear-gradient(#f4f4f4,#dcdcdc)"></div><div class="s" style="left:805px;top:334px">No Scale</div><div class="dd" style="left:837px;top:337.5px"></div><div class="a" style="left:643px;top:343px;width:313px;height:14.5px;background:#f0f0f0"></div><div class="a" style="left:643px;top:343px;width:313px;height:1px;background:#c8c8c8"></div><div class="a" style="left:644px;top:344px;width:33px;height:12px;background:#fff;border:1px solid #c0c0c0;border-top:0"></div><div class="s" style="left:647px;top:347px">Interactive</div><div class="a" style="left:677px;top:344px;width:18px;height:9px;background:linear-gradient(#eaeaea,#d8d8d8);border:1px solid #b0b0b0;border-top:0"></div><div class="s" style="left:679px;top:345.5px">Static</div>
<div class="a" style="left:643px;top:377px;width:313px;height:12px;background:#f0f0f0;border-top:1px solid #cfd6de"></div><svg class="a" style="left:643px;top:377px" width="160" height="12">
<path d="M3,4 q3,-1 5,2 M7,9 q-3,1 -5,-2" stroke="#e0a830" stroke-width="1.6" fill="none"/>
<circle cx="18" cy="6" r="2.5" fill="#d9a460" stroke="#b07a40" stroke-width="0.6"/>
<rect x="25.5" y="2.5" width="7" height="7" fill="#a9c0de" stroke="#6f8db5" stroke-width="0.6"/><rect x="27.5" y="3" width="3" height="2.5" fill="#eef3fa"/>
<path d="M38,3 h4 l-2,3 h3 l-3,4" stroke="#d02828" stroke-width="1.1" fill="none"/>
<path d="M48,3 h5 M50,3 v7 M53,6 v4" stroke="#555" stroke-width="0.9" fill="none"/><path d="M52,9 v2" stroke="#3060c0" stroke-width="1"/>
<path d="M57,3 h5 M59,3 v7 M62,6 v4" stroke="#777" stroke-width="0.9" fill="none"/><path d="M61,9 v2" stroke="#3060c0" stroke-width="1"/>
<rect x="66" y="1.5" width="1" height="9" fill="#c9c9c9"/>
<path d="M127.5,6 l3,-3 v2 h4 v2 h-4 v2z" fill="#f2cc5c" stroke="#d9a730" stroke-width="0.5"/>
<path d="M145.5,6 l-3,-3 v2 h-4 v2 h4 v2z" fill="#f2cc5c" stroke="#d9a730" stroke-width="0.5"/>
</svg><div class="s" style="left:713px;top:379.5px">Approve</div><div class="dd" style="left:736.5px;top:383px"></div><div class="s" style="left:742px;top:379.5px">Reject</div><div class="dd" style="left:761.5px;top:383px"></div><div class="a" style="left:644px;top:389px;width:311px;height:112px;background:#fff;border:1px solid #8f8f8f"></div><div class="a" style="left:645px;top:390px;width:301px;height:11px;background:linear-gradient(#ffffff,#f1f3f5)"></div><div class="s" style="left:647px;top:392.5px;color:#333">Review Status</div><div class="s" style="left:686.7px;top:392.5px;color:#333">BlobID</div><div class="s" style="left:724.7px;top:392.5px;color:#333">Compound Name</div><div class="s" style="left:770.7px;top:392.5px;color:#333">Group Name</div><div class="s" style="left:808px;top:392.5px;color:#333">Inclusion</div><div class="s" style="left:845.8px;top:392.5px;color:#333">Internal Standard</div><div class="s" style="left:893.3px;top:392.5px;color:#333">Retention ...</div><div class="s" style="left:930.8px;top:392.5px;color:#333">Reten</div><div class="a" style="left:684.2px;top:390.5px;width:1px;height:10px;background:#e3e6ea"></div><div class="a" style="left:721.7px;top:390.5px;width:1px;height:10px;background:#e3e6ea"></div><div class="a" style="left:768.3px;top:390.5px;width:1px;height:10px;background:#e3e6ea"></div><div class="a" style="left:805.8px;top:390.5px;width:1px;height:10px;background:#e3e6ea"></div><div class="a" style="left:843.3px;top:390.5px;width:1px;height:10px;background:#e3e6ea"></div><div class="a" style="left:891.3px;top:390.5px;width:1px;height:10px;background:#e3e6ea"></div><div class="a" style="left:928.3px;top:390.5px;width:1px;height:10px;background:#e3e6ea"></div><div class="a" style="left:645px;top:409.45px;width:301px;height:0.8px;background:#a5a5a5"></div><div class="s" style="left:700.8px;top:402.70px;width:23.81px;text-align:right;color:#000">1</div><div class="s" style="left:722.5px;top:402.70px;color:#000">Decane</div><div class="a" style="left:821.5px;top:402.50px;width:6px;height:6px;border:0.8px solid #bbb;background:linear-gradient(135deg,#dcdcdc,#f8f8f8)"></div><div class="s" style="left:880px;top:402.70px;width:11.90px;text-align:right;color:#000">0</div><div class="s" style="left:907.5px;top:402.70px;width:23.81px;text-align:right;color:#000">2.65</div><div class="a" style="left:645px;top:418.50px;width:301px;height:0.8px;background:#a5a5a5"></div><div class="s" style="left:700.8px;top:411.75px;width:23.81px;text-align:right;color:#000">2</div><div class="s" style="left:722.5px;top:411.75px;color:#000">Decane</div><div class="a" style="left:821.5px;top:411.55px;width:6px;height:6px;border:0.8px solid #bbb;background:linear-gradient(135deg,#dcdcdc,#f8f8f8)"></div><div class="s" style="left:880px;top:411.75px;width:11.90px;text-align:right;color:#000">0</div><div class="s" style="left:907.5px;top:411.75px;width:23.81px;text-align:right;color:#000">1.90</div><div class="a" style="left:645px;top:427.55px;width:301px;height:0.8px;background:#a5a5a5"></div><div class="s" style="left:700.8px;top:420.80px;width:23.81px;text-align:right;color:#000">3</div><div class="s" style="left:722.5px;top:420.80px;color:#000">Decanoic acid, ...</div><div class="a" style="left:821.5px;top:420.60px;width:6px;height:6px;border:0.8px solid #bbb;background:linear-gradient(135deg,#dcdcdc,#f8f8f8)"></div><div class="s" style="left:880px;top:420.80px;width:11.90px;text-align:right;color:#000">0</div><div class="s" style="left:907.5px;top:420.80px;width:23.81px;text-align:right;color:#000">4.25</div><div class="a" style="left:645px;top:436.60px;width:301px;height:0.8px;background:#a5a5a5"></div><div class="s" style="left:700.8px;top:429.85px;width:23.81px;text-align:right;color:#000">4</div><div class="s" style="left:722.5px;top:429.85px;color:#000">Phenol, 2,6-dim...</div><div class="a" style="left:821.5px;top:429.65px;width:6px;height:6px;border:0.8px solid #bbb;background:linear-gradient(135deg,#dcdcdc,#f8f8f8)"></div><div class="s" style="left:880px;top:429.85px;width:11.90px;text-align:right;color:#000">0</div><div class="s" style="left:907.5px;top:429.85px;width:23.81px;text-align:right;color:#000">2.70</div><div class="a" style="left:645px;top:437.20px;width:301px;height:9.05px;background:#3399ff"></div><div class="a" style="left:645px;top:445.65px;width:301px;height:0.8px;background:#a5a5a5"></div><div class="s" style="left:700.8px;top:438.90px;width:23.81px;text-align:right;color:#fff">5</div><div class="s" style="left:722.5px;top:438.90px;color:#fff">Decanoic acid, ...</div><div class="a" style="left:821.5px;top:438.70px;width:6px;height:6px;border:0.8px solid #bbb;background:linear-gradient(135deg,#dcdcdc,#f8f8f8)"></div><div class="s" style="left:880px;top:438.90px;width:11.90px;text-align:right;color:#fff">0</div><div class="s" style="left:907.5px;top:438.90px;width:23.81px;text-align:right;color:#fff">4.90</div><div class="a" style="left:645px;top:454.70px;width:301px;height:0.8px;background:#a5a5a5"></div><div class="s" style="left:700.8px;top:447.95px;width:23.81px;text-align:right;color:#000">6</div><div class="s" style="left:722.5px;top:447.95px;color:#000">2,6-Xylidine</div><div class="a" style="left:821.5px;top:447.75px;width:6px;height:6px;border:0.8px solid #bbb;background:linear-gradient(135deg,#dcdcdc,#f8f8f8)"></div><div class="s" style="left:880px;top:447.95px;width:11.90px;text-align:right;color:#000">0</div><div class="s" style="left:907.5px;top:447.95px;width:23.81px;text-align:right;color:#000">3.15</div><div class="a" style="left:645px;top:463.75px;width:301px;height:0.8px;background:#a5a5a5"></div><div class="s" style="left:700.8px;top:457.00px;width:23.81px;text-align:right;color:#000">7</div><div class="s" style="left:722.5px;top:457.00px;color:#000">Decanoic acid, ...</div><div class="a" style="left:821.5px;top:456.80px;width:6px;height:6px;border:0.8px solid #bbb;background:linear-gradient(135deg,#dcdcdc,#f8f8f8)"></div><div class="s" style="left:880px;top:457.00px;width:11.90px;text-align:right;color:#000">0</div><div class="s" style="left:907.5px;top:457.00px;width:23.81px;text-align:right;color:#000">5.50</div><div class="a" style="left:645px;top:472.80px;width:301px;height:0.8px;background:#a5a5a5"></div><div class="s" style="left:700.8px;top:466.05px;width:23.81px;text-align:right;color:#000">8</div><div class="s" style="left:722.5px;top:466.05px;color:#000">2,3-Butanediol</div><div class="a" style="left:821.5px;top:465.85px;width:6px;height:6px;border:0.8px solid #bbb;background:linear-gradient(135deg,#dcdcdc,#f8f8f8)"></div><div class="s" style="left:880px;top:466.05px;width:11.90px;text-align:right;color:#000">0</div><div class="s" style="left:907.5px;top:466.05px;width:23.81px;text-align:right;color:#000">0.20</div><div class="a" style="left:645px;top:481.85px;width:301px;height:0.8px;background:#a5a5a5"></div><div class="s" style="left:700.8px;top:475.10px;width:23.81px;text-align:right;color:#000">9</div><div class="s" style="left:722.5px;top:475.10px;color:#000">1-Octanol</div><div class="a" style="left:821.5px;top:474.90px;width:6px;height:6px;border:0.8px solid #bbb;background:linear-gradient(135deg,#dcdcdc,#f8f8f8)"></div><div class="s" style="left:880px;top:475.10px;width:11.90px;text-align:right;color:#000">0</div><div class="s" style="left:907.5px;top:475.10px;width:23.81px;text-align:right;color:#000">2.40</div><div class="a" style="left:645px;top:490.90px;width:301px;height:0.8px;background:#a5a5a5"></div><div class="s" style="left:700.8px;top:484.15px;width:23.81px;text-align:right;color:#000">10</div><div class="s" style="left:722.5px;top:484.15px;color:#000">Cyclohexanami...</div><div class="a" style="left:821.5px;top:483.95px;width:6px;height:6px;border:0.8px solid #bbb;background:linear-gradient(135deg,#dcdcdc,#f8f8f8)"></div><div class="s" style="left:880px;top:484.15px;width:11.90px;text-align:right;color:#000">0</div><div class="s" style="left:907.5px;top:484.15px;width:23.81px;text-align:right;color:#000">4.90</div><div class="a" style="left:684.2px;top:401px;width:0.8px;height:90.5px;background:#a5a5a5"></div><div class="a" style="left:721.7px;top:401px;width:0.8px;height:90.5px;background:#a5a5a5"></div><div class="a" style="left:768.3px;top:401px;width:0.8px;height:90.5px;background:#a5a5a5"></div><div class="a" style="left:805.8px;top:401px;width:0.8px;height:90.5px;background:#a5a5a5"></div><div class="a" style="left:843.3px;top:401px;width:0.8px;height:90.5px;background:#a5a5a5"></div><div class="a" style="left:891.3px;top:401px;width:0.8px;height:90.5px;background:#a5a5a5"></div><div class="a" style="left:928.3px;top:401px;width:0.8px;height:90.5px;background:#a5a5a5"></div><div class="a" style="left:946px;top:401px;width:8.5px;height:90.5px;background:#f0f0f0"></div><div class="a" style="left:947px;top:411px;width:6px;height:6.5px;border:0.8px solid #999;border-radius:1px;background:linear-gradient(90deg,#f0f0f0,#d8d8d8)"></div><div class="a" style="left:948.5px;top:404px;width:0;height:0;border-left:1.5px solid transparent;border-right:1.5px solid transparent;border-bottom:2px solid #444"></div><div class="a" style="left:948.5px;top:486.5px;width:0;height:0;border-left:1.5px solid transparent;border-right:1.5px solid transparent;border-top:2px solid #444"></div><div class="a" style="left:645px;top:491.5px;width:309px;height:8.5px;background:#f0f0f0"></div><div class="a" style="left:655px;top:492.5px;width:212.5px;height:6.5px;border:0.8px solid #a0a0a0;border-radius:2px;background:linear-gradient(#f4f4f4,#d0d4d8)"></div><div class="a" style="left:647.5px;top:494px;width:0;height:0;border-top:1.5px solid transparent;border-bottom:1.5px solid transparent;border-right:2px solid #444"></div><div class="a" style="left:940px;top:494px;width:0;height:0;border-top:1.5px solid transparent;border-bottom:1.5px solid transparent;border-left:2px solid #444"></div><div class="a" style="left:643px;top:501px;width:313px;height:15px;background:#f0f0f0"></div><div class="a" style="left:643.5px;top:501px;width:19.5px;height:12px;background:#fff;border:1px solid #c0c0c0;border-top:0"></div><div class="s" style="left:646.5px;top:505px">Blobs</div><div class="a" style="left:663px;top:502px;width:19px;height:9.5px;background:linear-gradient(#eaeaea,#d8d8d8);border:1px solid #b0b0b0;border-top:0"></div><div class="s" style="left:665px;top:503.3px">Areas</div><div class="a" style="left:682px;top:502px;width:39px;height:9.5px;background:linear-gradient(#eaeaea,#d8d8d8);border:1px solid #b0b0b0;border-top:0"></div><div class="s" style="left:684px;top:503.3px;transform:scaleX(.78)">Excluded Blobs</div>
<div class="a" style="left:3px;top:298px;width:634px;height:216px;background:#f0f0f0"></div><div class="a" style="left:1px;top:298px;width:2.5px;height:220px;background:#dbe5ef"></div><div class="a" style="left:636px;top:298px;width:3px;height:220px;background:#dbe5ef"></div><div class="a" style="left:1px;top:514px;width:639px;height:3px;background:#dbe5ef"></div><div class="a" style="left:0;top:517px;width:640px;height:2px;background:#8d9298"></div><svg class="a" style="left:3px;top:298px" width="220" height="12">
<rect x="5" y="2" width="3" height="8" rx="1.5" fill="none" stroke="#3aa860" stroke-width="1.3"/><path d="M9,10 l3,-4" stroke="#e0b040" stroke-width="1.5"/>
<rect x="57" y="1.5" width="8" height="8.5" fill="#5a2a9a"/><path d="M58,9 l3,-6 l3,6z" fill="#30c0e0"/><rect x="58" y="2" width="6" height="2" fill="#c040c0" opacity=".6"/>
<path d="M94,10 l2.5,-8 l2.5,8 M95,7 h3 M99,4 h2 M99,7 h2" stroke="#d04040" stroke-width="0.8" fill="none"/>
<rect x="141.5" y="1.5" width="1" height="9" fill="#c9c9c9"/>
<rect x="191.5" y="1.5" width="1" height="9" fill="#c9c9c9"/>
<rect x="195" y="2" width="6" height="8" fill="#e8dfc0" stroke="#a89a70" stroke-width="0.6"/><rect x="197" y="4" width="5" height="6" fill="#eef3fa" stroke="#8aa0c0" stroke-width="0.5"/>
</svg><div class="s" style="left:17.5px;top:300.8px">Search Library</div><div class="dd" style="left:54.5px;top:304px"></div><div class="s" style="left:70px;top:300.8px">Open SIC</div><div class="s" style="left:106px;top:300.8px">Arithmetic Ops</div><div class="s" style="left:147.5px;top:300.8px">Formula Calculator</div><div class="s" style="left:207.5px;top:300.8px">Copy to Clipboard</div><div class="a" style="left:9px;top:316px;width:74px;height:175.5px;border:1px solid #c8ccd0;border-radius:1px"></div><div class="s" style="left:10.5px;top:311.8px">Spectrum List</div><div class="a" style="left:9.5px;top:318.5px;width:73px;height:172.5px;background:#f0f0f0;border:1px solid #9aa0a6"></div><div class="a" style="left:10.5px;top:319.5px;width:71px;height:10.5px;background:linear-gradient(#fff,#f1f3f5);border-bottom:1px solid #d8d8d8"></div><div class="s" style="left:12px;top:322px">Active</div><div class="s" style="left:34px;top:322px">MS</div><div class="s" style="left:74px;top:322px">Visi</div><div class="a" style="left:31px;top:320px;width:1px;height:10px;background:#e3e6ea"></div><div class="a" style="left:71.5px;top:320px;width:1px;height:10px;background:#e3e6ea"></div><div class="a" style="left:10.5px;top:330px;width:71px;height:17px;background:#fff"></div><div class="a" style="left:10.5px;top:338px;width:71px;height:0.8px;background:#aaa"></div><div class="a" style="left:10.5px;top:346.5px;width:71px;height:0.8px;background:#aaa"></div><div class="a" style="left:31.5px;top:330px;width:0.8px;height:17px;background:#aaa"></div><div class="a" style="left:72px;top:330px;width:0.8px;height:17px;background:#aaa"></div><div class="a" style="left:80.5px;top:330px;width:1px;height:17px;background:#c8c8c8"></div><div class="a" style="left:18.5px;top:331.5px;width:6px;height:6px;border:0.8px solid #999;background:linear-gradient(135deg,#dcdcdc,#fafafa)"></div><svg class="a" style="left:18px;top:331px" width="8" height="8"><path d="M1.8,4 l1.5,2 l3,-4.5" stroke="#1a3a8a" stroke-width="1" fill="none"/></svg><div class="a" style="left:18.5px;top:339.5px;width:6px;height:6px;border:0.8px solid #ccc;background:linear-gradient(135deg,#e6e6e6,#fafafa)"></div><div class="s" style="left:32.5px;top:331.8px">Peak</div><div class="s" style="left:32.5px;top:340.3px">MS Reference</div><div class="a" style="left:10.5px;top:482.5px;width:71px;height:8px;background:#f0f0f0;border-top:1px solid #e0e0e0"></div><div class="a" style="left:19px;top:483.5px;width:26.5px;height:7px;border:0.8px solid #a0a0a0;border-radius:2px;background:linear-gradient(#f6f6f6,#d6dadd)"></div><div class="a" style="left:13px;top:485.5px;width:0;height:0;border-top:1.5px solid transparent;border-bottom:1.5px solid transparent;border-right:2px solid #555"></div><div class="a" style="left:77px;top:485.5px;width:0;height:0;border-top:1.5px solid transparent;border-bottom:1.5px solid transparent;border-left:2px solid #555"></div><div class="a" style="left:15px;top:497px;width:24.5px;height:10.5px;border:1px solid #8e8f8f;border-radius:2px;background:linear-gradient(#f2f2f2 0,#ebebeb 50%,#dddddd 51%,#cfcfcf 100%)"></div><div class="s" style="left:22.5px;top:499.5px">Add</div><div class="a" style="left:43px;top:497px;width:34.5px;height:10.5px;border:1px solid #8e8f8f;border-radius:2px;background:linear-gradient(#f2f2f2 0,#ebebeb 50%,#dddddd 51%,#cfcfcf 100%)"></div><div class="s" style="left:50px;top:499.5px">Remove</div><div class="a" style="left:88px;top:310px;width:1.5px;height:204px;background:#7a7a7a"></div><div class="a" style="left:89.5px;top:310px;width:1px;height:204px;background:#cfcfcf"></div><div class="a" style="left:85.5px;top:312px;width:0;height:0;border-top:1.5px solid transparent;border-bottom:1.5px solid transparent;border-right:2px solid #222"></div><div class="a" style="left:85.5px;top:318px;width:0;height:0;border-top:1.5px solid transparent;border-bottom:1.5px solid transparent;border-left:2px solid #222"></div><div class="a" style="left:90px;top:309.5px;width:547px;height:1.2px;background:#7a7a7a"></div><div class="a" style="left:90px;top:322.5px;width:542px;height:1px;background:#a0a0a0"></div><div class="a" style="left:90px;top:311.5px;width:27.5px;height:12px;background:#fff;border:1px solid #a8a8a8;border-bottom:0"></div><div class="s" style="left:92.5px;top:314px">Spectrum</div><div class="a" style="left:118px;top:313px;width:33.5px;height:9.5px;background:linear-gradient(#eaeaea,#d8d8d8);border:1px solid #a8a8a8;border-bottom:0"></div><div class="s" style="left:120px;top:315.3px">Mass Defect</div><div class="a" style="left:90px;top:323.5px;width:438.5px;height:123.5px;background:#fff;border-right:1px solid #a0a0a0;border-bottom:1px solid #a0a0a0"></div><svg class="a" style="left:90px;top:323px" width="440" height="125"><path d="M35.8,21.69999999999999 V94.5 H424" stroke="#333" stroke-width="0.9" fill="none"/><path d="M35.8,58.19999999999999 H424" stroke="#888" stroke-width="0.7"/><path d="M33.3,21.7 H35.8" stroke="#333" stroke-width="0.8"/><path d="M34.599999999999994,30.8 H35.8" stroke="#999" stroke-width="0.6"/><path d="M33.3,39.9 H35.8" stroke="#333" stroke-width="0.8"/><path d="M34.599999999999994,49.0 H35.8" stroke="#999" stroke-width="0.6"/><path d="M33.3,58.1 H35.8" stroke="#333" stroke-width="0.8"/><path d="M34.599999999999994,67.2 H35.8" stroke="#999" stroke-width="0.6"/><path d="M33.3,76.3 H35.8" stroke="#333" stroke-width="0.8"/><path d="M34.599999999999994,85.4 H35.8" stroke="#999" stroke-width="0.6"/><path d="M33.3,94.5 H35.8" stroke="#333" stroke-width="0.8"/><path d="M35.8,94.5 v2.5" stroke="#333" stroke-width="0.8"/><path d="M49.6,94.5 v1.3" stroke="#999" stroke-width="0.6"/><path d="M63.3,94.5 v2.5" stroke="#333" stroke-width="0.8"/><path d="M77.1,94.5 v1.3" stroke="#999" stroke-width="0.6"/><path d="M90.8,94.5 v2.5" stroke="#333" stroke-width="0.8"/><path d="M104.6,94.5 v1.3" stroke="#999" stroke-width="0.6"/><path d="M118.3,94.5 v2.5" stroke="#333" stroke-width="0.8"/><path d="M132.1,94.5 v1.3" stroke="#999" stroke-width="0.6"/><path d="M145.8,94.5 v2.5" stroke="#333" stroke-width="0.8"/><path d="M159.6,94.5 v1.3" stroke="#999" stroke-width="0.6"/><path d="M173.3,94.5 v2.5" stroke="#333" stroke-width="0.8"/><path d="M187.1,94.5 v1.3" stroke="#999" stroke-width="0.6"/><path d="M200.8,94.5 v2.5" stroke="#333" stroke-width="0.8"/><path d="M214.6,94.5 v1.3" stroke="#999" stroke-width="0.6"/><path d="M228.3,94.5 v2.5" stroke="#333" stroke-width="0.8"/><path d="M242.1,94.5 v1.3" stroke="#999" stroke-width="0.6"/><path d="M255.8,94.5 v2.5" stroke="#333" stroke-width="0.8"/><path d="M269.6,94.5 v1.3" stroke="#999" stroke-width="0.6"/><path d="M283.3,94.5 v2.5" stroke="#333" stroke-width="0.8"/><path d="M297.1,94.5 v1.3" stroke="#999" stroke-width="0.6"/><path d="M310.8,94.5 v2.5" stroke="#333" stroke-width="0.8"/><path d="M324.6,94.5 v1.3" stroke="#999" stroke-width="0.6"/><path d="M338.3,94.5 v2.5" stroke="#333" stroke-width="0.8"/><path d="M352.1,94.5 v1.3" stroke="#999" stroke-width="0.6"/><path d="M365.8,94.5 v2.5" stroke="#333" stroke-width="0.8"/><path d="M379.6,94.5 v1.3" stroke="#999" stroke-width="0.6"/><path d="M393.3,94.5 v2.5" stroke="#333" stroke-width="0.8"/><path d="M407.1,94.5 v1.3" stroke="#999" stroke-width="0.6"/><path d="M420.8,94.5 v2.5" stroke="#333" stroke-width="0.8"/><path d="M50.7,58.19999999999999 V47.2" stroke="#4040ff" stroke-width="0.8"/><path d="M53.4,58.19999999999999 V47.2" stroke="#4040ff" stroke-width="0.8"/><path d="M48.2,58.19999999999999 V55.3" stroke="#4040ff" stroke-width="0.8"/><path d="M70.2,58.19999999999999 V48.3" stroke="#4040ff" stroke-width="0.8"/><path d="M72.9,58.19999999999999 V56.4" stroke="#4040ff" stroke-width="0.8"/><path d="M76.4,58.19999999999999 V52.7" stroke="#4040ff" stroke-width="0.8"/><path d="M89.4,58.19999999999999 V56.0" stroke="#4040ff" stroke-width="0.8"/><path d="M96.3,58.19999999999999 V21.7" stroke="#4040ff" stroke-width="0.8"/><path d="M98.4,58.19999999999999 V54.5" stroke="#4040ff" stroke-width="0.8"/><path d="M108.7,58.19999999999999 V56.7" stroke="#4040ff" stroke-width="0.8"/><path d="M114.2,58.19999999999999 V40.7" stroke="#4040ff" stroke-width="0.8"/><path d="M116.2,58.19999999999999 V56.7" stroke="#4040ff" stroke-width="0.8"/><path d="M125.2,58.19999999999999 V57.1" stroke="#4040ff" stroke-width="0.8"/><path d="M133.4,58.19999999999999 V56.7" stroke="#4040ff" stroke-width="0.8"/><path d="M149.9,58.19999999999999 V57.8" stroke="#4040ff" stroke-width="0.8"/><path d="M171.9,58.19999999999999 V56.7" stroke="#4040ff" stroke-width="0.8"/><path d="M191.2,58.19999999999999 V56.0" stroke="#4040ff" stroke-width="0.8"/><path d="M207.7,58.19999999999999 V56.7" stroke="#4040ff" stroke-width="0.8"/><path d="M86.7,58.19999999999999 V57.5" stroke="#4040ff" stroke-width="0.8"/><path d="M50.7,58.19999999999999 V65.1" stroke="#4a8a2a" stroke-width="0.8"/><path d="M53.4,58.19999999999999 V65.1" stroke="#4a8a2a" stroke-width="0.8"/><path d="M70.2,58.19999999999999 V67.7" stroke="#4a8a2a" stroke-width="0.8"/><path d="M76.4,58.19999999999999 V63.7" stroke="#4a8a2a" stroke-width="0.8"/><path d="M89.4,58.19999999999999 V60.8" stroke="#4a8a2a" stroke-width="0.8"/><path d="M96.3,58.19999999999999 V94.7" stroke="#4a8a2a" stroke-width="0.8"/><path d="M114.2,58.19999999999999 V79.4" stroke="#4a8a2a" stroke-width="0.8"/><path d="M133.4,58.19999999999999 V59.3" stroke="#4a8a2a" stroke-width="0.8"/><path d="M171.9,58.19999999999999 V58.9" stroke="#4a8a2a" stroke-width="0.8"/><path d="M191.2,58.19999999999999 V64.4" stroke="#4a8a2a" stroke-width="0.8"/><path d="M207.7,58.19999999999999 V61.1" stroke="#4a8a2a" stroke-width="0.8"/><path d="M86.7,58.19999999999999 V58.9" stroke="#4a8a2a" stroke-width="0.8"/><path d="M98.4,58.19999999999999 V59.3" stroke="#4a8a2a" stroke-width="0.8"/></svg><div class="m" style="left:97.7px;top:342.1px;color:#222">100.0</div><div class="m" style="left:100.8px;top:360.4px;color:#222">50.0</div><div class="m" style="left:103.9px;top:378.6px;color:#222">0.0</div><div class="m" style="left:100.8px;top:396.9px;color:#222">50.0</div><div class="m" style="left:97.7px;top:414.9px;color:#222">100.0</div><div class="m" style="left:119.6px;top:420.5px;color:#222">30.0</div><div class="m" style="left:147.1px;top:420.5px;color:#222">50.0</div><div class="m" style="left:174.6px;top:420.5px;color:#222">70.0</div><div class="m" style="left:202.1px;top:420.5px;color:#222">90.0</div><div class="m" style="left:228.0px;top:420.5px;color:#222">110.0</div><div class="m" style="left:255.5px;top:420.5px;color:#222">130.0</div><div class="m" style="left:283.0px;top:420.5px;color:#222">150.0</div><div class="m" style="left:310.5px;top:420.5px;color:#222">170.0</div><div class="m" style="left:338.0px;top:420.5px;color:#222">190.0</div><div class="m" style="left:365.5px;top:420.5px;color:#222">210.0</div><div class="m" style="left:393.0px;top:420.5px;color:#222">230.0</div><div class="m" style="left:420.5px;top:420.5px;color:#222">250.0</div><div class="m" style="left:448.0px;top:420.5px;color:#222">270.0</div><div class="m" style="left:475.5px;top:420.5px;color:#222">290.0</div><div class="m" style="left:503.0px;top:420.5px;color:#222">310.0</div><div class="s" style="left:91px;top:400px;transform:rotate(-90deg) scaleX(.84)">Relative Intensity</div><div class="s" style="left:508px;top:427px">m/z</div><div class="s" style="left:137.5px;top:363px;color:#3030ff;font-size:6.6px">41</div><div class="s" style="left:156px;top:364.5px;color:#3030ff;font-size:6.6px">55</div><div class="s" style="left:175px;top:371px;color:#3030ff;font-size:6.6px">69</div><div class="s" style="left:182px;top:337px;color:#3030ff;font-size:6.6px">74</div><div class="s" style="left:200px;top:356px;color:#3030ff;font-size:6.6px">87</div><div class="s" style="left:137px;top:389.5px;color:#4a8a2a;font-size:6.6px">43.0</div><div class="s" style="left:154.5px;top:392.3px;color:#4a8a2a;font-size:6.6px">55.0</div><div class="s" style="left:173.7px;top:386px;color:#4a8a2a;font-size:6.6px">69.0</div><div class="s" style="left:197.5px;top:404px;color:#4a8a2a;font-size:6.6px">87.0</div><div class="s" style="left:217px;top:386px;color:#4a8a2a;font-size:6.6px">101.0</div><div class="s" style="left:254.5px;top:385.5px;color:#4a8a2a;font-size:6.6px">129.0</div><div class="s" style="left:275px;top:390px;color:#4a8a2a;font-size:6.6px">143.0</div><div class="s" style="left:290px;top:387px;color:#4a8a2a;font-size:6.6px">155.0</div><div class="a" style="left:90px;top:447.5px;width:439px;height:12px;background:#f0f0f0"></div><div class="s" style="left:90.5px;top:450.8px">Intensity:</div><div class="a" style="left:116px;top:448.5px;width:33.5px;height:10px;border:1px solid #a9a9a9;background:linear-gradient(#f4f4f4,#dcdcdc)"></div><div class="s" style="left:118px;top:450.8px">Relative</div><div class="dd" style="left:143px;top:453.5px"></div><div class="a" style="left:151px;top:448.5px;width:1px;height:9.5px;background:#c9c9c9"></div><div class="s" style="left:154px;top:450.8px">Layout:</div><div class="a" style="left:174px;top:448.5px;width:42px;height:10px;border:1px solid #a9a9a9;background:linear-gradient(#f4f4f4,#dcdcdc)"></div><div class="s" style="left:176px;top:450.8px">Head-to-Tail</div><div class="dd" style="left:210px;top:453.5px"></div><div class="a" style="left:218px;top:448.5px;width:1px;height:9.5px;background:#c9c9c9"></div><div class="s" style="left:222px;top:450.8px">Reset Zoom</div><div class="dd" style="left:254px;top:453.5px"></div><div class="a" style="left:258.5px;top:448.5px;width:1px;height:9.5px;background:#c9c9c9"></div><div class="s" style="left:261.5px;top:450.8px">Clear Ranges</div><div class="a" style="left:90px;top:460.2px;width:547px;height:1px;background:#c4c4c4"></div><div class="a" style="left:90px;top:463.2px;width:547px;height:1px;background:#b4b4b4"></div><div class="a" style="left:91.5px;top:461.5px;width:0;height:0;border-left:1.5px solid transparent;border-right:1.5px solid transparent;border-bottom:2px solid #222"></div><div class="a" style="left:96.5px;top:461.5px;width:0;height:0;border-left:1.5px solid transparent;border-right:1.5px solid transparent;border-top:2px solid #222"></div><div class="a" style="left:529.5px;top:323px;width:1px;height:137px;background:#8a8a8a"></div><div class="a" style="left:532px;top:324px;width:100px;height:136px;border:1px solid #d8d8d8;border-radius:1px"></div><div class="s" style="left:536px;top:325.5px">Spectral Peak Table</div><div class="a" style="left:534px;top:332.5px;width:96px;height:10px;border:1px solid #9aa0a6;background:linear-gradient(#fff,#f1f3f5)"></div><div class="s" style="left:537px;top:335px">m/z</div><div class="s" style="left:579px;top:335px">Intensity</div><div class="a" style="left:577.5px;top:333.5px;width:1px;height:8px;background:#e0e0e0"></div><div class="a" style="left:620px;top:333.5px;width:9.5px;height:8px;background:#f0f0f0"></div><div class="s" style="left:558px;top:348px">TIC Value:408378.0</div><div class="a" style="left:533px;top:358px;width:98px;height:1px;background:#e0e0e0"></div><div class="s" style="left:536px;top:361px">Edit Selected Range</div><div class="a" style="left:534px;top:378px;width:95px;height:39px;border:1px solid #a8a8a8;background:#f0f0f0"></div><div class="a" style="left:535px;top:369px;width:21.5px;height:10px;background:#f0f0f0;border:1px solid #a8a8a8;border-bottom:0"></div><div class="s" style="left:537.5px;top:371.5px">Range</div><div class="a" style="left:556.5px;top:371px;width:24px;height:7.5px;background:linear-gradient(#eaeaea,#d8d8d8);border:1px solid #a8a8a8;border-bottom:0"></div><div class="s" style="left:558.5px;top:372.3px">Formula</div><div class="a" style="left:581px;top:371px;width:43.5px;height:7.5px;background:linear-gradient(#eaeaea,#d8d8d8);border:1px solid #a8a8a8;border-bottom:0"></div><div class="s" style="left:583px;top:372.3px">General Formula</div><div class="s" style="left:537.5px;top:389px">Range (e.g. "41, 52.5-56.5"):</div><div class="a" style="left:537px;top:398px;width:90.5px;height:10px;background:#fff;border:1px solid #b8b8b8"></div><div class="s" style="left:537px;top:421.5px">Tolerance:</div><div class="s" style="left:567px;top:421.5px">-</div><div class="s" style="left:597px;top:421px">+</div><div class="a" style="left:571px;top:419px;width:22.5px;height:10px;background:#fff;border:1px solid #b8b8b8"></div><div class="s" style="left:572.5px;top:421.5px">0.5</div><div class="a" style="left:604px;top:419px;width:23px;height:10px;background:#fff;border:1px solid #b8b8b8"></div><div class="s" style="left:605.5px;top:421.5px">0.5</div><div class="a" style="left:553px;top:437px;width:30px;height:10.5px;border:1px solid #8e8f8f;border-radius:2px;background:linear-gradient(#f2f2f2 0,#ebebeb 50%,#dddddd 51%,#cfcfcf 100%)"></div><div class="s" style="left:561.5px;top:439.5px">Reset</div><div class="a" style="left:586.5px;top:437px;width:25px;height:10.5px;border:1px solid #8e8f8f;border-radius:2px;background:linear-gradient(#f2f2f2 0,#ebebeb 50%,#dddddd 51%,#cfcfcf 100%)"></div><div class="s" style="left:594px;top:439.5px">Add</div><div class="a" style="left:534px;top:457.5px;width:97px;height:1px;background:#e0e0e0"></div><div class="a" style="left:90.5px;top:467px;width:546px;height:45px;border:1px solid #d0d0d0;border-radius:1px"></div><div class="a" style="left:93px;top:464px;width:34px;height:6px;background:#f0f0f0"></div><div class="s" style="left:93px;top:466.3px">Active Hit List</div><div class="a" style="left:92.5px;top:472.5px;width:539px;height:37px;background:#fff;border:1px solid #9aa0a6"></div><div class="a" style="left:93.5px;top:473.5px;width:529px;height:10px;background:linear-gradient(#fff,#f1f3f5)"></div><div class="s" style="left:95.0px;top:476px;color:#333">Selection</div><div class="s" style="left:134.2px;top:476px;color:#333">Name</div><div class="s" style="left:174.8px;top:476px;color:#333">Formula</div><div class="s" style="left:216.2px;top:476px;color:#333">Match Factor</div><div class="s" style="left:257.5px;top:476px;color:#333">Reverse Ma...</div><div class="s" style="left:298.2px;top:476px;color:#333">Probability</div><div class="s" style="left:338.2px;top:476px;color:#333">CAS#</div><div class="s" style="left:379.8px;top:476px;color:#333">MW</div><div class="s" style="left:420.8px;top:476px;color:#333">RI</div><div class="s" style="left:461.5px;top:476px;color:#333">Base Peak</div><div class="s" style="left:502.2px;top:476px;color:#333">Library</div><div class="s" style="left:542.5px;top:476px;color:#333">LibraryID</div><div class="s" style="left:583.8px;top:476px;color:#333">NIST#</div><div class="a" style="left:132.7px;top:474px;width:1px;height:9.5px;background:#e3e6ea"></div><div class="a" style="left:173.3px;top:474px;width:1px;height:9.5px;background:#e3e6ea"></div><div class="a" style="left:214.7px;top:474px;width:1px;height:9.5px;background:#e3e6ea"></div><div class="a" style="left:256px;top:474px;width:1px;height:9.5px;background:#e3e6ea"></div><div class="a" style="left:296.7px;top:474px;width:1px;height:9.5px;background:#e3e6ea"></div><div class="a" style="left:336.7px;top:474px;width:1px;height:9.5px;background:#e3e6ea"></div><div class="a" style="left:378.3px;top:474px;width:1px;height:9.5px;background:#e3e6ea"></div><div class="a" style="left:419.3px;top:474px;width:1px;height:9.5px;background:#e3e6ea"></div><div class="a" style="left:460px;top:474px;width:1px;height:9.5px;background:#e3e6ea"></div><div class="a" style="left:500.7px;top:474px;width:1px;height:9.5px;background:#e3e6ea"></div><div class="a" style="left:541px;top:474px;width:1px;height:9.5px;background:#e3e6ea"></div><div class="a" style="left:582.3px;top:474px;width:1px;height:9.5px;background:#e3e6ea"></div><div class="a" style="left:93.5px;top:491.4px;width:529px;height:0.8px;background:#a5a5a5"></div><div class="a" style="left:110.5px;top:485.0px;width:6px;height:6px;border:0.8px solid #999;background:linear-gradient(135deg,#dcdcdc,#fafafa)"></div><svg class="a" style="left:110px;top:484.6px" width="8" height="8"><path d="M1.8,4 l1.5,2 l3,-4.5" stroke="#1a3a8a" stroke-width="1" fill="none"/></svg><div class="s" style="left:133.7px;top:485.1px">Decanoic acid...</div><div class="s" style="left:174.3px;top:485.1px">C11H22O2</div><div class="s r" style="left:214.8px;top:485.1px;width:40px;text-align:right">782</div><div class="s r" style="left:255.5px;top:485.1px;width:40px;text-align:right">782</div><div class="s r" style="left:295.5px;top:485.1px;width:40px;text-align:right">30.75</div><div class="s" style="left:337.7px;top:485.1px">110-42-9</div><div class="s r" style="left:378.1px;top:485.1px;width:40px;text-align:right">186</div><div class="s r" style="left:418.8px;top:485.1px;width:40px;text-align:right">1326.0</div><div class="s r" style="left:459.5px;top:485.1px;width:40px;text-align:right">74.0</div><div class="s" style="left:501.7px;top:485.1px">mainlib</div><div class="s r" style="left:541.1px;top:485.1px;width:40px;text-align:right">48996</div><div class="s r" style="left:581.5px;top:485.1px;width:40px;text-align:right">333730</div><div class="a" style="left:93.5px;top:499.5px;width:529px;height:0.8px;background:#a5a5a5"></div><div class="a" style="left:110.5px;top:493.1px;width:6px;height:6px;border:0.8px solid #ccc;background:linear-gradient(135deg,#dcdcdc,#fafafa)"></div><div class="s" style="left:133.7px;top:493.2px">Dodecanoic a...</div><div class="s" style="left:174.3px;top:493.2px">C13H26O2</div><div class="s r" style="left:214.8px;top:493.2px;width:40px;text-align:right">767</div><div class="s r" style="left:255.5px;top:493.2px;width:40px;text-align:right">767</div><div class="s r" style="left:295.5px;top:493.2px;width:40px;text-align:right">18.63</div><div class="s" style="left:337.7px;top:493.2px">2874-74-0</div><div class="s r" style="left:378.1px;top:493.2px;width:40px;text-align:right">214</div><div class="s r" style="left:459.5px;top:493.2px;width:40px;text-align:right">74.0</div><div class="s" style="left:501.7px;top:493.2px">mainlib</div><div class="s r" style="left:541.1px;top:493.2px;width:40px;text-align:right">48946</div><div class="s r" style="left:581.5px;top:493.2px;width:40px;text-align:right">114796</div><div class="a" style="left:93.5px;top:507.6px;width:529px;height:0.8px;background:#a5a5a5"></div><div class="a" style="left:110.5px;top:501.2px;width:6px;height:6px;border:0.8px solid #ccc;background:linear-gradient(135deg,#dcdcdc,#fafafa)"></div><div class="s" style="left:133.7px;top:501.3px">Undecanoic a...</div><div class="s" style="left:174.3px;top:501.3px">C12H24O2</div><div class="s r" style="left:214.8px;top:501.3px;width:40px;text-align:right">767</div><div class="s r" style="left:255.5px;top:501.3px;width:40px;text-align:right">767</div><div class="s r" style="left:295.5px;top:501.3px;width:40px;text-align:right">18.63</div><div class="s" style="left:337.7px;top:501.3px">24323-25-9</div><div class="s r" style="left:378.1px;top:501.3px;width:40px;text-align:right">200</div><div class="s r" style="left:459.5px;top:501.3px;width:40px;text-align:right">74.0</div><div class="s" style="left:501.7px;top:501.3px">mainlib</div><div class="s r" style="left:541.1px;top:501.3px;width:40px;text-align:right">48949</div><div class="s r" style="left:581.5px;top:501.3px;width:40px;text-align:right">114576</div><div class="a" style="left:132.7px;top:483.5px;width:0.8px;height:24.5px;background:#a5a5a5"></div><div class="a" style="left:173.3px;top:483.5px;width:0.8px;height:24.5px;background:#a5a5a5"></div><div class="a" style="left:214.7px;top:483.5px;width:0.8px;height:24.5px;background:#a5a5a5"></div><div class="a" style="left:256px;top:483.5px;width:0.8px;height:24.5px;background:#a5a5a5"></div><div class="a" style="left:296.7px;top:483.5px;width:0.8px;height:24.5px;background:#a5a5a5"></div><div class="a" style="left:336.7px;top:483.5px;width:0.8px;height:24.5px;background:#a5a5a5"></div><div class="a" style="left:378.3px;top:483.5px;width:0.8px;height:24.5px;background:#a5a5a5"></div><div class="a" style="left:419.3px;top:483.5px;width:0.8px;height:24.5px;background:#a5a5a5"></div><div class="a" style="left:460px;top:483.5px;width:0.8px;height:24.5px;background:#a5a5a5"></div><div class="a" style="left:500.7px;top:483.5px;width:0.8px;height:24.5px;background:#a5a5a5"></div><div class="a" style="left:541px;top:483.5px;width:0.8px;height:24.5px;background:#a5a5a5"></div><div class="a" style="left:582.3px;top:483.5px;width:0.8px;height:24.5px;background:#a5a5a5"></div><div class="a" style="left:622.7px;top:473.5px;width:8.3px;height:35px;background:#f0f0f0"></div><div class="a" style="left:625.5px;top:488px;width:0;height:0;border-left:1.5px solid transparent;border-right:1.5px solid transparent;border-bottom:2px solid #444"></div><div class="a" style="left:625.5px;top:503px;width:0;height:0;border-left:1.5px solid transparent;border-right:1.5px solid transparent;border-top:2px solid #444"></div>
<div class="vsep" style="left:320px;top:47px;width:1px;height:236px"></div>
<div class="vsep" style="left:639px;top:47px;width:1px;height:472px"></div>
<div class="vsep" style="left:0;top:47px;width:1px;height:472px"></div>
<div class="a" style="left:640px;top:62px;width:3px;height:457px;background:#dce5ee"></div>
<div class="a" style="left:956px;top:62px;width:3px;height:457px;background:#dce5ee"></div>
<div class="a" style="left:959px;top:47px;width:1px;height:472px;background:#8d9298"></div>

</body></html>
